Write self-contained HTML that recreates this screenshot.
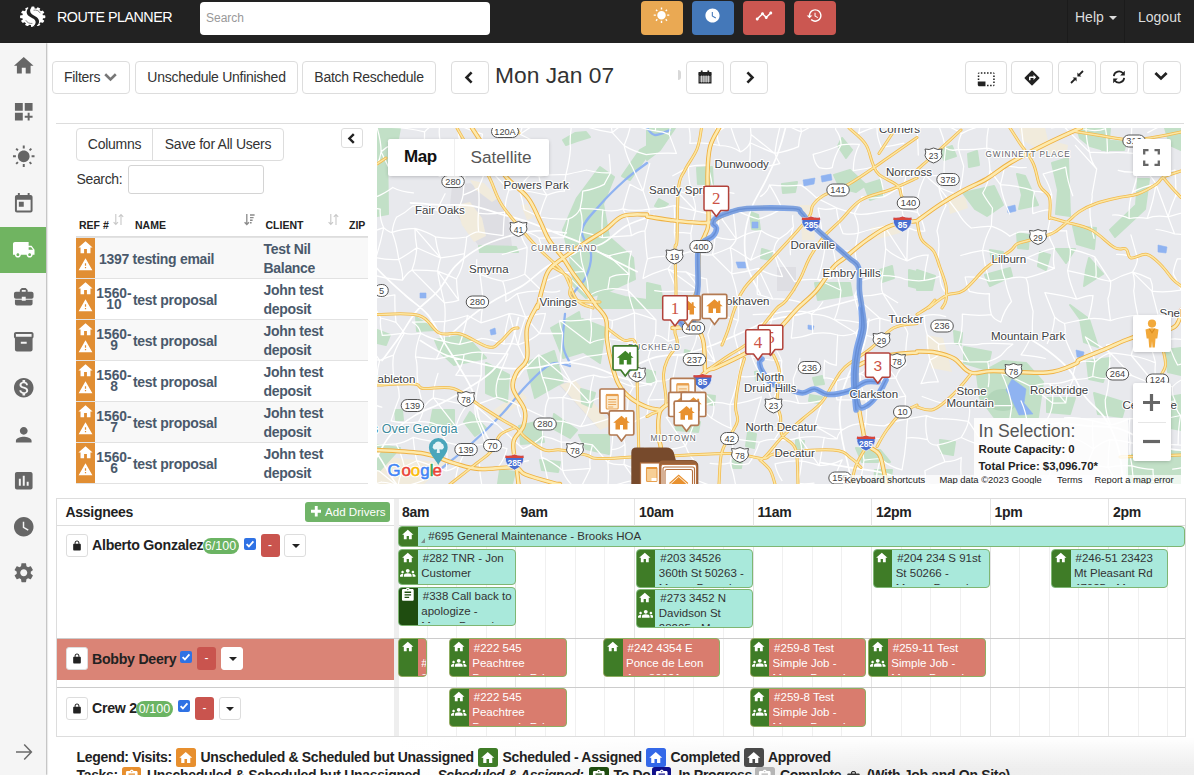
<!DOCTYPE html>
<html>
<head>
<meta charset="utf-8">
<title>Route Planner</title>
<style>
*{box-sizing:border-box;}
html,body{margin:0;padding:0;}
html{width:1194px;height:775px;overflow:hidden;}
body{width:1194px;height:775px;overflow:hidden;position:relative;background:#fff;font-family:"Liberation Sans",sans-serif;font-size:14px;color:#333;}
.abs{position:absolute;}
/* NAVBAR */
#nav{position:absolute;left:0;top:0;width:1194px;height:43px;background:#222;}
#nav .title{position:absolute;left:57px;top:9px;color:#fff;font-size:14.300px;letter-spacing:-.5px;line-height:16px;}
#nav .search{position:absolute;left:200px;top:2px;width:290px;height:33px;background:#fff;border-radius:4px;color:#999;font-size:12px;padding:9px 6px;}
.nbtn{position:absolute;top:1px;height:34px;width:41.500px;border-radius:4px;}
#nav .lnk{position:absolute;top:9px;color:#ddd;font-size:14px;}
/* SIDEBAR */
#side{position:absolute;left:0;top:43px;width:46px;height:732px;background:#f5f5f5;box-shadow:1px 0 1.500px rgba(0,0,0,.3);}
#side .act{position:absolute;left:0;top:184px;width:46px;height:46px;background:#70b461;}
#side svg{position:absolute;}
/* BUTTONS */
.btn{position:absolute;background:#fff;border:1px solid #ddd;border-radius:4px;color:#333;font-size:14px;letter-spacing:-.27px;text-align:center;white-space:nowrap;}
.tb{top:61px;height:33px;line-height:31px;}
hr.l{position:absolute;margin:0;border:0;border-top:1px solid #ddd;}

/* LEFT PANEL */
#left{position:absolute;left:0;top:0;}
.lb{top:128px;height:33px;line-height:31px;}
.th{position:absolute;white-space:nowrap;top:219px;font-size:10.500px;font-weight:bold;color:#222;line-height:12px;}
.row{position:absolute;left:76px;width:292px;height:41px;border-top:1px solid #e2e2e2;}
.row .oc{position:absolute;left:0;top:0;width:19px;height:41px;background:#e18e33;}
.row .ref{position:absolute;left:19px;width:38px;text-align:center;font-weight:bold;font-size:13.800px;color:#4a596b;line-height:11px;top:9px;}
.row .nm{position:absolute;left:57px;top:13px;font-weight:bold;letter-spacing:-.3px;font-size:14px;color:#4a596b;line-height:16px;white-space:nowrap;}
.row .cl{position:absolute;left:187.500px;top:1.500px;font-weight:bold;letter-spacing:-.3px;font-size:14px;color:#4a596b;line-height:19.500px;white-space:nowrap;}
.row svg{position:absolute;}

/* SCHEDULE */
#sched{position:absolute;left:0;top:0;}
.hl{position:absolute;height:1px;background:#ddd;}
.vl{position:absolute;width:1px;background:#e4e4e4;}
.ql{position:absolute;width:1px;background:#f0f0f0;}
.hr{position:absolute;top:503.500px;font-size:14px;letter-spacing:-.27px;font-weight:bold;color:#222;line-height:16px;}
.an{position:absolute;letter-spacing:-.28px;font-size:14.200px;font-weight:bold;color:#222;line-height:16px;white-space:nowrap;}
.lk{position:absolute;width:22px;height:23px;background:#fff;border:1px solid #ddd;border-radius:3px;}
.rd{position:absolute;width:19px;height:23px;background:#c9544e;border-radius:3px;color:#fff;font-size:12px;line-height:22px;text-align:center;}
.dd{position:absolute;width:22px;height:23px;background:#fff;border:1px solid #ddd;border-radius:3px;}
.dd:after{content:"";position:absolute;left:6.500px;top:9px;border-left:4px solid transparent;border-right:4px solid transparent;border-top:4px solid #222;}
.cb{position:absolute;width:12px;height:12px;background:#2f72e4;border-radius:2px;}
.bdg{position:absolute;height:16px;border-radius:8px;background:#6bb463;color:#fff;font-size:12.500px;line-height:16px;text-align:center;}
.ev{position:absolute;border-radius:4px;overflow:hidden;font-size:11.500px;line-height:15px;color:#333;white-space:nowrap;}
.ev .ic{position:absolute;left:0;top:0;bottom:0;width:18.500px;background:#3f7c27;}
.ev .tx{position:absolute;left:22px;top:1px;bottom:1.500px;right:0;overflow:hidden;}
.ev.r .tx{top:1.700px;}
.ev svg{position:absolute;}
.ev.m{background:#a9e9db;border:1px solid #7fb673;}
.ev.r{background:#d97c6e;border:1px solid #8fae62;color:#fff;}
.lg{position:absolute;top:749px;letter-spacing:-.32px;font-size:14px;font-weight:bold;color:#222;line-height:17px;white-space:nowrap;}
.lg2{position:absolute;top:767.400px;letter-spacing:-.32px;font-size:14px;font-weight:bold;color:#222;line-height:17px;white-space:nowrap;}
.li{position:absolute;width:19.500px;height:19px;border-radius:2.500px;}
.li svg{position:absolute;left:2px;top:2px;}
#app{position:absolute;left:0;top:0;width:1194px;height:775px;overflow:hidden;background:#fff;}
</style>
</head>
<body>
<div id="app">
<!-- NAV -->
<div id="nav">
  <svg class="abs" style="left:19px;top:5px;" width="28" height="24" viewBox="0 0 28 24">
    <g fill="#fff" transform="translate(13.700,11.700) scale(1.180,.96)"><circle cx="0" cy="0" r="9"/><rect x="-1.500" y="-10.700" width="3" height="3.200" rx=".7" transform="rotate(0)"/><rect x="-1.500" y="-10.700" width="3" height="3.200" rx=".7" transform="rotate(30)"/><rect x="-1.500" y="-10.700" width="3" height="3.200" rx=".7" transform="rotate(60)"/><rect x="-1.500" y="-10.700" width="3" height="3.200" rx=".7" transform="rotate(90)"/><rect x="-1.500" y="-10.700" width="3" height="3.200" rx=".7" transform="rotate(120)"/><rect x="-1.500" y="-10.700" width="3" height="3.200" rx=".7" transform="rotate(150)"/><rect x="-1.500" y="-10.700" width="3" height="3.200" rx=".7" transform="rotate(180)"/><rect x="-1.500" y="-10.700" width="3" height="3.200" rx=".7" transform="rotate(210)"/><rect x="-1.500" y="-10.700" width="3" height="3.200" rx=".7" transform="rotate(240)"/><rect x="-1.500" y="-10.700" width="3" height="3.200" rx=".7" transform="rotate(270)"/><rect x="-1.500" y="-10.700" width="3" height="3.200" rx=".7" transform="rotate(300)"/><rect x="-1.500" y="-10.700" width="3" height="3.200" rx=".7" transform="rotate(330)"/></g>
    <path d="M12.200 1.600C7.300 3.300 6.200 8.400 9.800 11.100 12.800 13.300 17.200 14.200 16.600 17.800 16.200 20.200 14.400 21.600 12.600 22.200 17.800 22 21.400 18.400 19.600 14.400 18 11 12.600 10.400 11.400 7.200 10.600 5 11.600 2.800 13.400 1.600Z" fill="#222"/>
    <path d="M14.500 5.200c3-.6 5.600.6 6.800 3" fill="none" stroke="#555" stroke-width=".7"/><path d="M6.800 15.200c1.200 2.400 3.800 3.600 6.600 3.200" fill="none" stroke="#555" stroke-width=".7"/>
  </svg>
  <div class="title">ROUTE PLANNER</div>
  <div class="search">Search</div>
  <div class="nbtn" style="left:641px;background:#eaa953;"></div>
  <div class="nbtn" style="left:692px;background:#4478b9;"></div>
  <div class="nbtn" style="left:743px;background:#cb5751;"></div>
  <div class="nbtn" style="left:794px;background:#cb5751;"></div>
  <svg class="abs" style="left:653px;top:7px;" width="17" height="17" viewBox="0 0 24 24"><path fill="#fff" d="M6.76 4.84l-1.8-1.79-1.41 1.41 1.79 1.79 1.42-1.41zM4 10.5H1v2h3v-2zm9-9.950h-2V3.500h2V.55zm7.450 3.910l-1.410-1.410-1.790 1.790 1.410 1.410 1.790-1.790zm-3.210 13.700l1.790 1.800 1.410-1.410-1.800-1.790-1.400 1.400zM20 10.500v2h3v-2h-3zm-8-5c-3.310 0-6 2.690-6 6s2.690 6 6 6 6-2.690 6-6-2.690-6-6-6zm-1 16.950h2V19.500h-2v2.950zm-7.450-3.910l1.410 1.410 1.790-1.800-1.410-1.410-1.790 1.800z"/></svg>
  <svg class="abs" style="left:704px;top:7px;" width="17" height="17" viewBox="0 0 24 24"><path fill="#fff" d="M12 2C6.5 2 2 6.5 2 12s4.500 10 10 10 10-4.500 10-10S17.500 2 12 2zm4.200 14.200L11 13V7h1.500v5.200l4.500 2.700-.8 1.300z"/></svg>
  <svg class="abs" style="left:755px;top:7px;" width="18" height="18" viewBox="0 0 24 24"><path fill="#fff" d="M23 8c0 1.100-.9 2-2 2-.18 0-.35-.02-.51-.07l-3.560 3.550c.05.160.07.340.07.520 0 1.100-.9 2-2 2s-2-.9-2-2c0-.18.02-.36.07-.52l-2.550-2.550c-.16.05-.34.07-.52.07s-.36-.02-.52-.07l-4.550 4.560c.05.160.07.330.07.510 0 1.100-.9 2-2 2s-2-.9-2-2 .9-2 2-2c.18 0 .35.02.51.07l4.560-4.550C8.020 9.360 8 9.180 8 9c0-1.100.9-2 2-2s2 .9 2 2c0 .18-.02.36-.07.52l2.550 2.550c.16-.05.34-.07.52-.07s.36.02.52.07l3.550-3.560C19.020 8.350 19 8.180 19 8c0-1.100.9-2 2-2s2 .9 2 2z"/></svg>
  <svg class="abs" style="left:806px;top:7px;" width="17" height="17" viewBox="0 0 24 24"><path fill="#fff" d="M13 3c-4.970 0-9 4.030-9 9H1l3.890 3.890.07.140L9 12H6c0-3.870 3.130-7 7-7s7 3.130 7 7-3.130 7-7 7c-1.930 0-3.680-.79-4.940-2.060l-1.420 1.420C8.270 19.990 10.510 21 13 21c4.970 0 9-4.030 9-9s-4.030-9-9-9zm-1 5v5l4.280 2.540.72-1.210-3.500-2.080V8H12z"/></svg>
  <div class="abs" style="left:1067px;top:0;width:1px;height:43px;background:#1b1b1b;"></div>
  <div class="abs" style="left:1124px;top:0;width:1px;height:43px;background:#1b1b1b;"></div>
  <div class="lnk" style="left:1075px;">Help</div>
  <div class="abs" style="left:1109px;top:16px;width:0;height:0;border-left:4px solid transparent;border-right:4px solid transparent;border-top:4px solid #ddd;"></div>
  <div class="lnk" style="left:1138px;">Logout</div>
</div>
<!-- SIDEBAR -->
<div id="side">
  <div class="act"></div>
  <svg style="left:11.8px;top:10.8px;" width="23.5" height="23.5" viewBox="0 0 24 24"><path fill="#666" d="M10 20v-6h4v6h5v-8h3L12 3 2 12h3v8z"/></svg>
  <svg style="left:11.8px;top:56.8px;" width="23.5" height="23.5" viewBox="0 0 24 24"><path fill="#666" d="M3 3h8v8H3zm10 0h8v8h-8zM3 13h8v8H3zm15 0h-2v3h-3v2h3v3h2v-3h3v-2h-3z"/></svg>
  <svg style="left:11.8px;top:102.2px;" width="23.5" height="23.5" viewBox="0 0 24 24"><path fill="#666" d="M6.76 4.84l-1.8-1.79-1.41 1.41 1.79 1.79 1.42-1.41zM4 10.5H1v2h3v-2zm9-9.950h-2V3.500h2V.55zm7.450 3.910l-1.410-1.410-1.790 1.790 1.410 1.410 1.790-1.790zm-3.210 13.700l1.790 1.800 1.410-1.410-1.800-1.790-1.400 1.400zM20 10.500v2h3v-2h-3zm-8-5c-3.310 0-6 2.690-6 6s2.690 6 6 6 6-2.690 6-6-2.690-6-6-6zm-1 16.950h2V19.500h-2v2.950zm-7.450-3.910l1.410 1.410 1.790-1.800-1.410-1.410-1.790 1.800z"/></svg>
  <svg style="left:11.9px;top:148.8px;" width="23.5" height="23.5" viewBox="0 0 24 24"><path fill="#666" d="M19 3h-1V1h-2v2H8V1H6v2H5c-1.110 0-1.990.9-1.990 2L3 19c0 1.100.89 2 2 2h14c1.100 0 2-.9 2-2V5c0-1.100-.9-2-2-2zm0 16H5V8h14v11zM7 10h5v5H7z"/></svg>
  <svg style="left:11.9px;top:195.2px;" width="23.5" height="23.5" viewBox="0 0 24 24"><path fill="#fff" d="M20 8h-3V4H3c-1.100 0-2 .9-2 2v11h2c0 1.660 1.340 3 3 3s3-1.340 3-3h6c0 1.660 1.340 3 3 3s3-1.340 3-3h2v-5l-3-4zM6 18.500c-.83 0-1.500-.67-1.500-1.500s.67-1.500 1.500-1.500 1.500.67 1.500 1.500-.67 1.500-1.500 1.500zm13.500-9l1.960 2.500H17V9.500h2.500zm-1.500 9c-.83 0-1.500-.67-1.500-1.500s.67-1.500 1.500-1.500 1.500.67 1.500 1.500-.67 1.500-1.500 1.500z"/></svg>
  <svg style="left:11.8px;top:241.8px;" width="23.5" height="23.5" viewBox="0 0 24 24"><path fill="#666" d="M10 16v-1H3.010L3 19c0 1.110.89 2 2 2h14c1.110 0 2-.89 2-2v-4h-7v1h-4zm10-9h-4.010V5l-2-2h-4l-2 2v2H4c-1.100 0-2 .9-2 2v3c0 1.110.89 2 2 2h6v-2h4v2h6c1.100 0 2-.9 2-2V9c0-1.100-.9-2-2-2zm-6 0h-4V5h4v2z"/></svg>
  <svg style="left:11.8px;top:287.2px;" width="23.5" height="23.5" viewBox="0 0 24 24"><path fill="#666" d="M20 2H4c-1 0-2 .9-2 2v3.010c0 .72.43 1.340 1 1.690V20c0 1.100 1.100 2 2 2h14c.9 0 2-.9 2-2V8.700c.57-.35 1-.97 1-1.690V4c0-1.100-1-2-2-2zm-5 12H9v-2h6v2zm5-7H4V4h16v3z"/></svg>
  <svg style="left:11.8px;top:333.2px;" width="23.5" height="23.5" viewBox="0 0 24 24"><path fill="#666" d="M12 2C6.480 2 2 6.480 2 12s4.480 10 10 10 10-4.480 10-10S17.520 2 12 2zm1.410 16.090V20h-2.670v-1.930c-1.710-.36-3.160-1.460-3.270-3.400h1.960c.1 1.050.82 1.870 2.650 1.870 1.960 0 2.400-.98 2.400-1.590 0-.83-.44-1.610-2.670-2.140-2.480-.6-4.180-1.620-4.180-3.670 0-1.720 1.390-2.840 3.110-3.210V4h2.670v1.950c1.860.45 2.790 1.860 2.850 3.390H14.300c-.05-1.110-.64-1.870-2.220-1.870-1.500 0-2.400.68-2.400 1.640 0 .84.65 1.390 2.670 1.910s4.180 1.390 4.180 3.910c-.01 1.830-1.380 2.830-3.120 3.160z"/></svg>
  <svg style="left:11.9px;top:379.8px;" width="23.5" height="23.5" viewBox="0 0 24 24"><path fill="#666" d="M12 12c2.210 0 4-1.790 4-4s-1.790-4-4-4-4 1.790-4 4 1.790 4 4 4zm0 2c-2.670 0-8 1.340-8 4v2h16v-2c0-2.660-5.330-4-8-4z"/></svg>
  <svg style="left:11.8px;top:426.1px;" width="23.5" height="23.5" viewBox="0 0 24 24"><path fill="#666" d="M19 3H5c-1.100 0-2 .9-2 2v14c0 1.100.9 2 2 2h14c1.100 0 2-.9 2-2V5c0-1.100-.9-2-2-2zM9 17H7v-7h2v7zm4 0h-2V7h2v10zm4 0h-2v-4h2v4z"/></svg>
  <svg style="left:11.8px;top:472.2px;" width="23.5" height="23.5" viewBox="0 0 24 24"><path fill="#666" d="M12 2C6.500 2 2 6.500 2 12s4.500 10 10 10 10-4.500 10-10S17.500 2 12 2zm4.200 14.200L11 13V7h1.500v5.200l4.500 2.700-.8 1.300z"/></svg>
  <svg style="left:11.8px;top:518.2px;" width="23.5" height="23.5" viewBox="0 0 24 24"><path fill="#666" d="M19.140 12.940c.04-.3.06-.61.06-.94 0-.32-.02-.64-.07-.94l2.030-1.580c.18-.14.23-.41.12-.61l-1.920-3.320c-.12-.22-.37-.29-.59-.22l-2.390.96c-.5-.38-1.030-.7-1.620-.94l-.36-2.540c-.04-.24-.24-.41-.48-.41h-3.840c-.24 0-.43.17-.47.41l-.36 2.540c-.59.24-1.130.57-1.620.94l-2.390-.96c-.22-.08-.47 0-.59.22L2.740 8.870c-.12.21-.08.47.12.61l2.030 1.580c-.05.3-.09.63-.09.94s.02.640.07.940l-2.030 1.580c-.18.140-.23.410-.12.610l1.920 3.320c.12.220.37.290.59.220l2.390-.96c.5.380 1.030.7 1.620.94l.36 2.540c.05.240.24.410.48.410h3.840c.24 0 .44-.17.47-.41l.36-2.540c.59-.24 1.130-.56 1.620-.94l2.390.96c.22.08.47 0 .59-.22l1.920-3.320c.12-.22.07-.47-.12-.61l-2.010-1.580zM12 15.600c-1.980 0-3.600-1.620-3.600-3.600s1.620-3.600 3.600-3.600 3.600 1.620 3.600 3.600-1.620 3.600-3.600 3.600z"/></svg>
  <svg style="left:15px;top:700px;" width="18" height="18" viewBox="0 0 18 18"><path d="M1 9h15M9.200 1.600L16.400 9 9.200 16.400" fill="none" stroke="#6a6a6a" stroke-width="1.500"/></svg>
</div>
<!-- TOOLBAR -->
<div class="btn tb" style="left:52px;width:78px;text-align:left;padding-left:11px;">Filters</div>
<svg class="abs" style="left:104px;top:72px;" width="13" height="10" viewBox="0 0 13 10"><path d="M1.200 2.300l5.300 5.200 5.300-5.200" fill="none" stroke="#777" stroke-width="2.600"/></svg>
<div class="btn tb" style="left:135px;width:163px;">Unschedule Unfinished</div>
<div class="btn tb" style="left:302px;width:134px;">Batch Reschedule</div>
<div class="btn tb" style="left:451px;width:38px;"></div>
<svg class="abs" style="left:464px;top:71px;" width="10" height="13" viewBox="0 0 10 13"><path d="M7.600 1.300L2.500 6.500l5.100 5.200" fill="none" stroke="#222" stroke-width="2.600"/></svg>
<div class="abs" style="left:495px;top:61px;font-size:22.800px;line-height:28px;color:#333;white-space:nowrap;">Mon Jan 07</div>
<div class="abs" style="left:677.500px;top:70px;width:3px;height:10px;background:#d8d8d8;border-radius:0 3px 3px 0;"></div>
<div class="btn tb" style="left:686px;width:38px;"></div>
<svg class="abs" style="left:698px;top:70px;" width="14" height="14" viewBox="0 0 14 14"><path fill="#222" d="M0.500 3.500h13v10h-13zM2.800 0.500h1.800v3h-1.800zM9.400 0.500h1.800v3h-1.800z"/><path d="M0.500 2h13v2.600h-13z" fill="#222"/><g stroke="#fff" stroke-width="0.800"><path d="M1.500 7h11M1.500 9h11M1.500 11h11M3.700 5.500v7M5.900 5.500v7M8.100 5.500v7M10.300 5.500v7"/></g></svg>
<div class="btn tb" style="left:730px;width:38px;"></div>
<svg class="abs" style="left:745px;top:71px;" width="10" height="13" viewBox="0 0 10 13"><path d="M2.400 1.300L7.500 6.500l-5.100 5.200" fill="none" stroke="#222" stroke-width="2.600"/></svg>
<div class="btn tb" style="left:965px;width:42px;"></div>
<svg class="abs" style="left:977px;top:69.500px;" width="18.500" height="18.500" viewBox="0 0 24 24"><path fill="#222" d="M23 15h-2v2h2v-2zm0-4h-2v2h2v-2zm0 8h-2v2c1 0 2-1 2-2zM15 3h-2v2h2V3zm8 4h-2v2h2V7zm-2-4v2h2c0-1-1-2-2-2zM3 21h8v-6H1v4c0 1.100.9 2 2 2zM3 7H1v2h2V7zm12 12h-2v2h2v-2zm4-16h-2v2h2V3zm0 16h-2v2h2v-2zM3 3C2 3 1 4 1 5h2V3zm0 8H1v2h2v-2zm8-8H9v2h2V3zM7 3H5v2h2V3z"/></svg>
<div class="btn tb" style="left:1011px;width:42px;"></div>
<svg class="abs" style="left:1023px;top:69px;" width="18" height="18" viewBox="0 0 24 24"><path fill="#222" d="M21.710 11.290l-9-9c-.39-.39-1.020-.39-1.410 0l-9 9c-.39.390-.39 1.020 0 1.410l9 9c.39.390 1.020.390 1.410 0l9-9c.39-.38.39-1.010 0-1.410zM14 14.500V12h-4v3H8v-4c0-.55.45-1 1-1h5V7.500l3.500 3.500-3.500 3.500z"/></svg>
<div class="btn tb" style="left:1058px;width:38px;"></div>
<svg class="abs" style="left:1070px;top:70px;" width="14" height="14" viewBox="0 0 14 14"><g fill="none" stroke="#222" stroke-width="1.800"><path d="M13 1L8.600 5.400M1 13l4.400-4.400"/></g><path fill="#222" d="M7.400 2.600v4h4zM6.600 11.400v-4h-4z"/></svg>
<div class="btn tb" style="left:1100px;width:38px;"></div>
<svg class="abs" style="left:1112px;top:70px;" width="14" height="14" viewBox="0 0 14 14"><g fill="none" stroke="#222" stroke-width="1.700"><path d="M1.800 6.200A5.300 5.300 0 0 1 11.300 3.600"/><path d="M12.200 7.800A5.300 5.300 0 0 1 2.700 10.400"/></g><path fill="#222" d="M12.800 0.800v4.600h-4.600zM1.200 13.200v-4.600h4.600z"/></svg>
<div class="btn tb" style="left:1143px;width:38px;"></div>
<svg class="abs" style="left:1154px;top:71px;" width="14" height="10" viewBox="0 0 14 10"><path d="M1.400 2L7 7.400 12.600 2" fill="none" stroke="#222" stroke-width="2.800"/></svg>
<hr class="l" style="left:56px;top:123px;width:1128px;">
<!-- LEFT PANEL -->
<div id="left">
<div class="btn lb" style="left:76px;width:77px;border-radius:4px 0 0 4px;">Columns</div>
<div class="btn lb" style="left:152px;width:132px;border-radius:0 4px 4px 0;">Save for All Users</div>
<div class="btn" style="left:341px;top:128px;width:22px;height:20px;border-radius:3px;"></div>
<svg class="abs" style="left:347px;top:133px;" width="9" height="11" viewBox="0 0 9 11"><path d="M6.800 1.200L2.400 5.500l4.400 4.300" fill="none" stroke="#222" stroke-width="2.400"/></svg>
<div class="abs" style="left:76.500px;top:170.500px;font-size:14px;letter-spacing:-.36px;line-height:16px;color:#333;">Search:</div>
<div class="abs" style="left:128px;top:165px;width:136px;height:29px;border:1px solid #d4d4d4;border-radius:3px;background:#fff;"></div>
<div class="th" style="left:79px;">REF #</div><svg class="abs" style="left:113px;top:213px;" width="11" height="13" viewBox="0 0 11 13"><g fill="none" stroke="#c8c8c8" stroke-width="1.100"><path d="M2.800 1v10.500M0.600 9.200l2.200 2.300 2.200-2.300"/><path d="M8 12V1.500M5.800 3.800L8 1.500l2.200 2.300"/></g></svg>
<div class="th" style="left:135px;">NAME</div><svg class="abs" style="left:244px;top:213px;" width="11" height="13" viewBox="0 0 11 13"><g fill="none" stroke="#8a8a8a" stroke-width="1.300"><path d="M2.800 1v10.500M0.600 9.200l2.200 2.300 2.200-2.300"/><path d="M6 2h4.600M6 4.600h3.600M6 7.200h2.600M6 9.800h1.600" stroke-width="1.400"/></g></svg>
<div class="th" style="left:265.500px;">CLIENT</div><svg class="abs" style="left:328px;top:213px;" width="11" height="13" viewBox="0 0 11 13"><g fill="none" stroke="#c8c8c8" stroke-width="1.100"><path d="M2.800 1v10.500M0.600 9.200l2.200 2.300 2.200-2.300"/><path d="M8 12V1.500M5.800 3.800L8 1.500l2.200 2.300"/></g></svg>
<div class="th" style="left:349px;">ZIP</div>
<div class="abs" style="left:76px;top:236px;width:292px;height:2px;background:#ddd;"></div>
<div class="row" style="top:237px;background:#f8f8f8;"><div class="oc"></div>
<svg style="left:1px;top:1px;" width="17" height="17" viewBox="0 0 24 24"><path fill="#fff" d="M10 20v-6h4v6h5v-8h3L12 3 2 12h3v8z"/></svg>
<svg style="left:2px;top:19px;" width="15" height="15" viewBox="0 0 24 24"><path fill="#fff" d="M1 21h22L12 2 1 21zm12-3h-2v-2h2v2zm0-4h-2v-4h2v4z"/></svg>
<div class="nm" style="left:23px;">1397 testing email</div><div class="cl">Test Nil<br>Balance</div></div>
<div class="row" style="top:278px;background:#fff;"><div class="oc"></div>
<svg style="left:1px;top:1px;" width="17" height="17" viewBox="0 0 24 24"><path fill="#fff" d="M10 20v-6h4v6h5v-8h3L12 3 2 12h3v8z"/></svg>
<svg style="left:2px;top:19px;" width="15" height="15" viewBox="0 0 24 24"><path fill="#fff" d="M1 21h22L12 2 1 21zm12-3h-2v-2h2v2zm0-4h-2v-4h2v4z"/></svg>
<div class="ref">1560-<br>10</div><div class="nm">test proposal</div><div class="cl">John test<br>deposit</div></div>
<div class="row" style="top:319px;background:#f8f8f8;"><div class="oc"></div>
<svg style="left:1px;top:1px;" width="17" height="17" viewBox="0 0 24 24"><path fill="#fff" d="M10 20v-6h4v6h5v-8h3L12 3 2 12h3v8z"/></svg>
<svg style="left:2px;top:19px;" width="15" height="15" viewBox="0 0 24 24"><path fill="#fff" d="M1 21h22L12 2 1 21zm12-3h-2v-2h2v2zm0-4h-2v-4h2v4z"/></svg>
<div class="ref">1560-<br>9</div><div class="nm">test proposal</div><div class="cl">John test<br>deposit</div></div>
<div class="row" style="top:360px;background:#fff;"><div class="oc"></div>
<svg style="left:1px;top:1px;" width="17" height="17" viewBox="0 0 24 24"><path fill="#fff" d="M10 20v-6h4v6h5v-8h3L12 3 2 12h3v8z"/></svg>
<svg style="left:2px;top:19px;" width="15" height="15" viewBox="0 0 24 24"><path fill="#fff" d="M1 21h22L12 2 1 21zm12-3h-2v-2h2v2zm0-4h-2v-4h2v4z"/></svg>
<div class="ref">1560-<br>8</div><div class="nm">test proposal</div><div class="cl">John test<br>deposit</div></div>
<div class="row" style="top:401px;background:#f8f8f8;"><div class="oc"></div>
<svg style="left:1px;top:1px;" width="17" height="17" viewBox="0 0 24 24"><path fill="#fff" d="M10 20v-6h4v6h5v-8h3L12 3 2 12h3v8z"/></svg>
<svg style="left:2px;top:19px;" width="15" height="15" viewBox="0 0 24 24"><path fill="#fff" d="M1 21h22L12 2 1 21zm12-3h-2v-2h2v2zm0-4h-2v-4h2v4z"/></svg>
<div class="ref">1560-<br>7</div><div class="nm">test proposal</div><div class="cl">John test<br>deposit</div></div>
<div class="row" style="top:442px;background:#fff;"><div class="oc"></div>
<svg style="left:1px;top:1px;" width="17" height="17" viewBox="0 0 24 24"><path fill="#fff" d="M10 20v-6h4v6h5v-8h3L12 3 2 12h3v8z"/></svg>
<svg style="left:2px;top:19px;" width="15" height="15" viewBox="0 0 24 24"><path fill="#fff" d="M1 21h22L12 2 1 21zm12-3h-2v-2h2v2zm0-4h-2v-4h2v4z"/></svg>
<div class="ref">1560-<br>6</div><div class="nm">test proposal</div><div class="cl">John test<br>deposit</div></div>
<div class="abs" style="left:76px;top:483px;width:292px;height:1px;background:#e2e2e2;"></div>
</div>
<!-- MAP -->
<div id="map" class="abs" style="left:377px;top:128px;width:804px;height:356px;background:#e8e9ed;overflow:hidden;"><svg width="804" height="356" viewBox="377 128 804 356" style="position:absolute;left:0;top:0;font-family:'Liberation Sans',sans-serif;">
<rect x="377" y="128" width="804" height="356" fill="#e8e9ed"/>
<polygon points="452.0,186.0 470.0,183.0 498.0,200.0 508.0,215.0 512.0,246.0 480.0,248.0 466.0,228.0 450.0,205.0" fill="#dedee3"/>
<polygon points="777.0,267.0 796.0,267.0 796.0,291.0 777.0,291.0" fill="#dedee3"/>
<polygon points="558.0,384.0 570.0,380.0 610.0,424.0 598.0,428.0" fill="#dedee3"/>
<polygon points="456.0,205.0 470.0,202.0 482.0,218.0 486.0,236.0 474.0,242.0 462.0,225.0" fill="#f1ebdc"/>
<polygon points="470.0,180.0 484.0,183.0 498.0,198.0 492.0,202.0 476.0,190.0" fill="#f1ebdc"/>
<polygon points="521.0,205.0 528.0,204.0 533.0,218.0 527.0,220.0" fill="#f1ebdc"/>
<polygon points="377.0,456.0 447.0,463.0 424.0,484.0 377.0,484.0" fill="#f1ebdc"/>
<polygon points="488.0,414.0 521.0,391.0 527.0,398.0 495.0,422.0" fill="#f1ebdc"/>
<polygon points="560.0,385.0 575.0,380.0 612.0,425.0 600.0,430.0" fill="#f1ebdc"/>
<polygon points="926.0,335.0 943.0,338.0 952.0,372.0 931.0,368.0" fill="#f1ebdc"/>
<polygon points="1019.0,128.0 1045.0,128.0 1048.0,140.0 1068.0,145.0 1066.0,158.0 1040.0,150.0 1022.0,140.0" fill="#f1ebdc"/>
<polygon points="948.0,200.0 965.0,196.0 968.0,208.0 950.0,214.0" fill="#f1ebdc"/>
<polygon points="870.0,228.0 900.0,222.0 904.0,232.0 874.0,240.0" fill="#f1ebdc"/>
<polygon points="800.0,205.0 812.0,205.0 815.0,240.0 802.0,240.0" fill="#f1ebdc"/>
<polygon points="640.0,455.0 660.0,455.0 660.0,484.0 640.0,484.0" fill="#f1ebdc"/>
<polygon points="377.0,142.0 387.0,142.0 388.0,214.0 377.0,216.0" fill="#c2e0c7" stroke="#c2e0c7" stroke-width="2" stroke-linejoin="round"/>
<polygon points="377.0,128.0 400.0,128.0 398.0,139.0 377.0,141.0" fill="#c2e0c7" stroke="#c2e0c7" stroke-width="2" stroke-linejoin="round"/>
<polygon points="600.0,167.0 614.0,177.0 603.0,204.0 609.0,237.0 633.0,258.0 635.0,279.0 609.0,291.0 586.0,298.0 574.0,286.0 570.0,258.0 563.0,230.0 577.0,198.0" fill="#c2e0c7" stroke="#c2e0c7" stroke-width="2" stroke-linejoin="round"/>
<polygon points="647.0,156.0 630.0,180.0 622.0,176.0 640.0,150.0 647.0,146.0" fill="#c2e0c7" stroke="#c2e0c7" stroke-width="2" stroke-linejoin="round"/>
<polygon points="563.0,140.0 575.0,133.0 586.0,132.0 590.0,137.0 577.0,141.0 566.0,145.0" fill="#c2e0c7" stroke="#c2e0c7" stroke-width="2" stroke-linejoin="round"/>
<polygon points="479.0,246.0 516.0,247.0 518.0,252.0 480.0,252.0" fill="#c2e0c7" stroke="#c2e0c7" stroke-width="2" stroke-linejoin="round"/>
<polygon points="600.0,290.0 625.0,297.0 647.0,300.0 647.0,308.0 596.0,308.0" fill="#c2e0c7" stroke="#c2e0c7" stroke-width="2" stroke-linejoin="round"/>
<polygon points="647.0,128.0 675.0,128.0 660.0,150.0 647.0,160.0" fill="#c2e0c7" stroke="#c2e0c7" stroke-width="2" stroke-linejoin="round"/>
<polygon points="697.0,168.0 712.0,167.0 713.0,184.0 698.0,184.0" fill="#c2e0c7" stroke="#c2e0c7" stroke-width="2" stroke-linejoin="round"/>
<polygon points="782.0,184.0 797.0,182.0 795.0,192.0 783.0,193.0" fill="#c2e0c7" stroke="#c2e0c7" stroke-width="2" stroke-linejoin="round"/>
<polygon points="750.0,212.0 758.0,215.0 760.0,230.0 752.0,229.0" fill="#c2e0c7" stroke="#c2e0c7" stroke-width="2" stroke-linejoin="round"/>
<polygon points="659.0,199.0 668.0,204.0 662.0,208.0 655.0,206.0" fill="#c2e0c7" stroke="#c2e0c7" stroke-width="2" stroke-linejoin="round"/>
<polygon points="842.0,138.0 852.0,150.0 846.0,158.0 838.0,146.0" fill="#c2e0c7" stroke="#c2e0c7" stroke-width="2" stroke-linejoin="round"/>
<polygon points="834.0,175.0 850.0,170.0 866.0,185.0 856.0,192.0 840.0,188.0" fill="#c2e0c7" stroke="#c2e0c7" stroke-width="2" stroke-linejoin="round"/>
<polygon points="864.0,185.0 880.0,180.0 884.0,195.0 870.0,200.0" fill="#c2e0c7" stroke="#c2e0c7" stroke-width="2" stroke-linejoin="round"/>
<polygon points="762.0,249.0 772.0,252.0 770.0,260.0 761.0,258.0" fill="#c2e0c7" stroke="#c2e0c7" stroke-width="2" stroke-linejoin="round"/>
<polygon points="815.0,283.0 850.0,283.0 852.0,295.0 818.0,300.0" fill="#c2e0c7" stroke="#c2e0c7" stroke-width="2" stroke-linejoin="round"/>
<polygon points="647.0,283.0 660.0,286.0 664.0,308.0 647.0,308.0" fill="#c2e0c7" stroke="#c2e0c7" stroke-width="2" stroke-linejoin="round"/>
<polygon points="880.0,270.0 892.0,266.0 894.0,278.0 882.0,282.0" fill="#c2e0c7" stroke="#c2e0c7" stroke-width="2" stroke-linejoin="round"/>
<polygon points="909.0,270.0 917.0,272.0 917.0,288.0 909.0,286.0" fill="#c2e0c7" stroke="#c2e0c7" stroke-width="2" stroke-linejoin="round"/>
<polygon points="968.0,154.0 977.0,151.0 979.0,165.0 969.0,167.0" fill="#c2e0c7" stroke="#c2e0c7" stroke-width="2" stroke-linejoin="round"/>
<polygon points="963.0,193.0 994.0,186.0 1003.0,205.0 987.0,216.0 975.0,209.0" fill="#c2e0c7" stroke="#c2e0c7" stroke-width="2" stroke-linejoin="round"/>
<polygon points="1017.0,174.0 1025.0,176.0 1038.0,205.0 1019.0,209.0 1022.0,195.0" fill="#c2e0c7" stroke="#c2e0c7" stroke-width="2" stroke-linejoin="round"/>
<polygon points="1052.0,163.0 1068.0,158.0 1070.0,216.0 1056.0,214.0 1058.0,190.0" fill="#c2e0c7" stroke="#c2e0c7" stroke-width="2" stroke-linejoin="round"/>
<polygon points="1073.0,226.0 1096.0,228.0 1094.0,249.0 1077.0,244.0" fill="#c2e0c7" stroke="#c2e0c7" stroke-width="2" stroke-linejoin="round"/>
<polygon points="1077.0,128.0 1110.0,128.0 1108.0,151.0 1090.0,146.0 1080.0,138.0" fill="#c2e0c7" stroke="#c2e0c7" stroke-width="2" stroke-linejoin="round"/>
<polygon points="1100.0,140.0 1126.0,142.0 1124.0,150.0 1102.0,150.0" fill="#c2e0c7" stroke="#c2e0c7" stroke-width="2" stroke-linejoin="round"/>
<polygon points="1138.0,179.0 1149.0,179.0 1145.0,209.0 1115.0,237.0 1110.0,230.0 1136.0,205.0" fill="#c2e0c7" stroke="#c2e0c7" stroke-width="2" stroke-linejoin="round"/>
<polygon points="1017.0,233.0 1029.0,235.0 1028.0,249.0 1018.0,248.0" fill="#c2e0c7" stroke="#c2e0c7" stroke-width="2" stroke-linejoin="round"/>
<polygon points="1056.0,249.0 1075.0,249.0 1066.0,263.0" fill="#c2e0c7" stroke="#c2e0c7" stroke-width="2" stroke-linejoin="round"/>
<polygon points="1089.0,258.0 1103.0,274.0 1084.0,286.0 1086.0,270.0" fill="#c2e0c7" stroke="#c2e0c7" stroke-width="2" stroke-linejoin="round"/>
<polygon points="990.0,250.0 1003.0,252.0 1000.0,262.0 992.0,260.0" fill="#c2e0c7" stroke="#c2e0c7" stroke-width="2" stroke-linejoin="round"/>
<polygon points="917.0,270.0 935.0,276.0 932.0,290.0 917.0,290.0" fill="#c2e0c7" stroke="#c2e0c7" stroke-width="2" stroke-linejoin="round"/>
<polygon points="985.0,275.0 1010.0,268.0 1012.0,276.0 990.0,286.0" fill="#c2e0c7" stroke="#c2e0c7" stroke-width="2" stroke-linejoin="round"/>
<polygon points="1165.0,128.0 1181.0,128.0 1181.0,150.0 1170.0,145.0" fill="#c2e0c7" stroke="#c2e0c7" stroke-width="2" stroke-linejoin="round"/>
<polygon points="1040.0,252.0 1050.0,255.0 1046.0,270.0 1038.0,266.0" fill="#c2e0c7" stroke="#c2e0c7" stroke-width="2" stroke-linejoin="round"/>
<polygon points="940.0,150.0 952.0,146.0 956.0,156.0 944.0,160.0" fill="#c2e0c7" stroke="#c2e0c7" stroke-width="2" stroke-linejoin="round"/>
<polygon points="416.0,317.0 435.0,330.0 417.0,331.0" fill="#c2e0c7" stroke="#c2e0c7" stroke-width="2" stroke-linejoin="round"/>
<polygon points="435.0,340.0 465.0,335.0 486.0,358.0 454.0,365.0 440.0,352.0" fill="#c2e0c7" stroke="#c2e0c7" stroke-width="2" stroke-linejoin="round"/>
<polygon points="486.0,363.0 509.0,375.0 507.0,402.0 486.0,393.0" fill="#c2e0c7" stroke="#c2e0c7" stroke-width="2" stroke-linejoin="round"/>
<polygon points="526.0,363.0 554.0,351.0 563.0,382.0 535.0,398.0" fill="#c2e0c7" stroke="#c2e0c7" stroke-width="2" stroke-linejoin="round"/>
<polygon points="551.0,328.0 579.0,312.0 586.0,351.0 563.0,358.0" fill="#c2e0c7" stroke="#c2e0c7" stroke-width="2" stroke-linejoin="round"/>
<polygon points="582.0,319.0 605.0,328.0 600.0,363.0 582.0,351.0" fill="#c2e0c7" stroke="#c2e0c7" stroke-width="2" stroke-linejoin="round"/>
<polygon points="433.0,410.0 454.0,410.0 454.0,428.0 430.0,426.0" fill="#c2e0c7" stroke="#c2e0c7" stroke-width="2" stroke-linejoin="round"/>
<polygon points="470.0,412.0 486.0,428.0 475.0,436.0 464.0,422.0" fill="#c2e0c7" stroke="#c2e0c7" stroke-width="2" stroke-linejoin="round"/>
<polygon points="519.0,426.0 540.0,421.0 544.0,442.0 521.0,444.0" fill="#c2e0c7" stroke="#c2e0c7" stroke-width="2" stroke-linejoin="round"/>
<polygon points="554.0,414.0 577.0,430.0 570.0,438.0 552.0,428.0" fill="#c2e0c7" stroke="#c2e0c7" stroke-width="2" stroke-linejoin="round"/>
<polygon points="581.0,389.0 595.0,393.0 591.0,407.0 582.0,403.0" fill="#c2e0c7" stroke="#c2e0c7" stroke-width="2" stroke-linejoin="round"/>
<polygon points="579.0,435.0 609.0,435.0 609.0,454.0 586.0,449.0" fill="#c2e0c7" stroke="#c2e0c7" stroke-width="2" stroke-linejoin="round"/>
<polygon points="377.0,330.0 390.0,335.0 386.0,345.0 377.0,343.0" fill="#c2e0c7" stroke="#c2e0c7" stroke-width="2" stroke-linejoin="round"/>
<polygon points="395.0,410.0 402.0,410.0 403.0,420.0 396.0,420.0" fill="#c2e0c7" stroke="#c2e0c7" stroke-width="2" stroke-linejoin="round"/>
<polygon points="377.0,445.0 400.0,448.0 380.0,470.0 377.0,470.0" fill="#c2e0c7" stroke="#c2e0c7" stroke-width="2" stroke-linejoin="round"/>
<polygon points="500.0,470.0 515.0,472.0 512.0,484.0 498.0,484.0" fill="#c2e0c7" stroke="#c2e0c7" stroke-width="2" stroke-linejoin="round"/>
<polygon points="540.0,460.0 560.0,462.0 558.0,472.0 542.0,470.0" fill="#c2e0c7" stroke="#c2e0c7" stroke-width="2" stroke-linejoin="round"/>
<polygon points="647.0,370.0 655.0,372.0 654.0,382.0 647.0,382.0" fill="#c2e0c7" stroke="#c2e0c7" stroke-width="2" stroke-linejoin="round"/>
<polygon points="707.0,395.0 715.0,396.0 714.0,405.0 707.0,404.0" fill="#c2e0c7" stroke="#c2e0c7" stroke-width="2" stroke-linejoin="round"/>
<polygon points="748.0,432.0 756.0,434.0 754.0,448.0 746.0,446.0" fill="#c2e0c7" stroke="#c2e0c7" stroke-width="2" stroke-linejoin="round"/>
<polygon points="796.0,440.0 804.0,441.0 803.0,450.0 796.0,450.0" fill="#c2e0c7" stroke="#c2e0c7" stroke-width="2" stroke-linejoin="round"/>
<polygon points="810.0,395.0 822.0,397.0 818.0,403.0 809.0,401.0" fill="#c2e0c7" stroke="#c2e0c7" stroke-width="2" stroke-linejoin="round"/>
<polygon points="856.0,448.0 880.0,450.0 890.0,462.0 862.0,462.0" fill="#c2e0c7" stroke="#c2e0c7" stroke-width="2" stroke-linejoin="round"/>
<polygon points="875.0,470.0 892.0,470.0 890.0,484.0 874.0,484.0" fill="#c2e0c7" stroke="#c2e0c7" stroke-width="2" stroke-linejoin="round"/>
<polygon points="733.0,460.0 742.0,461.0 741.0,468.0 733.0,468.0" fill="#c2e0c7" stroke="#c2e0c7" stroke-width="2" stroke-linejoin="round"/>
<polygon points="813.0,378.0 822.0,376.0 824.0,384.0 815.0,385.0" fill="#c2e0c7" stroke="#c2e0c7" stroke-width="2" stroke-linejoin="round"/>
<polygon points="685.0,350.0 692.0,352.0 690.0,360.0 684.0,358.0" fill="#c2e0c7" stroke="#c2e0c7" stroke-width="2" stroke-linejoin="round"/>
<polygon points="675.0,420.0 700.0,422.0 698.0,432.0 676.0,430.0" fill="#c2e0c7" stroke="#c2e0c7" stroke-width="2" stroke-linejoin="round"/>
<polygon points="755.0,372.0 763.0,370.0 764.0,380.0 756.0,381.0" fill="#c2e0c7" stroke="#c2e0c7" stroke-width="2" stroke-linejoin="round"/>
<polygon points="977.0,375.0 1003.0,361.0 1026.0,363.0 1043.0,382.0 1038.0,417.0 994.0,417.0 980.0,398.0" fill="#c2e0c7" stroke="#c2e0c7" stroke-width="2" stroke-linejoin="round"/>
<polygon points="1070.0,305.0 1089.0,319.0 1098.0,347.0 1084.0,342.0 1080.0,319.0" fill="#c2e0c7" stroke="#c2e0c7" stroke-width="2" stroke-linejoin="round"/>
<polygon points="1087.0,361.0 1110.0,358.0 1103.0,382.0 1089.0,379.0" fill="#c2e0c7" stroke="#c2e0c7" stroke-width="2" stroke-linejoin="round"/>
<polygon points="1094.0,393.0 1126.0,403.0 1122.0,417.0 1098.0,414.0" fill="#c2e0c7" stroke="#c2e0c7" stroke-width="2" stroke-linejoin="round"/>
<polygon points="954.0,331.0 962.0,333.0 961.0,345.0 955.0,343.0" fill="#c2e0c7" stroke="#c2e0c7" stroke-width="2" stroke-linejoin="round"/>
<polygon points="964.0,347.0 991.0,352.0 987.0,370.0 964.0,363.0" fill="#c2e0c7" stroke="#c2e0c7" stroke-width="2" stroke-linejoin="round"/>
<polygon points="1047.0,398.0 1075.0,398.0 1070.0,414.0 1047.0,412.0" fill="#c2e0c7" stroke="#c2e0c7" stroke-width="2" stroke-linejoin="round"/>
<polygon points="1150.0,400.0 1181.0,395.0 1181.0,430.0 1155.0,425.0" fill="#c2e0c7" stroke="#c2e0c7" stroke-width="2" stroke-linejoin="round"/>
<polygon points="1165.0,350.0 1181.0,348.0 1181.0,375.0 1168.0,372.0" fill="#c2e0c7" stroke="#c2e0c7" stroke-width="2" stroke-linejoin="round"/>
<polygon points="1130.0,455.0 1181.0,450.0 1181.0,484.0 1125.0,484.0" fill="#c2e0c7" stroke="#c2e0c7" stroke-width="2" stroke-linejoin="round"/>
<polygon points="940.0,440.0 955.0,442.0 953.0,455.0 941.0,453.0" fill="#c2e0c7" stroke="#c2e0c7" stroke-width="2" stroke-linejoin="round"/>
<ellipse cx="1003" cy="400" rx="16" ry="11" fill="#b3d6ba"/>
<polygon points="1012.0,379.0 1026.0,389.0 1024.0,403.0 1033.0,414.0 1019.0,415.0 1012.0,400.0 1006.0,390.0" fill="#8fb3f1" stroke="#8fb3f1" stroke-width=".6" stroke-linejoin="round"/>
<polygon points="1007.0,207.0 1015.0,205.0 1016.0,211.0 1008.0,213.0" fill="#8fb3f1" stroke="#8fb3f1" stroke-width=".6" stroke-linejoin="round"/>
<polygon points="1158.0,245.0 1167.0,247.0 1166.0,253.0 1158.0,252.0" fill="#8fb3f1" stroke="#8fb3f1" stroke-width=".6" stroke-linejoin="round"/>
<polygon points="803.0,180.0 815.0,178.0 814.0,184.0 804.0,186.0" fill="#8fb3f1" stroke="#8fb3f1" stroke-width=".6" stroke-linejoin="round"/>
<polygon points="821.0,176.0 831.0,174.0 832.0,180.0 822.0,182.0" fill="#8fb3f1" stroke="#8fb3f1" stroke-width=".6" stroke-linejoin="round"/>
<polygon points="736.0,262.0 745.0,262.0 746.0,268.0 738.0,268.0" fill="#8fb3f1" stroke="#8fb3f1" stroke-width=".6" stroke-linejoin="round"/>
<polygon points="752.0,222.0 758.0,222.0 758.0,228.0 752.0,228.0" fill="#8fb3f1" stroke="#8fb3f1" stroke-width=".6" stroke-linejoin="round"/>
<polygon points="1076.0,350.0 1084.0,352.0 1083.0,358.0 1077.0,357.0" fill="#8fb3f1" stroke="#8fb3f1" stroke-width=".6" stroke-linejoin="round"/>
<polygon points="420.0,293.0 426.0,293.0 426.0,298.0 420.0,298.0" fill="#8fb3f1" stroke="#8fb3f1" stroke-width=".6" stroke-linejoin="round"/>
<polygon points="490.0,330.0 495.0,328.0 496.0,334.0 491.0,335.0" fill="#8fb3f1" stroke="#8fb3f1" stroke-width=".6" stroke-linejoin="round"/>
<polygon points="808.0,325.0 814.0,326.0 813.0,330.0 808.0,329.0" fill="#8fb3f1" stroke="#8fb3f1" stroke-width=".6" stroke-linejoin="round"/>
<path d="M647.0 163.0C643.0 166.1 633.5 172.4 625.0 180.0C616.5 187.6 607.7 196.0 600.0 205.0C592.3 214.0 583.6 221.2 582.0 230.0C580.4 238.8 590.3 245.5 591.0 254.0C591.7 262.5 588.9 270.3 586.0 277.0C583.1 283.7 578.2 286.0 575.0 291.0C571.8 296.0 569.3 302.5 568.0 305.0" fill="none" stroke="#8fb3f1" stroke-width="2.300" stroke-linecap="round"/>
<path d="M565.0 314.0C564.6 319.6 562.1 336.2 563.0 345.0C563.9 353.8 568.7 359.8 570.0 363.0" fill="none" stroke="#8fb3f1" stroke-width="2.300" stroke-linecap="round"/>
<path d="M442.0 468.0C447.0 463.9 459.2 454.7 470.0 445.0C480.8 435.3 491.9 424.6 502.0 414.0C512.1 403.4 517.2 395.0 526.0 386.0C534.8 377.0 543.1 367.6 551.0 364.0C558.9 360.4 566.6 365.6 570.0 366.0" fill="none" stroke="#8fb3f1" stroke-width="2.300" stroke-linecap="round"/>
<path d="M647.0 128.0C648.4 129.3 650.9 134.6 655.0 135.0C659.1 135.4 667.3 130.9 670.0 130.0" fill="none" stroke="#8fb3f1" stroke-width="2.300" stroke-linecap="round"/>
<path d="M353.5 102.1Q356.9 110.3 358.1 122.0M358.1 122.0Q368.8 121.2 376.3 125.2M358.1 122.0Q354.5 136.2 356.5 147.1M356.5 147.1Q355.1 160.3 349.8 170.1M349.8 170.1Q360.4 170.1 373.4 171.0M349.8 170.1Q349.3 180.9 349.5 190.1M349.5 190.1Q363.8 190.4 377.4 196.3M349.5 190.1Q351.6 198.6 350.0 206.3M350.0 206.3Q362.2 207.0 380.2 209.0M350.0 206.3Q355.1 224.8 354.9 237.6M354.9 237.6Q366.9 233.5 383.7 227.7M354.9 237.6Q350.7 240.9 350.7 250.1M354.9 237.6L375.9 257.6M350.7 250.1Q357.1 263.2 357.8 281.3M357.8 281.3Q362.1 279.4 372.1 274.8M357.8 281.3Q358.8 286.0 357.1 294.6M357.8 281.3L370.5 298.4M362.7 310.7Q362.6 324.1 361.0 335.1M361.0 335.1Q358.8 345.7 351.0 353.6M361.0 335.1L379.7 360.3M351.0 353.6Q366.3 358.9 379.7 360.3M351.0 353.6Q351.0 370.4 353.3 384.4M353.3 384.4Q349.8 392.5 351.5 402.1M351.5 402.1Q367.7 402.6 381.8 407.2M356.7 436.9Q365.5 444.0 370.8 445.8M349.8 459.9Q361.8 468.2 379.1 470.9M358.5 484.0Q370.7 485.9 381.5 482.0M374.4 108.2Q384.3 108.4 396.4 109.4M376.3 125.2Q381.1 140.3 381.1 151.8M381.1 151.8Q385.8 147.2 393.4 143.6M381.1 151.8Q379.2 163.7 373.4 171.0M381.1 151.8L391.8 173.8M377.4 196.3Q383.7 194.0 392.8 187.5M380.2 209.0Q379.5 218.7 383.7 227.7M383.7 227.7Q389.4 232.6 392.1 232.3M383.7 227.7Q380.4 243.7 375.9 257.6M375.9 257.6Q385.8 260.0 398.7 259.4M372.1 274.8Q389.1 279.1 402.5 280.1M372.1 274.8Q371.8 289.0 370.5 298.4M370.5 298.4Q382.6 297.1 394.9 294.8M370.5 298.4Q373.8 306.3 380.7 318.0M380.7 318.0Q388.7 319.6 396.0 322.4M380.7 318.0Q379.4 324.0 382.3 335.4M382.3 335.4Q391.0 335.0 404.4 333.1M379.7 360.3Q385.7 357.9 393.5 355.2M379.7 360.3Q376.1 372.8 378.1 379.4M378.1 379.4Q386.6 378.2 394.3 379.8M376.6 424.3Q371.0 433.3 370.8 445.8M370.8 445.8Q380.8 445.2 396.2 443.9M379.1 470.9L398.2 486.6M381.5 482.0Q389.2 482.0 398.2 486.6M396.4 109.4Q409.3 105.9 421.5 100.8M391.3 127.5Q407.6 127.7 424.6 131.9M393.4 143.6Q406.0 146.9 424.2 153.2M393.4 143.6Q395.0 161.1 391.8 173.8M391.8 173.8Q406.4 172.4 417.5 168.6M392.8 187.5Q401.0 191.7 413.4 192.9M396.5 217.2Q405.2 213.1 412.9 205.9M396.5 217.2Q393.2 223.3 392.1 232.3M392.1 232.3Q401.5 228.7 414.9 228.3M392.1 232.3Q396.5 242.9 398.7 259.4M398.7 259.4Q404.9 256.1 416.8 247.7M398.7 259.4Q403.2 271.9 402.5 280.1M402.5 280.1Q406.9 272.7 412.0 270.1M394.9 294.8Q394.5 310.5 396.0 322.4M396.0 322.4Q398.5 325.1 404.4 333.1M404.4 333.1Q410.4 335.3 420.6 333.1M404.4 333.1Q398.4 342.1 393.5 355.2M393.5 355.2Q391.9 367.5 394.3 379.8M394.3 379.8Q399.6 386.1 399.2 397.7M399.2 397.7Q395.0 408.0 391.1 420.9M391.1 420.9Q404.0 424.3 418.5 421.8M396.2 443.9Q403.4 443.1 413.2 437.4M396.2 443.9Q401.6 454.1 404.3 466.7M404.3 466.7Q412.4 462.7 416.8 460.7M404.3 466.7Q398.3 478.7 398.2 486.6M398.2 486.6Q410.5 485.9 423.6 480.3M421.5 100.8Q425.2 105.1 433.3 113.3M424.6 131.9Q430.0 125.0 440.4 123.1M424.6 131.9Q424.4 141.2 424.2 153.2M424.2 153.2Q433.7 149.6 440.6 142.4M424.2 153.2Q419.1 158.3 417.5 168.6M417.5 168.6Q430.3 170.0 440.4 176.7M412.9 205.9Q427.2 207.9 436.7 210.1M414.9 228.3Q427.1 231.7 435.3 236.8M414.9 228.3Q415.1 238.6 416.8 247.7M414.9 228.3L440.5 257.9M416.8 247.7Q428.3 252.9 440.5 257.9M416.8 247.7Q415.7 260.8 412.0 270.1M412.0 270.1Q426.1 269.9 437.6 271.1M412.0 270.1L444.4 302.8M412.4 322.2Q428.8 322.0 444.9 321.3M412.4 322.2Q419.3 326.0 420.6 333.1M420.6 333.1Q431.0 339.1 444.5 341.4M420.6 333.1Q415.6 346.2 415.5 356.9M415.5 356.9Q426.4 358.5 436.2 359.2M415.5 356.9Q417.5 363.4 417.1 374.7M417.1 374.7Q418.2 391.3 423.9 407.9M423.9 407.9Q426.4 402.3 433.4 397.9M423.9 407.9Q421.8 417.0 418.5 421.8M418.5 421.8Q429.1 421.2 436.6 424.7M413.2 437.4Q429.3 441.9 446.4 442.3M413.2 437.4Q414.4 451.7 416.8 460.7M416.8 460.7Q429.9 464.8 446.1 470.8M416.8 460.7Q423.1 472.3 423.6 480.3M433.3 113.3Q445.3 111.0 457.1 103.2M440.4 123.1Q449.4 122.6 456.8 123.9M440.4 123.1Q437.9 132.3 440.6 142.4M440.6 142.4Q449.5 151.3 462.7 154.6M445.1 193.7Q441.7 200.5 436.7 210.1M436.7 210.1Q446.2 214.7 455.2 214.2M435.3 236.8Q450.6 239.6 466.7 237.0M435.3 236.8Q436.7 248.2 440.5 257.9M440.5 257.9Q455.2 255.9 464.5 253.7M440.5 257.9Q438.8 264.7 437.6 271.1M437.6 271.1Q444.8 273.8 456.5 279.0M437.6 271.1Q439.7 285.4 444.4 302.8M437.6 271.1L458.7 300.2M444.4 302.8Q453.5 302.2 458.7 300.2M444.4 302.8Q445.6 310.2 444.9 321.3M444.9 321.3Q456.6 319.1 467.6 315.5M444.9 321.3Q443.6 329.8 444.5 341.4M444.5 341.4Q451.3 343.3 459.6 344.3M444.5 341.4Q439.4 352.5 436.2 359.2M436.2 359.2Q450.1 355.5 464.1 354.4M438.0 373.4Q433.1 387.9 433.4 397.9M433.4 397.9Q449.4 401.2 466.7 405.3M433.4 397.9L456.0 426.6M436.6 424.7Q449.1 427.1 456.0 426.6M436.6 424.7Q440.5 432.6 446.4 442.3M446.4 442.3Q459.2 445.7 467.7 445.2M446.4 442.3Q447.7 458.0 446.1 470.8M446.1 470.8Q454.2 469.0 458.9 464.7M457.1 103.2Q456.9 116.3 456.8 123.9M456.8 123.9Q471.3 131.2 482.4 134.1M456.8 123.9Q459.0 138.9 462.7 154.6M462.7 154.6Q463.6 162.5 465.8 169.7M465.8 169.7Q477.9 169.9 486.6 166.0M465.8 169.7Q464.1 180.6 463.1 195.2M463.1 195.2Q471.3 192.1 478.5 188.1M463.1 195.2Q461.7 203.7 455.2 214.2M466.7 237.0Q475.1 231.5 478.6 231.9M466.7 237.0Q466.0 245.3 464.5 253.7M464.5 253.7Q463.5 266.5 456.5 279.0M456.5 279.0Q456.7 290.2 458.7 300.2M467.6 315.5Q473.5 318.6 480.9 322.8M467.6 315.5Q464.1 332.2 459.6 344.3M459.6 344.3Q470.5 342.1 482.0 338.4M464.1 354.4Q475.1 351.3 482.3 352.3M464.1 354.4Q462.8 366.7 455.8 375.1M455.8 375.1Q470.8 376.5 481.2 375.6M466.7 405.3Q459.3 414.7 456.0 426.6M456.0 426.6Q464.9 422.2 477.4 421.6M467.7 445.2Q479.4 445.3 485.2 443.8M467.7 445.2Q462.8 456.7 458.9 464.7M458.9 464.7Q456.2 473.5 455.8 478.2M488.6 109.1Q493.4 107.1 497.5 107.8M482.4 134.1Q481.2 141.9 481.1 154.2M481.1 154.2Q481.4 158.1 486.6 166.0M486.6 166.0Q484.4 174.4 478.5 188.1M486.6 166.0L508.8 190.2M478.5 188.1Q479.7 199.8 478.4 213.2M478.4 213.2Q489.1 215.1 504.6 212.1M478.4 213.2Q477.6 222.2 478.6 231.9M478.6 231.9Q493.2 234.3 503.2 235.7M476.8 259.7Q475.7 269.7 480.0 274.4M480.0 274.4Q493.7 279.7 502.7 281.2M480.0 274.4Q482.2 290.8 483.2 301.7M483.2 301.7Q481.4 313.6 480.9 322.8M480.9 322.8Q497.3 318.1 509.2 313.6M482.0 338.4Q492.1 339.4 503.8 344.2M482.3 352.3Q492.7 353.3 507.8 353.9M482.3 352.3Q481.2 361.3 481.2 375.6M481.2 375.6Q476.6 388.5 475.1 405.2M475.1 405.2Q483.2 402.3 497.0 397.4M475.1 405.2Q474.2 414.6 477.4 421.6M475.1 405.2L497.0 424.4M477.4 421.6Q489.2 420.8 497.0 424.4M477.4 421.6Q483.3 434.5 485.2 443.8M485.2 443.8Q497.4 445.4 507.0 448.6M479.6 464.3Q479.5 476.3 482.8 489.0M497.5 107.8Q497.7 114.8 499.5 124.9M499.5 124.9Q512.0 127.3 520.1 134.3M499.5 124.9Q503.4 135.6 506.8 149.1M506.8 149.1Q515.6 149.4 522.6 148.8M506.8 149.1Q504.7 158.9 503.9 173.6M503.9 173.6Q507.3 179.6 508.8 190.2M508.8 190.2Q514.0 188.9 519.3 190.0M508.8 190.2Q505.5 199.5 504.6 212.1M504.6 212.1Q503.3 226.3 503.2 235.7M502.3 254.5Q511.9 251.9 527.1 247.3M502.7 281.2Q514.7 278.9 524.8 274.2M502.7 281.2Q506.3 290.3 505.8 301.3M505.8 301.3Q509.2 299.9 517.3 293.6M509.2 313.6Q514.7 313.4 525.7 317.2M509.2 313.6Q505.3 328.2 503.8 344.2M509.2 313.6L517.9 344.8M503.8 344.2Q511.7 342.6 517.9 344.8M507.8 353.9Q502.3 367.7 497.7 379.2M497.7 379.2Q510.1 379.6 518.5 376.7M497.7 379.2Q494.6 390.4 497.0 397.4M497.0 397.4Q505.8 398.8 517.6 404.9M497.0 424.4L522.9 448.8M507.0 448.6Q504.1 459.8 498.2 467.0M498.2 467.0Q516.0 463.4 528.5 460.6M529.4 113.5Q522.0 125.1 520.1 134.3M520.1 134.3Q532.2 125.8 539.3 121.8M520.1 134.3L547.6 148.0M530.9 174.7Q537.8 176.2 539.0 176.1M530.9 174.7Q523.6 179.7 519.3 190.0M519.3 190.0Q531.3 191.5 546.9 195.2M519.3 190.0Q523.0 200.9 524.2 209.7M524.2 209.7Q531.8 213.0 539.2 217.0M519.7 230.5Q531.6 232.1 538.9 238.1M519.7 230.5Q522.4 240.8 527.1 247.3M527.1 247.3Q526.9 261.3 524.8 274.2M524.8 274.2L541.8 290.8M517.3 293.6Q528.7 290.5 541.8 290.8M517.3 293.6Q520.2 303.6 525.7 317.2M525.7 317.2Q533.2 314.2 545.4 313.3M525.7 317.2Q521.0 329.0 517.9 344.8M525.7 317.2L539.5 333.3M517.9 344.8Q531.7 340.5 539.5 333.3M517.9 344.8Q524.3 358.1 528.0 365.6M528.0 365.6Q533.3 359.8 538.7 354.8M528.0 365.6Q523.5 368.2 518.5 376.7M517.6 404.9Q517.6 408.7 520.8 416.8M517.6 404.9L545.0 417.5M522.9 448.8Q533.7 444.6 542.9 436.3M519.1 490.9Q531.8 490.2 548.3 485.7M546.0 109.8Q554.1 107.4 561.7 106.6M539.3 121.8Q556.1 122.9 572.1 122.5M539.0 176.1Q550.4 174.2 565.9 174.7M539.0 176.1Q540.4 186.8 546.9 195.2M546.9 195.2Q558.5 190.7 564.5 191.1M546.9 195.2Q542.7 204.2 539.2 217.0M539.2 217.0Q555.9 220.0 568.6 218.8M538.9 238.1Q552.3 238.0 563.8 237.7M538.9 238.1Q540.7 244.5 544.4 251.7M545.7 281.0Q554.9 277.3 564.7 272.9M545.7 281.0Q541.9 283.4 541.8 290.8M541.8 290.8Q553.6 293.3 559.8 290.8M545.4 313.3Q544.3 320.7 539.5 333.3M539.5 333.3Q549.8 333.7 562.6 333.3M538.7 354.8Q539.6 368.4 542.4 377.3M538.7 354.8L571.2 382.4M542.4 377.3Q557.8 379.5 571.2 382.4M542.4 377.3Q546.5 386.9 548.6 398.1M548.6 398.1Q556.0 398.1 562.9 397.4M548.6 398.1Q544.5 405.9 545.0 417.5M545.0 417.5Q551.7 421.6 563.1 421.4M545.0 417.5Q541.5 427.1 542.9 436.3M542.9 436.3Q552.4 437.6 561.2 442.2M542.9 436.3Q539.9 446.8 541.5 457.2M541.5 457.2Q551.5 461.3 562.7 470.5M541.5 457.2Q547.1 471.8 548.3 485.7M561.7 106.6L584.3 126.0M572.1 122.5Q569.3 138.0 570.5 148.1M570.5 148.1Q569.9 158.7 565.9 174.7M565.9 174.7Q573.4 172.9 586.6 170.0M565.9 174.7Q564.0 184.1 564.5 191.1M568.6 218.8Q576.9 216.0 580.1 208.7M568.6 218.8Q567.7 227.3 563.8 237.7M568.9 255.9Q576.2 254.3 580.6 247.3M568.9 255.9L584.3 271.3M564.7 272.9Q572.1 272.4 584.3 271.3M564.7 272.9L588.2 296.4M560.0 320.4Q574.9 321.8 590.5 319.2M560.0 320.4Q559.0 324.0 562.6 333.3M560.0 320.4L590.0 343.3M562.6 333.3Q561.7 347.3 560.2 363.8M560.2 363.8Q570.7 362.4 585.5 356.6M560.2 363.8Q566.8 374.9 571.2 382.4M571.2 382.4Q581.5 376.6 593.8 375.1M571.2 382.4Q569.3 391.7 562.9 397.4M571.2 382.4L590.1 403.0M562.9 397.4Q578.5 401.3 590.1 403.0M562.9 397.4Q562.9 407.4 563.1 421.4M563.1 421.4Q574.1 424.7 580.6 426.7M563.1 421.4Q561.1 430.1 561.2 442.2M561.2 442.2Q574.1 441.5 592.5 444.8M561.2 442.2Q561.8 456.8 562.7 470.5M562.7 470.5Q573.5 469.9 590.3 468.4M562.7 470.5Q564.8 477.8 572.6 485.7M572.6 485.7Q575.2 486.5 582.0 485.3M583.4 113.5Q595.7 111.2 608.1 111.7M583.4 113.5Q584.0 122.5 584.3 126.0M584.3 126.0Q598.7 130.9 612.3 132.6M586.6 170.0Q600.4 173.6 610.6 172.7M582.8 191.1Q595.1 189.2 604.2 184.4M582.8 191.1Q582.3 199.0 580.1 208.7M580.1 208.7Q588.8 208.4 602.9 210.0M580.1 208.7Q583.6 220.0 581.3 231.6M581.3 231.6Q590.3 233.7 602.5 237.7M581.3 231.6Q578.0 241.7 580.6 247.3M580.6 247.3Q595.1 250.4 608.8 255.8M580.6 247.3Q579.8 258.1 584.3 271.3M584.3 271.3Q588.9 282.9 588.2 296.4M588.2 296.4Q595.5 290.8 607.9 289.0M588.2 296.4Q592.3 306.9 590.5 319.2M590.5 319.2Q603.5 317.2 612.2 320.5M590.5 319.2Q592.7 329.9 590.0 343.3M590.0 343.3Q597.0 339.5 608.0 338.5M585.5 356.6Q596.0 355.4 610.2 352.9M593.8 375.1Q604.0 378.6 611.3 376.5M593.8 375.1Q589.4 390.9 590.1 403.0M590.1 403.0Q593.9 398.5 602.0 397.7M590.1 403.0Q587.6 415.7 580.6 426.7M580.6 426.7Q594.9 423.8 611.2 417.9M592.5 444.8Q588.7 456.1 590.3 468.4M592.5 444.8L607.9 462.4M590.3 468.4Q586.1 477.4 582.0 485.3M582.0 485.3Q591.9 489.0 607.7 487.6M608.1 111.7Q610.8 123.5 612.3 132.6M612.3 132.6Q619.6 125.2 631.0 122.1M612.3 132.6L624.1 145.6M609.2 154.5Q610.1 164.1 610.6 172.7M610.6 172.7Q606.4 180.0 604.2 184.4M602.9 210.0Q614.5 212.3 622.8 208.8M602.9 210.0Q601.3 224.0 602.5 237.7M602.5 237.7Q614.0 236.6 631.4 235.7M608.8 255.8Q623.1 251.8 631.5 251.1M608.8 255.8L629.2 274.5M609.8 277.5Q617.3 273.4 629.2 274.5M609.8 277.5Q609.1 281.4 607.9 289.0M607.9 289.0Q616.1 287.9 628.5 290.7M612.2 320.5Q620.5 318.3 634.5 312.8M612.2 320.5Q613.0 329.5 608.0 338.5M608.0 338.5Q623.7 341.1 635.7 344.1M608.0 338.5Q611.6 343.4 610.2 352.9M610.2 352.9Q617.1 355.1 622.2 358.4M610.2 352.9L633.5 386.6M611.3 376.5Q621.9 384.1 633.5 386.6M602.0 397.7Q613.7 396.3 628.3 397.8M602.0 397.7Q605.0 406.0 611.2 417.9M611.2 417.9Q614.3 432.1 611.4 449.7M611.4 449.7Q620.3 449.1 624.9 444.1M611.4 449.7Q611.1 457.9 607.9 462.4M607.9 462.4Q615.9 465.7 624.0 464.3M607.9 462.4Q608.9 475.5 607.7 487.6M607.7 487.6Q623.8 482.0 635.3 479.9M632.7 108.6Q645.3 110.1 654.5 107.1M632.7 108.6Q634.1 118.3 631.0 122.1M631.0 122.1Q640.9 129.3 655.4 130.8M631.0 122.1Q630.0 131.7 624.1 145.6M624.1 145.6Q633.2 151.2 646.2 154.6M624.1 145.6Q627.3 158.9 632.4 167.3M632.4 167.3L643.1 190.9M629.9 184.2Q638.3 188.7 643.1 190.9M629.9 184.2Q626.4 194.9 622.8 208.8M622.8 208.8Q633.2 211.9 649.3 209.2M622.8 208.8Q629.4 219.9 631.4 235.7M631.4 235.7Q637.8 231.3 645.0 230.8M631.5 251.1Q628.0 261.9 629.2 274.5M629.2 274.5Q627.2 285.4 628.5 290.7M628.5 290.7Q629.6 300.3 634.5 312.8M628.5 290.7L656.0 320.0M634.5 312.8Q645.3 315.8 656.0 320.0M634.5 312.8Q634.3 325.5 635.7 344.1M635.7 344.1Q629.3 352.4 622.2 358.4M633.5 386.6Q644.7 386.7 657.0 381.2M633.5 386.6Q630.2 391.6 628.3 397.8M628.3 397.8Q627.3 415.6 624.9 428.2M624.9 428.2Q635.2 420.4 646.9 415.7M624.9 428.2Q622.6 438.2 624.9 444.1M624.9 444.1Q625.6 453.2 624.0 464.3M624.0 464.3Q634.4 470.0 647.0 470.1M624.0 464.3Q631.1 474.2 635.3 479.9M635.3 479.9Q643.9 479.2 646.5 481.7M654.5 107.1Q656.2 118.3 655.4 130.8M655.4 130.8Q663.4 131.5 669.2 134.4M646.2 154.6Q662.0 152.6 676.4 153.4M649.8 163.3Q646.3 175.4 643.1 190.9M643.1 190.9Q646.3 200.2 649.3 209.2M649.3 209.2Q659.7 209.4 674.1 205.7M649.3 209.2Q648.0 222.0 645.0 230.8M645.0 230.8Q645.5 246.8 647.4 258.8M647.4 258.8Q658.9 255.9 674.5 256.0M647.4 258.8Q644.4 270.5 643.0 278.5M643.0 278.5Q653.0 273.0 668.0 268.7M654.7 290.7Q665.7 292.5 677.0 290.8M656.0 320.0Q655.9 325.9 655.6 335.1M655.6 335.1Q661.2 335.3 668.2 341.3M655.6 335.1Q652.3 343.6 648.2 357.5M648.2 357.5Q651.5 367.8 657.0 381.2M657.0 381.2Q665.9 381.4 673.2 377.2M657.0 381.2Q652.1 392.4 648.0 400.0M648.0 400.0Q657.2 399.4 671.8 399.5M648.0 400.0Q648.7 406.6 646.9 415.7M644.4 447.7Q656.1 450.7 666.9 448.7M644.4 447.7Q648.5 460.2 647.0 470.1M647.0 470.1Q644.2 477.4 646.5 481.7M646.5 481.7Q661.6 489.2 676.7 492.0M671.2 102.7Q681.8 102.1 691.3 102.0M671.2 102.7Q672.2 118.0 669.2 134.4M669.2 134.4Q672.8 143.9 676.4 153.4M672.8 175.8Q681.7 171.5 688.3 166.6M677.2 191.7Q683.4 191.5 693.0 196.4M677.2 191.7L695.5 210.8M674.1 205.7Q686.3 208.6 695.5 210.8M674.1 205.7Q675.2 220.3 674.3 232.3M674.3 232.3Q683.7 232.3 690.8 233.3M674.3 232.3Q677.4 246.1 674.5 256.0M674.5 256.0Q681.4 254.0 690.3 251.7M674.5 256.0Q674.2 261.0 668.0 268.7M668.0 268.7Q675.5 272.4 685.9 271.9M668.0 268.7Q672.6 279.3 677.0 290.8M668.0 268.7L698.5 290.8M677.0 290.8Q690.0 292.6 698.5 290.8M670.6 314.8Q678.6 317.0 692.0 318.8M670.6 314.8Q669.2 328.0 668.2 341.3M668.2 341.3Q684.4 335.9 697.1 334.0M677.7 355.6Q682.1 355.8 688.8 355.5M677.7 355.6Q675.8 365.4 673.2 377.2M673.2 377.2Q673.8 390.2 671.8 399.5M671.8 399.5Q687.7 402.4 698.4 405.9M671.8 399.5L697.2 415.3M666.3 417.3Q682.6 413.6 697.2 415.3M666.3 417.3L685.5 445.9M666.9 448.7Q674.3 449.8 685.5 445.9M666.9 448.7Q670.7 454.4 671.0 460.1M671.0 460.1Q672.1 478.0 676.7 492.0M691.3 102.0Q699.0 109.2 711.5 113.0M687.7 122.3Q691.2 133.9 689.8 143.3M689.8 143.3Q705.9 141.6 719.6 145.5M688.3 166.6Q698.4 164.8 707.5 165.2M688.3 166.6Q688.6 184.0 693.0 196.4M693.0 196.4Q696.0 206.5 695.5 210.8M695.5 210.8Q706.6 213.8 719.2 215.1M695.5 210.8Q693.4 219.6 690.8 233.3M690.8 233.3Q691.6 240.2 690.3 251.7M690.3 251.7Q703.9 256.2 712.4 254.7M685.9 271.9Q695.3 276.9 706.6 279.0M685.9 271.9Q694.8 278.9 698.5 290.8M698.5 290.8Q695.5 302.3 692.0 318.8M692.0 318.8Q705.9 318.6 715.0 314.3M692.0 318.8Q697.1 323.6 697.1 334.0M697.1 334.0Q695.6 345.7 688.8 355.5M697.1 334.0L714.9 361.8M688.8 355.5Q701.5 357.1 714.9 361.8M690.6 379.2Q691.9 392.9 698.4 405.9M690.6 379.2L713.3 402.2M698.4 405.9Q707.6 404.6 713.3 402.2M698.4 405.9Q695.0 410.7 697.2 415.3M698.4 405.9L711.4 418.1M697.2 415.3Q691.8 429.7 685.5 445.9M685.5 445.9Q689.5 457.4 697.5 463.6M693.2 478.0Q703.9 484.8 719.4 487.0M711.5 113.0Q725.6 107.5 739.4 106.7M711.5 113.0Q712.5 123.2 717.6 133.0M717.6 133.0Q722.1 128.1 730.3 124.5M717.6 133.0Q716.3 137.7 719.6 145.5M719.6 145.5Q732.4 145.8 740.4 151.9M707.5 165.2Q711.6 177.7 713.3 193.5M713.3 193.5Q722.2 190.7 734.0 193.4M713.3 193.5Q716.4 203.1 719.2 215.1M719.2 215.1Q726.5 210.3 732.9 208.6M719.2 215.1Q718.8 227.2 715.1 236.7M719.2 215.1L736.3 239.0M715.1 236.7Q726.3 240.7 736.3 239.0M715.1 236.7Q714.4 246.9 712.4 254.7M712.4 254.7Q723.2 250.9 730.2 247.5M712.4 254.7L731.7 273.9M706.6 279.0Q707.3 287.9 709.3 301.9M715.0 314.3Q724.4 315.5 738.2 320.3M715.0 314.3Q710.4 327.2 707.8 334.5M707.8 334.5Q711.3 349.8 714.9 361.8M713.3 402.2Q723.0 402.5 730.1 404.6M713.3 402.2Q715.2 411.2 711.4 418.1M711.4 418.1Q723.3 425.9 731.1 428.3M710.2 463.4Q722.1 464.9 730.1 462.8M739.4 106.7Q737.6 117.3 730.3 124.5M730.3 124.5Q733.6 137.9 740.4 151.9M740.4 151.9Q747.7 148.4 750.0 142.7M732.9 208.6Q746.5 215.8 758.3 219.0M732.9 208.6Q735.2 225.8 736.3 239.0M736.3 239.0Q748.6 231.9 761.0 230.6M736.3 239.0Q735.1 242.7 730.2 247.5M730.2 247.5Q739.4 252.1 750.6 260.1M730.2 247.5Q733.0 261.4 731.7 273.9M731.7 273.9Q743.7 272.4 758.4 268.4M731.7 273.9Q735.1 284.7 736.6 291.8M736.6 291.8Q739.3 304.2 738.2 320.3M738.2 320.3Q734.5 329.4 734.1 333.9M734.1 333.9Q737.3 347.9 740.6 356.4M740.6 356.4Q741.5 364.3 738.5 376.2M738.5 376.2Q748.0 378.2 761.4 374.7M738.5 376.2Q736.1 388.9 730.1 404.6M730.1 404.6Q746.1 402.9 761.5 396.9M730.1 404.6Q729.9 419.1 731.1 428.3M731.1 428.3Q733.3 433.1 733.9 438.6M733.9 438.6Q747.7 441.1 759.5 442.1M733.9 438.6Q732.2 451.8 730.1 462.8M730.1 462.8Q738.6 466.1 748.7 463.6M730.1 462.8Q735.2 478.2 736.3 491.3M736.3 491.3Q746.3 493.4 753.2 490.9M750.0 105.5Q749.5 117.9 751.0 134.6M751.0 134.6Q751.0 139.1 750.0 142.7M751.0 134.6L774.8 153.4M750.0 142.7Q763.9 148.9 774.8 153.4M750.0 142.7Q751.0 154.4 748.8 168.5M748.8 168.5Q767.2 166.9 779.7 163.6M760.6 196.4Q767.8 191.9 769.5 184.9M758.3 219.0Q770.5 215.7 781.9 208.6M761.0 230.6Q770.3 236.9 779.5 238.6M761.0 230.6Q757.2 243.4 750.6 260.1M750.6 260.1Q761.0 254.8 773.7 250.8M758.4 268.4Q769.3 275.2 782.4 276.6M758.4 268.4Q756.8 281.0 757.3 294.3M758.4 268.4L772.7 299.0M757.3 294.3Q764.4 296.0 772.7 299.0M753.2 314.6Q765.8 314.0 773.4 313.9M750.4 331.0Q749.1 345.5 751.9 356.9M751.9 356.9Q767.9 360.4 781.8 360.9M751.9 356.9Q755.8 368.3 761.4 374.7M761.4 374.7Q772.6 372.6 782.2 373.3M761.4 374.7L772.3 400.7M761.5 396.9Q756.4 414.3 753.0 426.5M753.0 426.5Q765.1 427.7 782.4 428.4M759.5 442.1Q768.8 438.5 774.4 439.5M759.5 442.1Q755.0 455.6 748.7 463.6M771.7 105.1Q785.8 109.6 801.2 110.3M771.7 105.1Q774.7 115.5 781.6 121.4M781.6 121.4Q792.6 129.0 801.5 131.8M781.6 121.4Q777.2 134.8 774.8 153.4M774.8 153.4Q788.7 151.0 798.5 146.6M774.8 153.4Q776.7 158.9 779.7 163.6M769.5 184.9Q786.2 186.5 801.0 185.1M769.5 184.9Q778.1 199.1 781.9 208.6M779.5 238.6Q787.7 234.0 793.5 226.9M779.5 238.6Q775.3 242.1 773.7 250.8M773.7 250.8Q776.4 262.1 782.4 276.6M773.7 250.8L794.6 281.7M772.7 299.0Q788.7 298.4 802.4 302.8M773.4 313.9Q784.3 310.4 793.7 311.2M773.4 313.9Q768.6 327.4 769.1 341.6M769.1 341.6Q777.4 348.9 781.8 360.9M781.8 360.9Q781.0 367.5 782.2 373.3M782.2 373.3Q779.3 388.8 772.3 400.7M772.3 400.7Q787.1 399.2 798.7 403.4M772.3 400.7Q776.9 411.9 782.4 428.4M782.4 428.4Q777.8 434.0 774.4 439.5M774.4 439.5Q789.1 441.6 799.3 437.7M775.0 463.9Q791.3 459.9 801.8 461.1M775.0 463.9Q776.3 472.0 782.0 480.6M801.2 110.3Q809.4 106.0 821.3 102.8M801.2 110.3Q799.5 122.5 801.5 131.8M801.5 131.8Q806.2 129.3 814.5 124.4M801.5 131.8Q798.6 139.6 798.5 146.6M801.0 185.1Q807.0 188.6 816.5 197.9M792.8 215.5Q792.2 219.2 793.5 226.9M793.5 226.9Q789.2 238.9 790.5 254.7M794.6 281.7Q803.7 278.5 817.6 279.5M793.7 311.2Q804.6 310.4 811.6 314.1M793.7 311.2Q792.9 324.6 791.3 338.0M791.3 338.0Q799.1 338.3 812.7 333.7M799.9 358.3Q798.0 367.9 793.3 378.8M793.3 378.8Q793.1 389.4 798.7 403.4M798.7 403.4Q808.0 403.8 823.1 400.3M800.5 426.9Q809.9 426.6 814.6 425.9M800.5 426.9Q798.8 433.0 799.3 437.7M799.3 437.7Q812.6 435.8 824.2 437.5M799.3 437.7Q803.0 448.7 801.8 461.1M799.3 437.7L819.3 465.7M801.8 461.1Q808.3 461.6 819.3 465.7M801.8 461.1Q800.4 473.0 797.9 483.2M797.9 483.2Q803.4 484.5 814.0 483.2M821.3 102.8Q827.1 103.9 834.0 102.9M813.1 154.4Q829.6 150.2 841.1 144.8M813.1 154.4Q814.6 163.9 819.1 167.6M819.1 167.6Q827.4 169.5 832.2 167.6M816.5 197.9Q826.6 195.1 841.5 186.6M816.5 197.9L836.4 207.8M818.1 208.2Q825.7 210.6 836.4 207.8M818.1 208.2Q821.2 224.3 822.3 235.1M822.3 235.1Q821.5 238.9 824.9 248.4M824.9 248.4Q831.7 249.7 832.9 248.4M824.9 248.4Q823.1 261.9 817.6 279.5M817.6 279.5Q829.3 279.9 837.5 275.7M817.6 279.5L840.9 290.3M822.8 301.8Q819.1 308.0 811.6 314.1M811.6 314.1Q824.7 314.4 834.3 319.7M811.6 314.1Q812.4 322.6 812.7 333.7M812.7 333.7Q826.7 331.5 837.7 335.0M824.6 360.2Q828.2 363.7 836.3 365.3M824.6 360.2Q823.9 366.9 824.0 378.2M824.0 378.2Q829.3 377.1 836.4 380.9M823.1 400.3Q818.1 411.9 814.6 425.9M814.6 425.9Q830.0 430.3 844.1 429.0M814.6 425.9L837.1 438.8M824.2 437.5Q828.3 439.3 837.1 438.8M824.2 437.5Q821.9 451.3 819.3 465.7M819.3 465.7Q831.7 465.3 842.2 459.9M834.0 102.9Q835.9 118.2 835.6 129.4M835.6 129.4Q841.0 136.8 841.1 144.8M841.1 144.8Q849.1 143.7 859.5 144.3M841.1 144.8Q834.2 155.9 832.2 167.6M836.4 207.8Q843.8 210.3 854.2 213.7M836.4 207.8Q838.1 223.1 843.1 233.7M843.1 233.7Q852.3 235.0 858.2 233.1M832.9 248.4Q841.6 251.6 855.0 251.0M832.9 248.4Q836.0 261.3 837.5 275.7M837.5 275.7Q839.4 283.9 840.9 290.3M840.9 290.3Q840.1 306.1 834.3 319.7M834.3 319.7Q847.6 320.4 864.3 323.5M834.3 319.7L855.8 332.8M837.7 335.0Q848.0 336.8 855.8 332.8M837.7 335.0Q836.6 351.3 836.3 365.3M836.4 380.9Q845.2 378.5 859.8 373.7M836.4 380.9Q835.2 393.2 837.0 399.8M837.0 399.8Q852.4 400.2 866.0 399.4M844.1 429.0Q852.3 423.4 865.7 423.7M844.1 429.0Q838.4 431.5 837.1 438.8M842.2 459.9Q834.7 474.1 832.1 490.6M858.9 111.5Q861.4 121.5 858.7 133.4M858.7 133.4Q869.8 128.3 877.1 126.6M859.5 144.3Q853.4 155.6 853.2 170.7M853.2 170.7Q865.4 169.1 875.7 166.5M862.0 196.7Q870.6 199.5 884.1 196.6M862.0 196.7Q859.0 205.6 854.2 213.7M854.2 213.7Q861.5 215.4 874.6 212.9M854.2 213.7Q859.0 222.6 858.2 233.1M858.2 233.1Q873.1 228.3 884.6 226.5M858.2 233.1Q856.8 239.7 855.0 251.0M855.0 251.0Q857.0 267.6 860.3 281.0M860.3 281.0Q869.7 277.6 882.4 275.7M860.3 281.0Q858.3 288.2 854.5 295.9M854.5 295.9Q869.6 296.6 882.8 293.3M854.5 295.9Q856.6 309.3 864.3 323.5M854.5 295.9L879.9 318.2M864.3 323.5Q873.3 318.4 879.9 318.2M864.3 323.5Q859.9 326.2 855.8 332.8M855.8 332.8Q865.6 333.9 880.0 340.2M855.8 332.8Q860.8 351.8 866.2 365.7M866.2 365.7Q871.6 363.4 880.3 358.1M866.2 365.7Q865.2 372.5 859.8 373.7M859.8 373.7Q869.7 377.9 874.3 381.7M859.8 373.7Q860.9 388.8 866.0 399.4M866.0 399.4Q872.0 400.9 880.9 397.3M866.0 399.4Q867.2 409.0 865.7 423.7M865.7 423.7Q873.4 425.8 884.7 425.9M865.7 423.7Q862.8 433.9 864.5 438.2M864.5 438.2Q869.5 439.3 880.4 438.5M864.5 438.2Q861.4 449.0 864.0 460.1M864.0 460.1Q870.7 459.3 880.6 458.5M864.0 460.1Q862.2 472.8 858.7 489.8M885.6 102.6Q883.7 112.7 877.1 126.6M877.1 126.6Q892.0 121.6 902.1 121.6M877.1 126.6Q876.4 136.6 881.3 147.4M881.3 147.4Q894.1 145.8 903.9 143.2M875.7 166.5Q882.6 179.9 884.1 196.6M884.1 196.6Q895.8 190.6 902.2 184.8M874.6 212.9Q890.3 209.8 902.1 210.3M884.6 226.5Q899.2 226.2 908.3 227.9M884.6 226.5Q884.2 238.6 885.7 248.6M884.6 226.5L907.0 260.9M885.7 248.6Q894.3 256.8 907.0 260.9M885.7 248.6Q884.7 260.7 882.4 275.7M882.4 275.7Q895.1 275.4 905.2 279.4M882.4 275.7Q880.3 287.3 882.8 293.3M882.8 293.3Q890.4 298.5 897.7 302.7M882.8 293.3L901.9 323.4M879.9 318.2Q888.9 321.3 901.9 323.4M879.9 318.2Q879.4 331.5 880.0 340.2M880.3 358.1Q874.6 372.4 874.3 381.7M880.3 358.1L895.9 377.9M874.3 381.7Q883.9 378.5 895.9 377.9M880.9 397.3Q893.4 398.9 905.6 396.2M884.7 425.9Q893.8 420.8 907.6 418.8M880.6 458.5Q888.8 466.6 902.0 469.9M880.6 458.5Q876.3 472.4 875.8 484.0M875.8 484.0Q886.1 483.0 897.9 481.7M896.3 106.2Q911.1 106.1 923.1 104.5M896.3 106.2Q900.2 115.7 902.1 121.6M896.3 106.2L916.5 123.5M902.1 121.6Q910.4 123.8 916.5 123.5M905.3 173.9Q918.1 173.0 925.5 175.5M905.3 173.9Q906.5 181.7 902.2 184.8M902.2 184.8Q903.1 199.1 902.1 210.3M902.1 210.3Q908.1 210.0 917.6 212.4M902.1 210.3Q903.0 218.5 908.3 227.9M908.3 227.9Q917.1 232.1 924.9 231.0M908.3 227.9Q906.8 245.7 907.0 260.9M907.0 260.9Q917.5 255.0 928.2 254.8M905.2 279.4Q917.5 281.5 924.1 280.4M901.9 323.4Q914.9 318.3 924.8 315.5M901.9 323.4Q906.8 329.0 907.8 333.3M907.8 333.3Q905.1 346.3 906.0 365.0M906.0 365.0Q898.4 368.5 895.9 377.9M895.9 377.9Q899.1 385.7 905.6 396.2M905.6 396.2Q904.3 410.1 907.6 418.8M907.6 418.8Q916.0 417.4 926.4 415.7M907.6 418.8Q906.5 428.3 906.4 438.0M906.4 438.0Q914.5 436.8 927.5 439.6M906.4 438.0Q905.0 455.1 902.0 469.9M897.9 481.7Q909.2 487.1 924.2 487.3M923.1 104.5Q930.2 103.4 941.4 100.0M923.1 104.5Q921.1 112.4 916.5 123.5M916.5 123.5Q917.9 137.5 918.3 155.1M925.5 175.5Q935.8 175.9 944.2 175.5M925.5 175.5Q920.1 185.8 918.4 195.0M925.5 175.5L938.8 187.2M918.4 195.0Q916.5 203.2 917.6 212.4M917.6 212.4Q922.6 220.1 924.9 231.0M928.2 254.8Q925.0 268.5 924.1 280.4M924.1 280.4Q930.5 279.9 940.1 276.2M924.8 315.5Q936.6 313.4 945.7 316.6M924.8 315.5Q923.5 322.4 927.2 334.7M927.2 334.7Q935.6 341.7 938.9 344.1M927.2 334.7Q926.7 345.1 929.9 360.1M929.9 360.1Q934.3 358.4 940.4 354.1M929.9 360.1Q927.1 369.5 921.0 383.7M929.9 360.1L938.3 381.9M921.0 383.7Q929.6 381.3 938.3 381.9M922.2 396.5Q935.6 402.0 949.2 405.0M926.4 415.7Q937.1 419.8 942.6 418.7M926.4 415.7Q924.6 427.3 927.5 439.6M927.5 439.6Q929.5 445.2 937.2 445.0M924.9 470.8Q935.6 465.1 944.9 461.9M924.9 470.8Q926.1 480.7 924.2 487.3M924.2 487.3Q934.5 483.3 946.0 484.2M941.4 100.0Q955.0 106.8 971.1 110.3M941.4 100.0Q937.1 109.0 937.5 123.1M937.5 123.1Q951.5 126.4 961.5 133.6M937.5 123.1Q943.1 135.1 945.6 148.1M945.6 148.1Q950.6 151.6 958.6 149.4M945.6 148.1Q943.5 163.2 944.2 175.5M944.2 175.5Q944.3 182.0 938.8 187.2M938.8 187.2Q950.1 192.4 958.8 194.9M938.8 187.2Q940.7 199.0 946.1 205.3M938.8 187.2L958.2 212.7M946.1 205.3Q940.1 216.7 937.0 231.0M937.0 231.0Q939.9 240.4 938.5 252.0M938.5 252.0Q937.4 263.6 940.1 276.2M940.1 276.2Q939.8 285.6 945.2 291.9M938.9 344.1Q948.0 342.9 958.7 343.5M938.9 344.1Q937.3 347.5 940.4 354.1M940.4 354.1Q955.5 360.4 969.0 362.0M942.6 418.7Q956.4 419.3 968.4 421.3M937.2 445.0Q948.2 443.2 961.2 437.5M937.2 445.0Q943.1 455.6 944.9 461.9M944.9 461.9Q955.7 461.2 961.3 457.5M946.0 484.2Q956.6 486.6 962.7 488.5M971.1 110.3Q981.6 112.7 988.7 111.8M961.5 133.6Q973.7 126.8 989.0 124.7M961.5 133.6Q957.2 143.3 958.6 149.4M958.6 149.4Q970.1 150.2 986.8 148.1M958.6 149.4Q960.9 157.3 963.7 166.3M963.7 166.3Q962.0 183.0 958.8 194.9M958.2 212.7Q962.3 220.9 971.2 228.0M971.2 228.0Q981.2 226.6 991.3 226.2M960.8 255.5Q970.9 252.1 982.6 250.3M965.1 277.0Q979.7 276.3 989.4 281.2M965.1 277.0Q966.8 285.5 969.4 291.4M969.4 291.4Q979.6 294.4 989.4 293.6M962.3 314.2Q978.3 316.2 991.3 314.6M962.3 314.2Q962.8 331.8 958.7 343.5M958.7 343.5Q971.8 346.2 982.3 343.7M958.7 343.5Q962.6 351.7 969.0 362.0M969.0 362.0Q978.7 361.9 987.8 361.7M968.4 400.5Q970.9 411.2 968.4 421.3M968.4 421.3Q967.3 427.6 961.2 437.5M968.4 421.3L985.1 446.1M961.2 437.5Q975.5 444.2 985.1 446.1M961.3 457.5Q959.8 473.8 962.7 488.5M962.7 488.5Q972.9 486.2 982.0 486.7M988.7 111.8Q995.0 112.1 1001.1 112.8M988.7 111.8Q985.9 117.3 989.0 124.7M989.0 124.7Q986.4 136.5 986.8 148.1M986.8 148.1Q996.5 149.8 1001.5 155.0M986.8 148.1Q989.7 160.7 990.0 170.3M990.0 170.3Q988.4 184.2 982.7 193.0M990.0 170.3L1000.4 184.6M982.7 193.0Q985.1 197.9 992.5 208.0M992.5 208.0Q991.7 218.0 991.3 226.2M991.3 226.2Q1002.1 229.7 1009.8 236.3M991.3 226.2Q985.0 237.7 982.6 250.3M982.6 250.3Q989.8 251.1 1000.9 255.3M982.6 250.3Q984.2 264.7 989.4 281.2M989.4 281.2Q997.1 280.0 1005.1 279.4M989.4 293.6Q988.6 304.6 991.3 314.6M991.3 314.6Q993.6 319.6 1000.9 322.1M982.3 343.7Q997.1 343.1 1012.8 344.2M987.8 361.7Q996.9 358.7 1001.5 354.9M987.8 361.7Q990.2 375.6 988.3 386.7M985.6 405.8Q997.5 405.9 1011.9 405.4M988.8 427.0Q986.1 438.7 985.1 446.1M985.1 446.1Q998.0 442.1 1008.8 440.0M987.0 461.3Q992.3 457.5 1001.4 458.4M982.0 486.7Q995.2 483.7 1010.6 480.9M1001.1 112.8Q1015.6 108.4 1025.5 105.9M1001.1 112.8Q1004.1 117.9 1002.0 121.4M1002.0 121.4Q1011.0 123.6 1021.3 124.6M1001.5 155.0Q1012.6 152.7 1025.0 152.0M1004.8 165.0Q1014.5 168.2 1026.2 167.5M1004.8 165.0Q1003.8 171.9 1000.4 184.6M1000.4 184.6Q1019.3 185.7 1034.5 191.1M1000.4 184.6Q1002.4 197.8 1009.7 213.9M1009.8 236.3Q1018.1 231.6 1021.4 231.8M1000.9 255.3Q1015.5 258.7 1027.1 257.8M1000.9 255.3Q1000.6 269.6 1005.1 279.4M1005.1 279.4Q1018.3 275.9 1025.9 277.9M1005.1 279.4Q1006.0 287.6 1011.5 301.5M1011.5 301.5Q1004.2 309.9 1000.9 322.1M1012.8 344.2Q1006.5 348.1 1001.5 354.9M1001.6 373.5Q1014.7 378.0 1031.7 386.7M1001.6 373.5Q1008.1 386.8 1011.9 405.4M1011.9 405.4Q1010.0 417.7 1008.9 426.6M1008.9 426.6Q1020.7 427.0 1027.9 426.2M1008.9 426.6Q1008.2 435.9 1008.8 440.0M1008.8 440.0Q1003.0 447.2 1001.4 458.4M1001.4 458.4Q1007.8 471.3 1010.6 480.9M1010.6 480.9Q1019.4 485.5 1024.6 491.2M1025.5 105.9Q1037.1 103.9 1046.0 103.0M1021.3 124.6Q1022.0 137.6 1025.0 152.0M1034.5 191.1Q1044.7 191.6 1051.8 195.0M1034.5 191.1Q1031.7 204.5 1032.9 213.7M1032.9 213.7Q1044.4 209.3 1050.8 210.0M1021.4 231.8Q1036.1 232.1 1047.6 231.5M1027.1 257.8Q1043.4 250.5 1054.5 248.2M1027.1 257.8L1054.4 268.4M1025.9 277.9Q1037.8 275.3 1054.4 268.4M1025.9 277.9Q1028.6 283.5 1028.5 292.0M1028.5 292.0Q1030.8 303.0 1033.1 311.3M1033.1 311.3Q1032.0 324.8 1032.5 333.4M1032.5 333.4Q1027.2 346.0 1021.0 354.8M1021.0 354.8Q1035.3 356.0 1045.3 358.5M1031.7 386.7Q1042.1 383.0 1049.4 383.6M1031.7 386.7L1052.5 403.0M1021.1 400.9Q1025.9 411.3 1027.9 426.2M1027.9 426.2Q1035.9 424.8 1046.9 419.6M1027.9 426.2Q1025.6 432.1 1023.6 442.9M1023.6 442.9Q1024.5 455.6 1025.9 468.6M1025.9 468.6Q1027.9 478.0 1024.6 491.2M1046.0 103.0Q1059.9 104.6 1073.8 108.1M1046.0 103.0Q1051.5 115.3 1051.8 128.0M1051.8 128.0Q1060.8 126.0 1064.8 127.5M1043.1 174.0Q1056.5 170.3 1065.7 167.2M1043.1 174.0Q1049.9 186.4 1051.8 195.0M1051.8 195.0Q1051.1 204.4 1050.8 210.0M1050.8 210.0Q1050.3 221.1 1047.6 231.5M1047.6 231.5Q1054.9 230.9 1066.5 230.6M1047.6 231.5Q1049.6 239.1 1054.5 248.2M1054.5 248.2Q1052.4 260.6 1054.4 268.4M1044.9 292.7Q1063.6 295.3 1076.7 299.2M1044.9 292.7Q1048.6 302.0 1054.6 317.0M1054.6 317.0Q1058.2 321.0 1064.4 323.5M1054.6 317.0Q1053.7 331.3 1047.3 343.4M1049.4 383.6Q1060.2 384.1 1073.3 379.1M1049.4 383.6Q1053.8 390.7 1052.5 403.0M1049.4 383.6L1065.7 402.9M1052.5 403.0Q1057.4 403.0 1065.7 402.9M1052.5 403.0Q1051.7 412.3 1046.9 419.6M1044.2 447.8Q1045.0 457.2 1051.3 467.4M1051.3 467.4Q1060.3 464.8 1068.6 468.1M1051.3 467.4Q1050.2 476.3 1044.4 484.1M1044.4 484.1Q1056.8 482.7 1072.7 485.0M1073.8 108.1Q1085.9 105.9 1092.9 106.5M1064.8 127.5Q1078.2 127.9 1086.0 129.5M1064.8 127.5L1089.7 152.4M1075.4 145.3L1096.7 169.0M1065.7 167.2Q1067.2 180.7 1072.8 195.8M1066.5 230.6Q1067.5 242.3 1070.3 249.3M1070.3 249.3Q1080.5 250.9 1094.8 256.8M1070.3 249.3Q1070.8 257.9 1067.6 270.6M1067.6 270.6Q1082.1 273.6 1095.9 277.5M1067.6 270.6Q1069.2 282.3 1076.7 299.2M1076.7 299.2Q1086.4 295.7 1093.0 295.4M1064.4 323.5Q1076.3 320.5 1088.4 318.8M1064.4 323.5Q1066.0 328.3 1064.4 336.4M1064.4 336.4Q1070.6 352.3 1076.8 363.1M1076.8 363.1Q1083.3 360.0 1095.0 362.0M1076.8 363.1Q1072.6 372.0 1073.3 379.1M1073.3 379.1Q1083.1 380.4 1092.8 376.5M1073.3 379.1Q1067.4 389.8 1065.7 402.9M1064.5 417.9Q1075.9 417.0 1092.7 420.7M1068.4 436.5Q1081.7 440.1 1093.5 449.0M1068.4 436.5Q1067.5 449.9 1068.6 468.1M1068.6 468.1Q1068.7 477.6 1072.7 485.0M1092.9 106.5Q1087.8 117.4 1086.0 129.5M1086.0 129.5Q1096.9 132.0 1105.5 128.6M1086.0 129.5Q1086.4 141.9 1089.7 152.4M1089.7 152.4Q1099.6 152.2 1107.3 152.9M1089.7 152.4Q1090.6 161.0 1096.7 169.0M1096.7 169.0Q1094.4 181.7 1092.0 194.5M1092.0 194.5Q1092.8 200.1 1089.9 208.2M1089.9 208.2Q1089.9 223.2 1094.1 238.3M1094.8 256.8Q1096.7 269.0 1095.9 277.5M1094.8 256.8L1110.7 281.3M1095.9 277.5Q1100.7 279.9 1110.7 281.3M1093.0 295.4Q1092.0 305.7 1088.4 318.8M1088.4 318.8Q1096.5 317.3 1110.5 320.7M1085.4 336.9Q1092.4 350.7 1095.0 362.0M1085.4 336.9L1110.0 352.8M1095.0 362.0Q1103.5 354.4 1110.0 352.8M1095.0 362.0Q1093.0 371.5 1092.8 376.5M1092.8 376.5Q1103.3 379.3 1108.8 378.6M1092.7 420.7Q1100.0 422.9 1110.9 424.8M1092.7 420.7Q1092.1 434.1 1093.5 449.0M1093.5 449.0Q1100.0 443.0 1109.9 439.7M1093.5 449.0Q1090.0 457.1 1086.6 466.2M1086.6 466.2Q1097.5 465.4 1108.1 467.4M1111.9 113.6Q1123.0 112.5 1129.1 111.2M1111.9 113.6Q1107.4 120.5 1105.5 128.6M1105.5 128.6Q1107.8 139.1 1107.3 152.9M1107.3 152.9Q1116.4 152.1 1127.8 152.9M1118.2 170.3Q1126.2 172.8 1137.3 171.9M1112.6 215.0Q1120.0 214.0 1129.2 218.5M1116.6 254.3Q1126.1 254.0 1137.5 258.4M1110.7 281.3Q1120.9 275.3 1132.6 272.1M1110.7 281.3Q1110.6 292.3 1107.9 298.6M1107.9 298.6Q1108.7 308.5 1110.5 320.7M1110.5 320.7Q1122.0 316.5 1137.7 315.0M1106.7 344.8Q1124.4 342.1 1137.9 334.7M1106.7 344.8Q1106.5 350.4 1110.0 352.8M1110.0 352.8Q1123.0 353.8 1131.3 355.5M1110.0 352.8Q1110.0 364.2 1108.8 378.6M1110.0 352.8L1132.0 375.6M1108.8 378.6Q1119.7 374.2 1132.0 375.6M1108.8 378.6Q1108.6 388.2 1105.2 399.9M1105.2 399.9Q1105.2 413.4 1110.9 424.8M1110.9 424.8Q1118.6 423.7 1129.9 418.4M1109.9 439.7Q1120.5 440.1 1130.2 442.7M1109.9 439.7Q1108.0 454.4 1108.1 467.4M1108.1 467.4Q1117.8 464.9 1132.0 465.9M1108.1 467.4Q1112.6 475.6 1118.2 485.4M1118.2 485.4Q1129.6 482.7 1135.2 483.1M1129.1 111.2Q1145.1 110.9 1160.0 112.0M1129.1 111.2Q1132.1 119.5 1131.5 124.0M1131.5 124.0Q1132.6 135.7 1127.8 152.9M1127.8 152.9Q1144.5 154.6 1159.7 153.0M1137.3 171.9Q1144.9 170.9 1149.0 174.6M1137.3 171.9Q1136.5 181.5 1132.6 191.9M1132.6 191.9Q1144.0 186.3 1155.9 184.2M1132.6 191.9Q1128.4 202.7 1129.2 218.5M1129.2 218.5Q1138.2 217.1 1147.2 218.3M1130.9 234.9Q1134.3 246.6 1137.5 258.4M1137.5 258.4Q1137.3 264.4 1132.6 272.1M1132.6 272.1Q1141.8 274.2 1150.3 278.9M1132.6 272.1Q1135.8 280.7 1133.7 290.8M1132.6 272.1L1151.9 291.1M1133.7 290.8Q1134.6 301.8 1137.7 315.0M1137.7 315.0Q1148.2 320.8 1159.7 321.1M1137.7 315.0Q1137.2 322.8 1137.9 334.7M1137.9 334.7Q1134.0 343.5 1131.3 355.5M1131.3 355.5Q1145.4 358.5 1155.5 362.9M1131.3 355.5L1156.4 385.5M1132.0 375.6Q1146.9 381.7 1156.4 385.5M1126.0 404.1Q1140.2 403.0 1158.0 405.7M1129.9 418.4Q1140.7 419.4 1149.8 424.7M1129.9 418.4Q1128.1 430.6 1130.2 442.7M1130.2 442.7Q1140.1 444.5 1154.4 446.4M1130.2 442.7Q1128.9 453.2 1132.0 465.9M1132.0 465.9Q1143.3 469.3 1153.1 469.4M1132.0 465.9Q1131.9 474.2 1135.2 483.1M1135.2 483.1Q1146.5 481.6 1154.8 481.7M1147.8 132.6Q1162.0 124.4 1174.9 121.8M1159.7 153.0Q1156.4 161.9 1149.0 174.6M1149.0 174.6Q1159.0 174.6 1174.9 170.0M1149.0 174.6Q1154.4 180.6 1155.9 184.2M1155.9 184.2Q1153.9 200.3 1147.2 218.3M1155.9 184.2L1168.1 216.8M1147.2 218.3Q1155.0 215.0 1168.1 216.8M1156.2 229.5Q1164.1 230.4 1174.6 233.9M1150.3 278.9Q1153.6 286.9 1151.9 291.1M1151.9 291.1Q1164.2 293.1 1181.4 290.1M1151.9 291.1Q1156.4 308.3 1159.7 321.1M1159.7 321.1Q1156.2 332.0 1149.4 343.5M1149.4 343.5Q1153.9 355.2 1155.5 362.9M1155.5 362.9Q1154.3 372.5 1156.4 385.5M1156.4 385.5Q1164.6 386.1 1172.6 386.7M1156.4 385.5Q1158.7 397.1 1158.0 405.7M1158.0 405.7Q1164.8 402.3 1175.1 400.8M1149.8 424.7Q1165.3 418.0 1180.6 415.5M1154.4 446.4Q1168.0 443.8 1178.1 444.8M1153.1 469.4Q1152.6 476.3 1154.8 481.7M1154.8 481.7Q1164.4 481.5 1173.1 484.6M1171.3 102.0Q1185.6 104.9 1196.4 110.8M1174.9 121.8Q1184.2 122.2 1192.0 127.1M1174.9 170.0Q1176.3 185.7 1175.6 196.1M1175.6 196.1Q1187.5 192.9 1200.6 189.7M1175.6 196.1Q1170.2 208.6 1168.1 216.8M1168.1 216.8Q1180.2 213.3 1196.1 208.8M1168.1 216.8Q1171.2 225.5 1174.6 233.9M1174.6 233.9Q1187.3 233.9 1196.1 239.6M1177.3 258.8Q1189.3 258.8 1198.2 258.1M1177.3 258.8Q1173.6 268.0 1173.2 273.9M1173.2 273.9Q1177.8 282.8 1181.4 290.1M1181.4 290.1Q1184.7 294.5 1193.2 297.2M1176.9 318.9Q1188.8 317.5 1197.9 321.0M1168.4 339.5Q1177.5 337.8 1189.6 341.1M1168.4 339.5Q1170.5 352.2 1177.6 365.0M1177.6 365.0Q1189.2 361.6 1201.4 359.6M1172.6 386.7Q1179.5 379.0 1189.7 377.2M1172.6 386.7Q1171.5 394.9 1175.1 400.8M1175.1 400.8Q1175.1 409.7 1180.6 415.5M1180.6 415.5Q1178.2 427.6 1178.1 444.8M1178.1 444.8Q1187.8 445.5 1198.2 447.0M1172.7 469.1Q1185.3 466.8 1201.7 465.6M1196.4 110.8Q1194.6 117.4 1192.0 127.1M1194.9 149.8Q1200.0 161.3 1200.6 167.1M1196.1 208.8Q1194.9 225.5 1196.1 239.6M1196.1 239.6Q1198.0 249.8 1198.2 258.1M1198.2 258.1Q1195.5 264.2 1193.6 272.4M1193.6 272.4Q1191.2 285.8 1193.2 297.2M1197.9 321.0Q1195.6 328.7 1189.6 341.1M1189.6 341.1Q1198.1 347.5 1201.4 359.6M1201.4 359.6Q1193.6 367.8 1189.7 377.2M1189.7 377.2Q1187.1 387.1 1189.1 396.7M1201.9 423.5Q1198.4 438.1 1198.2 447.0M1201.7 465.6Q1201.2 474.8 1197.6 486.8" fill="none" stroke="#fff" stroke-width="1.250" stroke-linecap="round"/>
<path d="M857.3 299.0C852.1 300.4 838.8 304.0 828.4 306.8C817.9 309.5 809.9 311.9 799.3 314.4C788.8 316.8 780.1 317.0 769.9 320.2C759.7 323.4 752.4 328.0 742.5 332.3C732.6 336.6 725.0 340.4 714.9 344.2C704.8 348.0 696.9 351.3 686.4 353.6C675.9 355.9 667.0 354.2 656.6 356.9C646.3 359.6 633.9 366.4 628.9 368.5M518.4 317.7C516.9 322.9 514.6 336.9 509.9 346.5C505.2 356.1 499.9 363.3 492.4 370.8C484.8 378.3 477.1 382.5 468.0 388.3C458.9 394.1 451.5 398.1 441.8 403.0C432.2 407.9 423.7 410.0 414.6 415.6C405.5 421.2 398.2 426.3 391.1 434.3C384.0 442.2 381.0 450.6 375.2 459.7C369.4 468.8 361.7 480.3 358.8 484.8M410.5 202.8C415.8 203.2 429.6 204.4 440.4 204.9C451.2 205.4 459.8 204.1 470.4 205.7C481.0 207.3 488.9 210.7 499.3 213.6C509.7 216.6 517.9 218.5 528.1 221.9C538.3 225.4 546.0 229.1 556.0 233.0C566.0 237.0 574.1 239.6 583.9 244.1C593.7 248.7 600.7 253.4 610.3 258.3C619.9 263.3 632.3 269.3 637.2 271.7M1284.3 424.7C1279.3 426.6 1266.0 430.8 1256.2 435.2C1246.4 439.6 1238.7 443.3 1229.7 449.2C1220.7 455.1 1214.1 460.6 1206.2 468.0C1198.4 475.3 1191.9 481.1 1185.8 489.9C1179.8 498.8 1178.4 507.8 1172.9 517.0C1167.3 526.2 1161.2 532.3 1155.1 541.2C1149.0 550.1 1145.9 558.2 1139.1 566.5C1132.3 574.8 1121.3 583.5 1117.4 587.3M1027.3 429.4C1032.6 428.4 1046.0 424.1 1056.7 423.4C1067.3 422.8 1075.8 425.2 1086.5 426.0C1097.3 426.8 1106.1 425.5 1116.5 427.9C1126.8 430.4 1134.0 435.8 1144.1 439.6C1154.2 443.5 1162.0 447.4 1172.5 449.3C1183.0 451.3 1191.7 449.4 1202.5 450.3C1213.2 451.1 1221.8 451.5 1232.3 453.9C1242.8 456.2 1255.6 461.5 1260.8 463.2M566.3 232.9C560.9 232.5 547.0 230.1 536.4 230.9C525.7 231.6 517.3 233.7 507.0 236.8C496.7 239.9 488.4 242.6 479.1 247.9C469.8 253.1 462.7 258.4 455.3 266.2C448.0 273.9 445.2 282.7 438.2 290.8C431.2 299.0 423.3 303.2 416.4 311.4C409.5 319.6 405.9 327.5 399.7 336.4C393.6 345.2 385.2 356.2 382.1 360.6M420.3 340.6C425.0 343.2 436.5 351.3 446.5 355.3C456.4 359.2 465.0 360.2 475.6 362.5C486.1 364.8 494.4 367.2 505.1 368.1C515.8 369.0 524.3 368.7 535.1 367.7C545.8 366.7 554.0 362.6 564.6 362.5C575.3 362.4 583.9 364.4 594.2 367.2C604.6 370.0 611.9 374.8 622.2 378.0C632.5 381.2 646.2 383.6 651.4 384.8M654.1 215.4C649.0 217.3 635.4 220.8 626.0 225.9C616.6 231.0 611.4 239.0 601.9 243.7C592.4 248.5 583.1 248.3 573.2 252.5C563.3 256.6 555.8 260.9 546.8 266.8C537.8 272.7 532.2 279.5 523.2 285.3C514.1 291.1 505.8 293.5 496.5 299.0C487.2 304.5 480.1 309.1 471.7 315.8C463.2 322.4 453.4 332.3 449.4 335.9M362.8 252.5C366.4 256.5 375.3 267.0 382.9 274.7C390.5 282.4 396.9 287.9 405.0 295.0C413.0 302.2 420.8 306.5 427.7 314.6C434.5 322.8 437.5 331.2 443.0 340.4C448.6 349.6 453.3 356.6 458.7 366.0C464.1 375.3 469.1 382.4 473.0 392.4C476.9 402.4 476.4 411.4 480.1 421.5C483.8 431.6 491.1 443.5 493.5 448.4M1022.4 334.4C1026.9 337.3 1039.1 344.0 1047.7 350.5C1056.3 357.0 1063.2 362.3 1070.0 370.6C1076.7 378.9 1078.7 387.9 1085.1 396.5C1091.5 405.2 1099.5 409.8 1105.3 418.7C1111.2 427.6 1114.6 435.8 1117.7 446.0C1120.8 456.3 1121.1 464.9 1122.4 475.6C1123.7 486.3 1123.8 494.8 1125.0 505.5C1126.2 516.2 1128.4 529.9 1129.2 535.2M320.2 389.0C323.6 393.2 331.6 404.6 339.1 412.4C346.5 420.1 354.4 424.2 361.6 432.2C368.8 440.1 373.1 447.6 379.1 456.6C385.0 465.5 388.5 473.3 394.9 482.1C401.2 490.8 406.4 497.7 414.2 505.0C422.0 512.4 430.1 515.9 438.1 523.1C446.2 530.2 450.6 538.1 459.1 544.5C467.6 551.0 480.7 556.3 485.4 558.8M868.9 319.1C867.8 324.4 866.5 338.4 862.8 348.5C859.1 358.5 852.6 364.9 848.5 374.8C844.4 384.8 841.2 393.0 839.9 403.6C838.6 414.2 840.0 422.9 841.3 433.6C842.7 444.2 845.1 452.4 847.6 462.9C850.0 473.4 850.8 482.2 854.9 492.0C859.1 501.8 864.1 509.1 870.8 517.5C877.4 525.9 888.1 534.9 891.9 538.8M786.7 65.9C787.5 71.3 791.5 84.9 791.4 95.5C791.3 106.2 788.6 114.6 786.1 125.1C783.7 135.6 781.4 143.7 777.7 153.8C773.9 164.0 770.1 171.5 765.4 181.2C760.7 191.0 755.3 197.8 751.6 207.8C747.9 217.9 745.5 226.4 744.8 237.1C744.1 247.7 744.9 256.7 747.7 266.9C750.5 277.2 758.1 289.2 760.3 294.1M820.8 462.7C826.2 463.6 839.8 465.9 850.5 467.6C861.1 469.3 869.6 469.6 880.1 472.1C890.6 474.5 898.2 478.6 908.7 481.2C919.1 483.9 928.2 483.0 938.2 486.7C948.1 490.5 954.1 498.0 964.0 502.0C973.9 506.0 982.7 506.3 993.2 509.0C1003.6 511.7 1012.0 513.3 1022.1 517.0C1032.2 520.7 1044.4 527.4 1049.3 529.6" fill="none" stroke="#fff" stroke-width="1.700" stroke-linecap="round"/>
<path d="M457.0 128.0C459.3 132.0 464.4 141.5 470.0 150.0C475.6 158.5 482.2 165.1 488.0 175.0C493.8 184.9 494.8 193.8 502.0 205.0C509.2 216.2 521.2 228.9 528.0 237.0C534.8 245.1 535.5 245.5 540.0 250.0C544.5 254.5 548.5 257.5 553.0 262.0C557.5 266.5 560.7 268.2 565.0 275.0C569.3 281.8 572.0 294.1 577.0 300.0C582.0 305.9 590.1 306.6 593.0 308.0M553.0 267.0C556.1 269.2 566.9 274.0 570.0 279.0C573.1 284.0 568.4 291.0 570.0 295.0C571.6 299.0 573.6 299.7 579.0 301.0C584.4 302.3 596.2 301.8 600.0 302.0M516.0 128.0 L519.0 133.0M377.0 164.0 L386.0 158.0M701.5 128.0C700.7 131.8 700.0 141.4 697.0 149.0C694.0 156.6 688.3 163.0 685.0 170.0C681.7 177.0 679.9 175.4 678.5 188.0C677.1 200.6 677.6 229.0 677.0 240.0C676.4 251.0 675.2 239.8 675.0 249.0C674.8 258.2 676.0 278.2 676.0 291.0C676.0 303.8 675.2 312.4 675.0 320.0C674.8 327.6 675.0 330.7 675.0 333.0M917.0 137.5C911.1 141.6 896.2 152.1 884.0 160.5C871.8 168.9 859.9 177.7 849.0 184.0C838.1 190.3 830.0 191.7 823.5 195.5C817.0 199.3 815.5 201.3 813.0 205.0C810.5 208.7 812.6 211.1 809.5 216.0C806.4 220.9 802.7 224.9 796.0 232.5C789.3 240.1 781.8 248.0 772.5 258.0C763.2 268.0 751.2 279.0 744.5 288.0C737.8 297.0 738.0 300.4 735.0 308.0C732.0 315.6 730.3 323.3 728.0 330.0C725.7 336.7 723.1 342.3 722.0 345.0M917.0 178.0C912.3 180.1 901.1 185.5 891.0 189.5C880.9 193.5 870.2 194.3 861.0 200.0C851.8 205.7 846.8 214.3 840.0 221.0C833.2 227.7 829.0 230.3 823.5 237.0C818.0 243.7 813.7 250.4 809.5 258.0C805.3 265.6 804.1 271.4 800.0 279.0C795.9 286.6 790.6 294.8 786.5 300.0C782.4 305.2 780.3 304.6 777.0 308.0C773.7 311.4 773.0 312.9 768.0 319.0C763.0 325.1 756.2 335.3 749.0 342.0C741.8 348.7 735.5 351.0 728.0 356.0C720.5 361.0 711.2 367.5 707.5 370.0M849.0 128.0C852.0 130.9 861.3 137.7 865.5 144.0C869.7 150.3 870.1 157.5 872.5 163.0C874.9 168.5 874.4 170.4 879.0 174.5C883.6 178.6 893.8 181.9 898.0 186.0C902.2 190.1 899.1 194.1 902.5 197.5C905.9 200.9 914.4 203.7 917.0 205.0M893.0 132.5 L879.0 153.5M917.0 170.0C920.3 167.0 927.6 160.7 935.5 153.5C943.4 146.3 956.4 134.2 961.0 130.0M1075.0 131.5C1080.0 132.3 1093.8 134.6 1103.0 136.0C1112.2 137.4 1117.5 139.1 1126.0 139.5C1134.5 139.9 1140.1 139.3 1150.0 138.0C1159.9 136.7 1175.4 133.1 1181.0 132.0M1010.0 128.0C1011.6 130.5 1014.9 135.7 1019.0 142.0C1023.1 148.3 1029.2 155.1 1033.0 163.0C1036.8 170.9 1037.0 179.8 1040.0 186.0C1043.0 192.2 1047.8 191.7 1049.5 197.5C1051.2 203.3 1049.5 214.7 1049.5 218.5M928.5 308.0C931.8 305.7 940.7 298.1 947.0 295.0C953.3 291.9 956.4 295.4 963.5 290.5C970.6 285.6 978.1 274.6 986.5 267.5C994.9 260.4 1004.5 255.2 1010.0 251.0C1015.5 246.8 1013.7 245.9 1017.0 244.0C1020.3 242.1 1022.2 242.4 1028.5 240.5C1034.8 238.6 1045.3 236.6 1052.0 233.5C1058.7 230.4 1060.5 227.5 1065.5 223.5C1070.5 219.5 1074.0 215.1 1079.5 211.5C1085.0 207.9 1088.9 206.0 1096.0 203.5C1103.1 201.0 1111.5 199.2 1119.0 197.5C1126.5 195.8 1130.8 196.4 1137.5 194.0C1144.2 191.6 1151.8 187.1 1156.5 184.0C1161.2 180.9 1159.1 179.3 1163.5 177.0C1167.9 174.7 1177.8 172.1 1181.0 171.0M1049.5 217.5C1052.4 218.3 1057.9 219.8 1065.5 222.0C1073.1 224.2 1082.7 225.4 1091.5 230.0C1100.3 234.6 1108.3 244.1 1114.5 247.5C1120.7 250.9 1123.0 247.1 1126.0 249.0C1129.0 250.9 1127.2 257.0 1131.0 258.0C1134.8 259.0 1141.6 253.2 1147.0 254.5C1152.4 255.8 1156.4 260.6 1161.0 265.0C1165.6 269.4 1168.9 275.2 1172.5 279.0C1176.1 282.8 1179.5 284.7 1181.0 286.0M917.0 221.0C917.8 224.3 918.5 234.1 921.5 239.5C924.5 244.9 930.2 246.0 933.5 251.0C936.8 256.0 937.8 261.2 940.0 267.5C942.2 273.8 944.9 280.1 946.0 286.0C947.1 291.9 946.7 296.0 946.0 300.0C945.3 304.0 942.7 306.6 942.0 308.0M1181.0 197.5C1179.5 195.9 1175.7 192.0 1172.5 188.5C1169.3 185.0 1165.1 179.9 1163.5 178.0M377.0 314.5C384.6 314.7 407.8 312.2 419.0 315.5C430.2 318.8 432.0 329.7 439.5 333.0C447.0 336.3 451.7 331.5 460.5 334.0C469.3 336.5 481.4 345.6 488.5 347.0C495.6 348.4 495.8 345.1 500.0 342.0C504.2 338.9 508.8 332.0 512.0 329.5C515.2 327.0 516.9 328.3 518.0 328.0M377.0 385.0C383.7 384.8 405.6 383.4 414.0 384.0C422.4 384.6 416.4 387.7 423.5 388.5C430.6 389.3 443.5 385.5 453.5 388.5C463.5 391.5 470.2 399.3 479.0 405.0C487.8 410.7 495.8 415.9 502.5 420.0C509.2 424.1 512.4 424.9 516.5 428.0C520.6 431.1 520.5 433.5 525.5 437.5C530.5 441.5 538.2 447.8 544.5 450.0C550.8 452.2 553.0 449.1 560.5 450.0C568.0 450.9 579.3 453.5 586.0 455.0C592.7 456.5 589.1 458.1 597.5 458.5C605.9 458.9 623.6 457.3 632.5 457.0C641.4 456.7 644.4 457.0 647.0 457.0M514.0 428.0C511.5 429.3 504.1 430.8 500.0 435.0C495.9 439.2 495.1 446.5 491.0 451.5C486.9 456.5 483.8 457.6 477.0 463.0C470.2 468.4 458.4 477.7 453.5 481.5C448.6 485.3 450.6 483.6 450.0 484.0M607.0 328.0C610.0 330.2 618.5 337.5 623.5 340.0C628.5 342.5 632.6 335.7 635.0 342.0C637.4 348.3 636.4 357.4 637.0 375.0C637.6 392.6 638.0 420.4 638.5 440.0C639.0 459.6 639.7 476.1 640.0 484.0M675.0 333.0C675.4 335.1 678.3 339.9 677.0 344.5C675.7 349.1 670.4 353.1 668.0 358.5C665.6 363.9 664.0 366.1 663.5 374.5C663.0 382.9 667.7 397.9 665.5 405.0C663.3 412.1 654.8 411.9 651.5 414.0C648.2 416.1 647.8 416.1 647.0 416.5M773.5 355.0C774.6 358.1 778.9 363.9 779.5 372.5C780.1 381.1 776.8 394.6 777.0 402.5C777.2 410.4 779.6 410.6 780.5 416.5C781.4 422.4 779.3 429.1 782.0 435.0C784.7 440.9 792.6 440.2 795.5 449.0C798.4 457.8 797.5 477.7 798.0 484.0M744.5 358.5C743.7 361.4 741.6 366.1 740.0 374.5C738.4 382.9 736.0 396.6 735.5 405.0C735.0 413.4 738.4 415.6 737.5 421.0C736.6 426.4 733.4 429.1 730.5 435.0C727.6 440.9 723.6 444.7 721.5 453.5C719.4 462.3 719.5 478.5 719.0 484.0M917.0 323.5C912.8 324.3 902.0 323.4 893.5 328.0C885.0 332.6 878.8 341.9 870.0 349.0C861.2 356.1 851.2 361.2 844.5 367.5C837.8 373.8 837.1 377.7 833.0 384.0C828.9 390.3 827.0 396.2 821.5 402.5C816.0 408.8 809.2 413.1 802.5 419.0C795.8 424.9 790.2 428.8 784.0 435.0C777.8 441.2 772.1 448.9 768.0 453.5C763.9 458.1 762.3 459.2 761.0 460.5M670.0 456.0C680.9 455.6 713.8 453.1 730.5 453.5C747.2 453.9 754.6 458.5 763.0 458.5C771.4 458.5 764.4 455.0 777.0 453.5C789.6 452.0 819.6 449.1 833.0 450.0C846.4 450.9 846.5 455.4 851.5 458.5C856.5 461.6 859.3 465.9 861.0 467.5M866.5 446.5C864.6 449.9 858.7 458.8 856.0 465.5C853.3 472.2 852.3 480.7 851.5 484.0M917.0 405.0C914.0 406.6 906.0 409.4 900.5 414.0C895.0 418.6 890.7 424.6 886.5 430.5C882.3 436.4 878.7 443.6 877.0 446.5M760.0 460.0C761.8 461.8 767.3 465.7 770.0 470.0C772.7 474.3 774.1 481.5 775.0 484.0M970.5 374.5C967.5 377.9 960.7 387.2 954.0 393.5C947.3 399.8 940.2 407.1 933.5 409.5C926.8 411.9 920.0 407.4 917.0 407.0M917.0 314.5C919.1 313.1 925.3 309.6 928.5 307.0C931.7 304.4 933.8 301.3 935.0 300.0M1163.5 351.5C1163.9 354.0 1166.0 361.3 1165.5 365.5C1165.0 369.7 1161.8 373.3 1161.0 375.0M1120.0 457.0 L1181.0 455.0" fill="none" stroke="#f1ba4e" stroke-width="3" stroke-linecap="round" stroke-linejoin="round"/>
<path d="M472.0 128.0C475.2 132.9 483.7 146.0 490.0 155.0C496.3 164.0 500.2 170.3 507.0 178.0C513.8 185.7 522.1 190.3 528.0 198.0C533.9 205.7 536.2 213.4 540.0 221.0C543.8 228.6 544.9 233.3 549.0 240.0C553.1 246.7 558.9 252.2 563.0 258.0C567.1 263.8 567.9 266.1 572.0 272.0C576.1 277.9 581.3 284.5 586.0 291.0C590.7 297.5 595.8 304.9 598.0 308.0M647.0 214.5C642.7 214.8 630.6 213.2 623.0 216.0C615.4 218.8 611.7 225.3 605.0 230.0C598.3 234.7 593.6 237.0 586.0 242.0C578.4 247.0 569.7 253.0 563.0 258.0C556.3 263.0 552.6 265.0 549.0 270.0C545.4 275.0 545.1 279.2 543.0 286.0C540.9 292.8 538.5 304.0 537.5 308.0M719.0 128.0C717.4 131.4 712.1 138.5 710.0 147.0C707.9 155.5 707.8 161.7 707.5 175.0C707.2 188.3 709.0 210.2 708.5 221.0C708.0 231.8 706.7 229.8 705.0 235.0C703.3 240.2 700.3 240.8 699.0 250.0C697.7 259.2 699.1 277.0 698.0 286.0C696.9 295.0 696.2 293.9 693.0 300.0C689.8 306.1 682.3 316.4 680.0 320.0M647.0 216.5C651.1 217.1 659.6 218.8 670.0 220.0C680.4 221.2 696.7 223.2 705.0 223.0C713.3 222.8 714.0 219.7 716.0 219.0M716.0 219.0C718.2 217.9 722.4 214.9 728.0 213.0C733.6 211.1 735.3 209.3 747.0 208.5C758.7 207.7 783.2 207.7 793.0 208.5C802.8 209.3 798.4 210.4 801.5 213.0C804.6 215.6 805.2 218.2 810.0 223.0C814.8 227.8 821.0 233.2 828.0 239.5C835.0 245.8 843.5 253.0 849.0 258.0C854.5 263.0 856.6 261.6 858.5 267.5C860.4 273.4 858.9 283.7 859.5 291.0C860.1 298.3 861.2 301.3 862.0 308.0C862.8 314.7 864.6 320.2 864.0 328.0C863.4 335.8 859.9 343.0 858.5 351.5C857.1 360.0 856.0 365.4 856.0 375.0C856.0 384.6 857.2 395.0 858.5 405.0C859.8 415.0 861.6 423.4 863.0 430.5C864.4 437.6 863.6 440.3 866.5 444.5C869.4 448.7 875.9 449.1 879.0 454.0C882.1 458.9 882.7 466.6 884.0 472.0C885.3 477.4 885.6 481.8 886.0 484.0M917.0 221.0C912.3 221.8 899.9 222.2 891.0 225.5C882.1 228.8 875.9 233.7 867.5 239.5C859.1 245.3 850.7 253.0 844.5 258.0C838.3 263.0 838.0 261.6 833.0 267.5C828.0 273.4 822.8 283.2 816.5 290.5C810.2 297.8 803.9 302.1 798.0 308.0C792.1 313.9 789.4 317.7 784.0 323.5C778.6 329.3 775.1 334.5 768.0 340.0C760.9 345.5 753.8 349.1 744.5 354.0C735.2 358.9 723.6 364.2 716.5 367.5C709.4 370.8 711.2 367.0 705.0 372.5C698.8 378.0 689.9 391.3 682.0 398.0C674.1 404.7 665.2 402.8 661.0 409.5C656.8 416.2 658.5 427.9 658.5 435.0C658.5 442.1 660.2 440.2 661.0 449.0C661.8 457.8 662.6 477.7 663.0 484.0M917.0 221.0C921.1 218.0 931.6 210.0 940.0 204.5C948.4 199.0 955.1 195.1 963.5 190.5C971.9 185.9 978.1 183.9 986.5 179.0C994.9 174.1 999.5 169.2 1010.0 163.0C1020.5 156.8 1033.3 150.3 1045.0 144.5C1056.7 138.7 1068.5 133.5 1075.0 130.5C1081.5 127.5 1079.9 128.4 1081.0 128.0M537.5 305.0C535.6 309.1 528.9 318.4 527.0 328.0C525.1 337.6 528.9 350.5 527.0 358.5C525.1 366.5 519.0 367.1 516.5 372.5C514.0 377.9 511.6 381.8 513.0 388.5C514.4 395.2 522.6 402.8 524.5 409.5C526.4 416.2 525.4 420.5 523.5 426.0C521.6 431.5 515.7 435.0 514.0 440.0C512.3 445.0 513.5 449.1 514.0 454.0C514.5 458.9 515.7 462.1 516.5 467.5C517.3 472.9 518.1 481.0 518.5 484.0M377.0 450.0C385.4 450.6 409.7 451.2 423.5 453.5C437.3 455.8 443.5 460.2 453.5 463.0C463.5 465.8 468.1 468.2 479.0 469.0C489.9 469.8 505.6 466.5 514.0 467.5C522.4 468.5 518.4 471.7 525.5 474.5C532.6 477.3 547.3 481.3 553.5 483.0C559.7 484.7 558.8 483.8 560.0 484.0M595.5 305.0C597.4 307.5 603.9 312.7 606.0 319.0C608.1 325.3 606.0 332.1 607.0 340.0C608.0 347.9 609.4 355.1 611.5 363.0C613.6 370.9 615.1 377.7 618.5 384.0C621.9 390.3 625.4 393.9 630.5 398.0C635.6 402.1 641.5 404.8 647.0 407.0C652.5 409.2 658.5 409.5 661.0 410.0M672.5 328.0C676.3 328.0 688.0 325.8 693.5 328.0C699.0 330.2 700.9 332.4 703.0 340.0C705.1 347.6 704.6 364.6 705.0 370.0M917.0 352.5C912.3 352.9 899.8 353.5 891.0 355.0C882.2 356.5 873.8 359.2 868.0 361.0C862.2 362.8 860.6 364.3 859.0 365.0M917.0 351.5C920.3 351.7 928.8 351.2 935.5 352.5C942.2 353.8 947.7 354.9 954.0 358.5C960.3 362.1 963.4 370.2 970.5 372.5C977.6 374.8 979.7 371.0 993.5 371.0C1007.3 371.0 1032.3 373.8 1047.0 372.5C1061.7 371.2 1069.2 366.3 1075.0 364.0C1080.8 361.7 1074.5 362.0 1079.5 359.5C1084.5 357.0 1094.6 353.5 1103.0 350.0C1111.4 346.5 1117.5 343.2 1126.0 340.0C1134.5 336.8 1141.6 334.2 1150.0 332.0C1158.4 329.8 1167.2 330.3 1172.5 328.0C1177.8 325.7 1178.0 322.2 1179.5 319.0C1181.0 315.8 1180.7 311.6 1181.0 310.0" fill="none" stroke="#efb142" stroke-width="4.400" stroke-linecap="round" stroke-linejoin="round"/>
<path d="M457.0 128.0C459.3 132.0 464.4 141.5 470.0 150.0C475.6 158.5 482.2 165.1 488.0 175.0C493.8 184.9 494.8 193.8 502.0 205.0C509.2 216.2 521.2 228.9 528.0 237.0C534.8 245.1 535.5 245.5 540.0 250.0C544.5 254.5 548.5 257.5 553.0 262.0C557.5 266.5 560.7 268.2 565.0 275.0C569.3 281.8 572.0 294.1 577.0 300.0C582.0 305.9 590.1 306.6 593.0 308.0M553.0 267.0C556.1 269.2 566.9 274.0 570.0 279.0C573.1 284.0 568.4 291.0 570.0 295.0C571.6 299.0 573.6 299.7 579.0 301.0C584.4 302.3 596.2 301.8 600.0 302.0M516.0 128.0 L519.0 133.0M377.0 164.0 L386.0 158.0M701.5 128.0C700.7 131.8 700.0 141.4 697.0 149.0C694.0 156.6 688.3 163.0 685.0 170.0C681.7 177.0 679.9 175.4 678.5 188.0C677.1 200.6 677.6 229.0 677.0 240.0C676.4 251.0 675.2 239.8 675.0 249.0C674.8 258.2 676.0 278.2 676.0 291.0C676.0 303.8 675.2 312.4 675.0 320.0C674.8 327.6 675.0 330.7 675.0 333.0M917.0 137.5C911.1 141.6 896.2 152.1 884.0 160.5C871.8 168.9 859.9 177.7 849.0 184.0C838.1 190.3 830.0 191.7 823.5 195.5C817.0 199.3 815.5 201.3 813.0 205.0C810.5 208.7 812.6 211.1 809.5 216.0C806.4 220.9 802.7 224.9 796.0 232.5C789.3 240.1 781.8 248.0 772.5 258.0C763.2 268.0 751.2 279.0 744.5 288.0C737.8 297.0 738.0 300.4 735.0 308.0C732.0 315.6 730.3 323.3 728.0 330.0C725.7 336.7 723.1 342.3 722.0 345.0M917.0 178.0C912.3 180.1 901.1 185.5 891.0 189.5C880.9 193.5 870.2 194.3 861.0 200.0C851.8 205.7 846.8 214.3 840.0 221.0C833.2 227.7 829.0 230.3 823.5 237.0C818.0 243.7 813.7 250.4 809.5 258.0C805.3 265.6 804.1 271.4 800.0 279.0C795.9 286.6 790.6 294.8 786.5 300.0C782.4 305.2 780.3 304.6 777.0 308.0C773.7 311.4 773.0 312.9 768.0 319.0C763.0 325.1 756.2 335.3 749.0 342.0C741.8 348.7 735.5 351.0 728.0 356.0C720.5 361.0 711.2 367.5 707.5 370.0M849.0 128.0C852.0 130.9 861.3 137.7 865.5 144.0C869.7 150.3 870.1 157.5 872.5 163.0C874.9 168.5 874.4 170.4 879.0 174.5C883.6 178.6 893.8 181.9 898.0 186.0C902.2 190.1 899.1 194.1 902.5 197.5C905.9 200.9 914.4 203.7 917.0 205.0M893.0 132.5 L879.0 153.5M917.0 170.0C920.3 167.0 927.6 160.7 935.5 153.5C943.4 146.3 956.4 134.2 961.0 130.0M1075.0 131.5C1080.0 132.3 1093.8 134.6 1103.0 136.0C1112.2 137.4 1117.5 139.1 1126.0 139.5C1134.5 139.9 1140.1 139.3 1150.0 138.0C1159.9 136.7 1175.4 133.1 1181.0 132.0M1010.0 128.0C1011.6 130.5 1014.9 135.7 1019.0 142.0C1023.1 148.3 1029.2 155.1 1033.0 163.0C1036.8 170.9 1037.0 179.8 1040.0 186.0C1043.0 192.2 1047.8 191.7 1049.5 197.5C1051.2 203.3 1049.5 214.7 1049.5 218.5M928.5 308.0C931.8 305.7 940.7 298.1 947.0 295.0C953.3 291.9 956.4 295.4 963.5 290.5C970.6 285.6 978.1 274.6 986.5 267.5C994.9 260.4 1004.5 255.2 1010.0 251.0C1015.5 246.8 1013.7 245.9 1017.0 244.0C1020.3 242.1 1022.2 242.4 1028.5 240.5C1034.8 238.6 1045.3 236.6 1052.0 233.5C1058.7 230.4 1060.5 227.5 1065.5 223.5C1070.5 219.5 1074.0 215.1 1079.5 211.5C1085.0 207.9 1088.9 206.0 1096.0 203.5C1103.1 201.0 1111.5 199.2 1119.0 197.5C1126.5 195.8 1130.8 196.4 1137.5 194.0C1144.2 191.6 1151.8 187.1 1156.5 184.0C1161.2 180.9 1159.1 179.3 1163.5 177.0C1167.9 174.7 1177.8 172.1 1181.0 171.0M1049.5 217.5C1052.4 218.3 1057.9 219.8 1065.5 222.0C1073.1 224.2 1082.7 225.4 1091.5 230.0C1100.3 234.6 1108.3 244.1 1114.5 247.5C1120.7 250.9 1123.0 247.1 1126.0 249.0C1129.0 250.9 1127.2 257.0 1131.0 258.0C1134.8 259.0 1141.6 253.2 1147.0 254.5C1152.4 255.8 1156.4 260.6 1161.0 265.0C1165.6 269.4 1168.9 275.2 1172.5 279.0C1176.1 282.8 1179.5 284.7 1181.0 286.0M917.0 221.0C917.8 224.3 918.5 234.1 921.5 239.5C924.5 244.9 930.2 246.0 933.5 251.0C936.8 256.0 937.8 261.2 940.0 267.5C942.2 273.8 944.9 280.1 946.0 286.0C947.1 291.9 946.7 296.0 946.0 300.0C945.3 304.0 942.7 306.6 942.0 308.0M1181.0 197.5C1179.5 195.9 1175.7 192.0 1172.5 188.5C1169.3 185.0 1165.1 179.9 1163.5 178.0M377.0 314.5C384.6 314.7 407.8 312.2 419.0 315.5C430.2 318.8 432.0 329.7 439.5 333.0C447.0 336.3 451.7 331.5 460.5 334.0C469.3 336.5 481.4 345.6 488.5 347.0C495.6 348.4 495.8 345.1 500.0 342.0C504.2 338.9 508.8 332.0 512.0 329.5C515.2 327.0 516.9 328.3 518.0 328.0M377.0 385.0C383.7 384.8 405.6 383.4 414.0 384.0C422.4 384.6 416.4 387.7 423.5 388.5C430.6 389.3 443.5 385.5 453.5 388.5C463.5 391.5 470.2 399.3 479.0 405.0C487.8 410.7 495.8 415.9 502.5 420.0C509.2 424.1 512.4 424.9 516.5 428.0C520.6 431.1 520.5 433.5 525.5 437.5C530.5 441.5 538.2 447.8 544.5 450.0C550.8 452.2 553.0 449.1 560.5 450.0C568.0 450.9 579.3 453.5 586.0 455.0C592.7 456.5 589.1 458.1 597.5 458.5C605.9 458.9 623.6 457.3 632.5 457.0C641.4 456.7 644.4 457.0 647.0 457.0M514.0 428.0C511.5 429.3 504.1 430.8 500.0 435.0C495.9 439.2 495.1 446.5 491.0 451.5C486.9 456.5 483.8 457.6 477.0 463.0C470.2 468.4 458.4 477.7 453.5 481.5C448.6 485.3 450.6 483.6 450.0 484.0M607.0 328.0C610.0 330.2 618.5 337.5 623.5 340.0C628.5 342.5 632.6 335.7 635.0 342.0C637.4 348.3 636.4 357.4 637.0 375.0C637.6 392.6 638.0 420.4 638.5 440.0C639.0 459.6 639.7 476.1 640.0 484.0M675.0 333.0C675.4 335.1 678.3 339.9 677.0 344.5C675.7 349.1 670.4 353.1 668.0 358.5C665.6 363.9 664.0 366.1 663.5 374.5C663.0 382.9 667.7 397.9 665.5 405.0C663.3 412.1 654.8 411.9 651.5 414.0C648.2 416.1 647.8 416.1 647.0 416.5M773.5 355.0C774.6 358.1 778.9 363.9 779.5 372.5C780.1 381.1 776.8 394.6 777.0 402.5C777.2 410.4 779.6 410.6 780.5 416.5C781.4 422.4 779.3 429.1 782.0 435.0C784.7 440.9 792.6 440.2 795.5 449.0C798.4 457.8 797.5 477.7 798.0 484.0M744.5 358.5C743.7 361.4 741.6 366.1 740.0 374.5C738.4 382.9 736.0 396.6 735.5 405.0C735.0 413.4 738.4 415.6 737.5 421.0C736.6 426.4 733.4 429.1 730.5 435.0C727.6 440.9 723.6 444.7 721.5 453.5C719.4 462.3 719.5 478.5 719.0 484.0M917.0 323.5C912.8 324.3 902.0 323.4 893.5 328.0C885.0 332.6 878.8 341.9 870.0 349.0C861.2 356.1 851.2 361.2 844.5 367.5C837.8 373.8 837.1 377.7 833.0 384.0C828.9 390.3 827.0 396.2 821.5 402.5C816.0 408.8 809.2 413.1 802.5 419.0C795.8 424.9 790.2 428.8 784.0 435.0C777.8 441.2 772.1 448.9 768.0 453.5C763.9 458.1 762.3 459.2 761.0 460.5M670.0 456.0C680.9 455.6 713.8 453.1 730.5 453.5C747.2 453.9 754.6 458.5 763.0 458.5C771.4 458.5 764.4 455.0 777.0 453.5C789.6 452.0 819.6 449.1 833.0 450.0C846.4 450.9 846.5 455.4 851.5 458.5C856.5 461.6 859.3 465.9 861.0 467.5M866.5 446.5C864.6 449.9 858.7 458.8 856.0 465.5C853.3 472.2 852.3 480.7 851.5 484.0M917.0 405.0C914.0 406.6 906.0 409.4 900.5 414.0C895.0 418.6 890.7 424.6 886.5 430.5C882.3 436.4 878.7 443.6 877.0 446.5M760.0 460.0C761.8 461.8 767.3 465.7 770.0 470.0C772.7 474.3 774.1 481.5 775.0 484.0M970.5 374.5C967.5 377.9 960.7 387.2 954.0 393.5C947.3 399.8 940.2 407.1 933.5 409.5C926.8 411.9 920.0 407.4 917.0 407.0M917.0 314.5C919.1 313.1 925.3 309.6 928.5 307.0C931.7 304.4 933.8 301.3 935.0 300.0M1163.5 351.5C1163.9 354.0 1166.0 361.3 1165.5 365.5C1165.0 369.7 1161.8 373.3 1161.0 375.0M1120.0 457.0 L1181.0 455.0" fill="none" stroke="#fce6a2" stroke-width="1.500" stroke-linecap="round" stroke-linejoin="round"/>
<path d="M472.0 128.0C475.2 132.9 483.7 146.0 490.0 155.0C496.3 164.0 500.2 170.3 507.0 178.0C513.8 185.7 522.1 190.3 528.0 198.0C533.9 205.7 536.2 213.4 540.0 221.0C543.8 228.6 544.9 233.3 549.0 240.0C553.1 246.7 558.9 252.2 563.0 258.0C567.1 263.8 567.9 266.1 572.0 272.0C576.1 277.9 581.3 284.5 586.0 291.0C590.7 297.5 595.8 304.9 598.0 308.0M647.0 214.5C642.7 214.8 630.6 213.2 623.0 216.0C615.4 218.8 611.7 225.3 605.0 230.0C598.3 234.7 593.6 237.0 586.0 242.0C578.4 247.0 569.7 253.0 563.0 258.0C556.3 263.0 552.6 265.0 549.0 270.0C545.4 275.0 545.1 279.2 543.0 286.0C540.9 292.8 538.5 304.0 537.5 308.0M719.0 128.0C717.4 131.4 712.1 138.5 710.0 147.0C707.9 155.5 707.8 161.7 707.5 175.0C707.2 188.3 709.0 210.2 708.5 221.0C708.0 231.8 706.7 229.8 705.0 235.0C703.3 240.2 700.3 240.8 699.0 250.0C697.7 259.2 699.1 277.0 698.0 286.0C696.9 295.0 696.2 293.9 693.0 300.0C689.8 306.1 682.3 316.4 680.0 320.0M647.0 216.5C651.1 217.1 659.6 218.8 670.0 220.0C680.4 221.2 696.7 223.2 705.0 223.0C713.3 222.8 714.0 219.7 716.0 219.0M716.0 219.0C718.2 217.9 722.4 214.9 728.0 213.0C733.6 211.1 735.3 209.3 747.0 208.5C758.7 207.7 783.2 207.7 793.0 208.5C802.8 209.3 798.4 210.4 801.5 213.0C804.6 215.6 805.2 218.2 810.0 223.0C814.8 227.8 821.0 233.2 828.0 239.5C835.0 245.8 843.5 253.0 849.0 258.0C854.5 263.0 856.6 261.6 858.5 267.5C860.4 273.4 858.9 283.7 859.5 291.0C860.1 298.3 861.2 301.3 862.0 308.0C862.8 314.7 864.6 320.2 864.0 328.0C863.4 335.8 859.9 343.0 858.5 351.5C857.1 360.0 856.0 365.4 856.0 375.0C856.0 384.6 857.2 395.0 858.5 405.0C859.8 415.0 861.6 423.4 863.0 430.5C864.4 437.6 863.6 440.3 866.5 444.5C869.4 448.7 875.9 449.1 879.0 454.0C882.1 458.9 882.7 466.6 884.0 472.0C885.3 477.4 885.6 481.8 886.0 484.0M917.0 221.0C912.3 221.8 899.9 222.2 891.0 225.5C882.1 228.8 875.9 233.7 867.5 239.5C859.1 245.3 850.7 253.0 844.5 258.0C838.3 263.0 838.0 261.6 833.0 267.5C828.0 273.4 822.8 283.2 816.5 290.5C810.2 297.8 803.9 302.1 798.0 308.0C792.1 313.9 789.4 317.7 784.0 323.5C778.6 329.3 775.1 334.5 768.0 340.0C760.9 345.5 753.8 349.1 744.5 354.0C735.2 358.9 723.6 364.2 716.5 367.5C709.4 370.8 711.2 367.0 705.0 372.5C698.8 378.0 689.9 391.3 682.0 398.0C674.1 404.7 665.2 402.8 661.0 409.5C656.8 416.2 658.5 427.9 658.5 435.0C658.5 442.1 660.2 440.2 661.0 449.0C661.8 457.8 662.6 477.7 663.0 484.0M917.0 221.0C921.1 218.0 931.6 210.0 940.0 204.5C948.4 199.0 955.1 195.1 963.5 190.5C971.9 185.9 978.1 183.9 986.5 179.0C994.9 174.1 999.5 169.2 1010.0 163.0C1020.5 156.8 1033.3 150.3 1045.0 144.5C1056.7 138.7 1068.5 133.5 1075.0 130.5C1081.5 127.5 1079.9 128.4 1081.0 128.0M537.5 305.0C535.6 309.1 528.9 318.4 527.0 328.0C525.1 337.6 528.9 350.5 527.0 358.5C525.1 366.5 519.0 367.1 516.5 372.5C514.0 377.9 511.6 381.8 513.0 388.5C514.4 395.2 522.6 402.8 524.5 409.5C526.4 416.2 525.4 420.5 523.5 426.0C521.6 431.5 515.7 435.0 514.0 440.0C512.3 445.0 513.5 449.1 514.0 454.0C514.5 458.9 515.7 462.1 516.5 467.5C517.3 472.9 518.1 481.0 518.5 484.0M377.0 450.0C385.4 450.6 409.7 451.2 423.5 453.5C437.3 455.8 443.5 460.2 453.5 463.0C463.5 465.8 468.1 468.2 479.0 469.0C489.9 469.8 505.6 466.5 514.0 467.5C522.4 468.5 518.4 471.7 525.5 474.5C532.6 477.3 547.3 481.3 553.5 483.0C559.7 484.7 558.8 483.8 560.0 484.0M595.5 305.0C597.4 307.5 603.9 312.7 606.0 319.0C608.1 325.3 606.0 332.1 607.0 340.0C608.0 347.9 609.4 355.1 611.5 363.0C613.6 370.9 615.1 377.7 618.5 384.0C621.9 390.3 625.4 393.9 630.5 398.0C635.6 402.1 641.5 404.8 647.0 407.0C652.5 409.2 658.5 409.5 661.0 410.0M672.5 328.0C676.3 328.0 688.0 325.8 693.5 328.0C699.0 330.2 700.9 332.4 703.0 340.0C705.1 347.6 704.6 364.6 705.0 370.0M917.0 352.5C912.3 352.9 899.8 353.5 891.0 355.0C882.2 356.5 873.8 359.2 868.0 361.0C862.2 362.8 860.6 364.3 859.0 365.0M917.0 351.5C920.3 351.7 928.8 351.2 935.5 352.5C942.2 353.8 947.7 354.9 954.0 358.5C960.3 362.1 963.4 370.2 970.5 372.5C977.6 374.8 979.7 371.0 993.5 371.0C1007.3 371.0 1032.3 373.8 1047.0 372.5C1061.7 371.2 1069.2 366.3 1075.0 364.0C1080.8 361.7 1074.5 362.0 1079.5 359.5C1084.5 357.0 1094.6 353.5 1103.0 350.0C1111.4 346.5 1117.5 343.2 1126.0 340.0C1134.5 336.8 1141.6 334.2 1150.0 332.0C1158.4 329.8 1167.2 330.3 1172.5 328.0C1177.8 325.7 1178.0 322.2 1179.5 319.0C1181.0 315.8 1180.7 311.6 1181.0 310.0" fill="none" stroke="#fdeaae" stroke-width="2.600" stroke-linecap="round" stroke-linejoin="round"/>
<path d="M680.0 322.0C681.1 322.9 683.7 327.0 686.0 327.0C688.3 327.0 691.2 326.9 693.0 322.0C694.8 317.1 695.1 306.5 696.0 300.0C696.9 293.5 697.6 294.8 698.0 286.0C698.4 277.2 697.1 258.9 698.0 251.0C698.9 243.1 700.3 244.7 703.0 242.0C705.7 239.3 710.6 238.5 713.0 236.0C715.4 233.5 716.5 230.2 716.5 228.0C716.5 225.8 713.2 225.7 713.0 224.0C712.8 222.3 712.8 220.5 715.5 218.5C718.2 216.5 722.3 214.8 728.0 213.0C733.7 211.2 735.3 209.3 747.0 208.5C758.7 207.7 783.2 207.7 793.0 208.5C802.8 209.3 798.4 210.4 801.5 213.0C804.6 215.6 805.2 218.2 810.0 223.0C814.8 227.8 821.0 233.2 828.0 239.5C835.0 245.8 843.5 253.0 849.0 258.0C854.5 263.0 856.6 261.6 858.5 267.5C860.4 273.4 858.9 283.7 859.5 291.0C860.1 298.3 861.2 301.3 862.0 308.0C862.8 314.7 864.6 320.2 864.0 328.0C863.4 335.8 859.9 343.0 858.5 351.5C857.1 360.0 856.0 365.4 856.0 375.0C856.0 384.6 856.3 399.6 858.5 405.0C860.7 410.4 864.3 407.2 868.0 405.0C871.7 402.8 875.8 397.5 879.0 393.0C882.2 388.5 884.7 382.3 886.0 380.0" fill="none" stroke="#739fea" stroke-width="5.600" stroke-linecap="round" stroke-linejoin="round" opacity=".9"/>
<path d="M861.0 308.0C861.1 311.6 862.4 320.2 861.5 328.0C860.6 335.8 857.4 343.0 856.0 351.5C854.6 360.0 853.7 366.3 853.5 375.0C853.3 383.7 854.5 393.7 855.0 400.0C855.5 406.3 855.8 408.2 856.0 410.0" fill="none" stroke="#739fea" stroke-width="5.600" stroke-linecap="round" stroke-linejoin="round" opacity=".9"/>
<path d="M878.0 382.0C875.8 382.0 870.7 380.4 865.5 382.0C860.3 383.6 855.8 388.8 849.0 391.0C842.2 393.2 834.2 394.9 828.0 394.5C821.8 394.1 819.1 389.3 814.5 389.0C809.9 388.7 807.5 393.1 802.5 393.0C797.5 392.9 791.9 390.1 786.5 388.5C781.1 386.9 776.7 386.9 772.5 384.0C768.3 381.1 765.3 376.3 763.0 372.5C760.7 368.7 759.7 365.4 759.5 363.0C759.3 360.6 761.5 359.7 762.0 359.0" fill="none" stroke="#739fea" stroke-width="5.600" stroke-linecap="round" stroke-linejoin="round" opacity=".9"/>
<path d="M680.0 322.0C681.1 322.9 683.7 327.0 686.0 327.0C688.3 327.0 691.2 326.9 693.0 322.0C694.8 317.1 695.1 306.5 696.0 300.0C696.9 293.5 697.6 294.8 698.0 286.0C698.4 277.2 697.1 258.9 698.0 251.0C698.9 243.1 700.3 244.7 703.0 242.0C705.7 239.3 710.6 238.5 713.0 236.0C715.4 233.5 716.5 230.2 716.5 228.0C716.5 225.8 713.2 225.7 713.0 224.0C712.8 222.3 712.8 220.5 715.5 218.5C718.2 216.5 722.3 214.8 728.0 213.0C733.7 211.2 735.3 209.3 747.0 208.5C758.7 207.7 783.2 207.7 793.0 208.5C802.8 209.3 798.4 210.4 801.5 213.0C804.6 215.6 805.2 218.2 810.0 223.0C814.8 227.8 821.0 233.2 828.0 239.5C835.0 245.8 843.5 253.0 849.0 258.0C854.5 263.0 856.6 261.6 858.5 267.5C860.4 273.4 858.9 283.7 859.5 291.0C860.1 298.3 861.2 301.3 862.0 308.0C862.8 314.7 864.6 320.2 864.0 328.0C863.4 335.8 859.9 343.0 858.5 351.5C857.1 360.0 856.0 365.4 856.0 375.0C856.0 384.6 856.3 399.6 858.5 405.0C860.7 410.4 864.3 407.2 868.0 405.0C871.7 402.8 875.8 397.5 879.0 393.0C882.2 388.5 884.7 382.3 886.0 380.0" fill="none" stroke="#6389cf" stroke-width="1.500" stroke-linecap="round" stroke-linejoin="round" opacity=".8"/>
<path d="M861.0 308.0C861.1 311.6 862.4 320.2 861.5 328.0C860.6 335.8 857.4 343.0 856.0 351.5C854.6 360.0 853.7 366.3 853.5 375.0C853.3 383.7 854.5 393.7 855.0 400.0C855.5 406.3 855.8 408.2 856.0 410.0" fill="none" stroke="#6389cf" stroke-width="1.500" stroke-linecap="round" stroke-linejoin="round" opacity=".8"/>
<path d="M878.0 382.0C875.8 382.0 870.7 380.4 865.5 382.0C860.3 383.6 855.8 388.8 849.0 391.0C842.2 393.2 834.2 394.9 828.0 394.5C821.8 394.1 819.1 389.3 814.5 389.0C809.9 388.7 807.5 393.1 802.5 393.0C797.5 392.9 791.9 390.1 786.5 388.5C781.1 386.9 776.7 386.9 772.5 384.0C768.3 381.1 765.3 376.3 763.0 372.5C760.7 368.7 759.7 365.4 759.5 363.0C759.3 360.6 761.5 359.7 762.0 359.0" fill="none" stroke="#6389cf" stroke-width="1.500" stroke-linecap="round" stroke-linejoin="round" opacity=".8"/>
<g><rect x="441.8" y="175.5" width="22.5" height="12" rx="6" fill="#fff" stroke="#555" stroke-width="1"/><text x="453.0" y="184.8" text-anchor="middle" font-size="9.200" fill="#444">280</text></g>
<g><rect x="466.2" y="296.0" width="22.5" height="12" rx="6" fill="#fff" stroke="#555" stroke-width="1"/><text x="477.5" y="305.3" text-anchor="middle" font-size="9.200" fill="#444">280</text></g>
<g><rect x="374.8" y="284.5" width="13.5" height="12" rx="6" fill="#fff" stroke="#555" stroke-width="1"/><text x="381.5" y="293.8" text-anchor="middle" font-size="9.200" fill="#444">5</text></g>
<g><rect x="491.5" y="125.5" width="27.0" height="12" rx="6" fill="#fff" stroke="#555" stroke-width="1"/><text x="505.0" y="134.8" text-anchor="middle" font-size="9.200" fill="#444">120A</text></g>
<g><rect x="826.8" y="184.0" width="22.5" height="12" rx="6" fill="#fff" stroke="#555" stroke-width="1"/><text x="838.0" y="193.3" text-anchor="middle" font-size="9.200" fill="#444">141</text></g>
<g><rect x="897.2" y="197.0" width="22.5" height="12" rx="6" fill="#fff" stroke="#555" stroke-width="1"/><text x="908.5" y="206.3" text-anchor="middle" font-size="9.200" fill="#444">140</text></g>
<g><rect x="689.8" y="240.5" width="22.5" height="12" rx="6" fill="#fff" stroke="#555" stroke-width="1"/><text x="701.0" y="249.8" text-anchor="middle" font-size="9.200" fill="#444">400</text></g>
<g><rect x="936.8" y="173.5" width="22.5" height="12" rx="6" fill="#fff" stroke="#555" stroke-width="1"/><text x="948.0" y="182.8" text-anchor="middle" font-size="9.200" fill="#444">378</text></g>
<g><rect x="401.2" y="399.5" width="22.5" height="12" rx="6" fill="#fff" stroke="#555" stroke-width="1"/><text x="412.5" y="408.8" text-anchor="middle" font-size="9.200" fill="#444">139</text></g>
<g><rect x="533.8" y="418.0" width="22.5" height="12" rx="6" fill="#fff" stroke="#555" stroke-width="1"/><text x="545.0" y="427.3" text-anchor="middle" font-size="9.200" fill="#444">280</text></g>
<g><rect x="483.5" y="439.5" width="18.0" height="12" rx="6" fill="#fff" stroke="#555" stroke-width="1"/><text x="492.5" y="448.8" text-anchor="middle" font-size="9.200" fill="#444">70</text></g>
<g><rect x="454.8" y="443.5" width="22.5" height="12" rx="6" fill="#fff" stroke="#555" stroke-width="1"/><text x="466.0" y="452.8" text-anchor="middle" font-size="9.200" fill="#444">139</text></g>
<g><rect x="682.2" y="322.0" width="22.5" height="12" rx="6" fill="#fff" stroke="#555" stroke-width="1"/><text x="693.5" y="331.3" text-anchor="middle" font-size="9.200" fill="#444">400</text></g>
<g><rect x="683.2" y="353.5" width="22.5" height="12" rx="6" fill="#fff" stroke="#555" stroke-width="1"/><text x="694.5" y="362.8" text-anchor="middle" font-size="9.200" fill="#444">237</text></g>
<g><rect x="798.2" y="361.5" width="22.5" height="12" rx="6" fill="#fff" stroke="#555" stroke-width="1"/><text x="809.5" y="370.8" text-anchor="middle" font-size="9.200" fill="#444">236</text></g>
<g><rect x="720.5" y="432.5" width="18.0" height="12" rx="6" fill="#fff" stroke="#555" stroke-width="1"/><text x="729.5" y="441.8" text-anchor="middle" font-size="9.200" fill="#444">42</text></g>
<g><rect x="893.5" y="406.0" width="18.0" height="12" rx="6" fill="#fff" stroke="#555" stroke-width="1"/><text x="902.5" y="415.3" text-anchor="middle" font-size="9.200" fill="#444">10</text></g>
<g><rect x="930.8" y="320.0" width="22.5" height="12" rx="6" fill="#fff" stroke="#555" stroke-width="1"/><text x="942.0" y="329.3" text-anchor="middle" font-size="9.200" fill="#444">236</text></g>
<g><rect x="1106.2" y="368.0" width="22.5" height="12" rx="6" fill="#fff" stroke="#555" stroke-width="1"/><text x="1117.5" y="377.3" text-anchor="middle" font-size="9.200" fill="#444">264</text></g>
<g><rect x="1146.2" y="374.0" width="22.5" height="12" rx="6" fill="#fff" stroke="#555" stroke-width="1"/><text x="1157.5" y="383.3" text-anchor="middle" font-size="9.200" fill="#444">124</text></g>
<g><rect x="828.8" y="472.0" width="22.5" height="12" rx="6" fill="#fff" stroke="#555" stroke-width="1"/><text x="840.0" y="481.3" text-anchor="middle" font-size="9.200" fill="#444">155</text></g>
<g><rect x="1122.8" y="135.0" width="22.5" height="12" rx="6" fill="#fff" stroke="#555" stroke-width="1"/><text x="1134.0" y="144.3" text-anchor="middle" font-size="9.200" fill="#444">316</text></g>
<g><path d="M510.0 222.5q4 1.500 8.500 -1q4.500 2.500 8.500 1q-1.500 3 0 6.500q-1 5 -8.500 7.500q-7.500 -2.500 -8.500 -7.500q1.500 -3.500 0 -6.500z" fill="#fff" stroke="#555" stroke-width="1"/><text x="518.5" y="232.5" text-anchor="middle" font-size="8.500" fill="#444">41</text></g>
<g><path d="M666.0 250.0q4 1.500 8.500 -1q4.500 2.500 8.500 1q-1.500 3 0 6.500q-1 5 -8.500 7.500q-7.500 -2.500 -8.500 -7.500q1.500 -3.500 0 -6.500z" fill="#fff" stroke="#555" stroke-width="1"/><text x="674.5" y="260.0" text-anchor="middle" font-size="8.500" fill="#444">19</text></g>
<g><path d="M925.0 149.0q4 1.500 8.500 -1q4.500 2.500 8.500 1q-1.500 3 0 6.500q-1 5 -8.500 7.500q-7.500 -2.500 -8.500 -7.500q1.500 -3.500 0 -6.500z" fill="#fff" stroke="#555" stroke-width="1"/><text x="933.5" y="159.0" text-anchor="middle" font-size="8.500" fill="#444">23</text></g>
<g><path d="M1029.5 230.5q4 1.500 8.500 -1q4.500 2.500 8.500 1q-1.500 3 0 6.500q-1 5 -8.500 7.500q-7.500 -2.500 -8.500 -7.500q1.500 -3.500 0 -6.500z" fill="#fff" stroke="#555" stroke-width="1"/><text x="1038.0" y="240.5" text-anchor="middle" font-size="8.500" fill="#444">29</text></g>
<g><path d="M457.5 392.5q4 1.500 8.500 -1q4.500 2.500 8.500 1q-1.500 3 0 6.500q-1 5 -8.500 7.500q-7.500 -2.500 -8.500 -7.500q1.500 -3.500 0 -6.500z" fill="#fff" stroke="#555" stroke-width="1"/><text x="466.0" y="402.5" text-anchor="middle" font-size="8.500" fill="#444">78</text></g>
<g><path d="M566.5 443.5q4 1.500 8.500 -1q4.500 2.500 8.500 1q-1.500 3 0 6.500q-1 5 -8.500 7.500q-7.500 -2.500 -8.500 -7.500q1.500 -3.500 0 -6.500z" fill="#fff" stroke="#555" stroke-width="1"/><text x="575.0" y="453.5" text-anchor="middle" font-size="8.500" fill="#444">78</text></g>
<g><path d="M628.5 368.0q4 1.500 8.500 -1q4.500 2.500 8.500 1q-1.500 3 0 6.500q-1 5 -8.500 7.500q-7.500 -2.500 -8.500 -7.500q1.500 -3.500 0 -6.500z" fill="#fff" stroke="#555" stroke-width="1"/><text x="637.0" y="378.0" text-anchor="middle" font-size="8.500" fill="#444">41</text></g>
<g><path d="M873.0 333.5q4 1.500 8.500 -1q4.500 2.500 8.500 1q-1.500 3 0 6.500q-1 5 -8.500 7.500q-7.500 -2.500 -8.500 -7.500q1.500 -3.500 0 -6.500z" fill="#fff" stroke="#555" stroke-width="1"/><text x="881.5" y="343.5" text-anchor="middle" font-size="8.500" fill="#444">29</text></g>
<g><path d="M888.5 354.5q4 1.500 8.500 -1q4.500 2.500 8.500 1q-1.500 3 0 6.500q-1 5 -8.500 7.500q-7.500 -2.500 -8.500 -7.500q1.500 -3.500 0 -6.500z" fill="#fff" stroke="#555" stroke-width="1"/><text x="897.0" y="364.5" text-anchor="middle" font-size="8.500" fill="#444">78</text></g>
<g><path d="M765.0 399.0q4 1.500 8.500 -1q4.500 2.500 8.500 1q-1.500 3 0 6.500q-1 5 -8.500 7.500q-7.500 -2.500 -8.500 -7.500q1.500 -3.500 0 -6.500z" fill="#fff" stroke="#555" stroke-width="1"/><text x="773.5" y="409.0" text-anchor="middle" font-size="8.500" fill="#444">23</text></g>
<g><path d="M731.5 448.5q4 1.500 8.500 -1q4.500 2.500 8.500 1q-1.500 3 0 6.500q-1 5 -8.500 7.500q-7.500 -2.500 -8.500 -7.500q1.500 -3.500 0 -6.500z" fill="#fff" stroke="#555" stroke-width="1"/><text x="740.0" y="458.5" text-anchor="middle" font-size="8.500" fill="#444">78</text></g>
<g><path d="M1005.0 364.5q4 1.500 8.500 -1q4.500 2.500 8.500 1q-1.500 3 0 6.500q-1 5 -8.500 7.500q-7.500 -2.500 -8.500 -7.500q1.500 -3.500 0 -6.500z" fill="#fff" stroke="#555" stroke-width="1"/><text x="1013.5" y="374.5" text-anchor="middle" font-size="8.500" fill="#444">78</text></g>
<g><path d="M802.0 217.5q4.500 1 9 -1q4.500 2 9 1q1 6 -2 9.500q-3 3.500 -7 5q-4 -1.500 -7 -5q-3 -3.500 -2 -9.500z" fill="#4a6fd0" stroke="#fff" stroke-width=".6"/><path d="M802.0 217.5q4.500 1 9 -1q4.500 2 9 1l.2 2.600h-18.400z" fill="#d8463c"/><text x="811.0" y="227.5" text-anchor="middle" font-size="8.500" font-weight="bold" fill="#fff">285</text></g>
<g><path d="M893.5 217.5q4.500 1 9 -1q4.500 2 9 1q1 6 -2 9.500q-3 3.500 -7 5q-4 -1.500 -7 -5q-3 -3.500 -2 -9.500z" fill="#4a6fd0" stroke="#fff" stroke-width=".6"/><path d="M893.5 217.5q4.500 1 9 -1q4.500 2 9 1l.2 2.600h-18.400z" fill="#d8463c"/><text x="902.5" y="227.5" text-anchor="middle" font-size="8.500" font-weight="bold" fill="#fff">85</text></g>
<g><path d="M505.5 455.5q4.500 1 9 -1q4.500 2 9 1q1 6 -2 9.500q-3 3.500 -7 5q-4 -1.500 -7 -5q-3 -3.500 -2 -9.500z" fill="#4a6fd0" stroke="#fff" stroke-width=".6"/><path d="M505.5 455.5q4.500 1 9 -1q4.500 2 9 1l.2 2.600h-18.400z" fill="#d8463c"/><text x="514.5" y="465.5" text-anchor="middle" font-size="8.500" font-weight="bold" fill="#fff">285</text></g>
<g><path d="M693.5 375.0q4.500 1 9 -1q4.500 2 9 1q1 6 -2 9.500q-3 3.500 -7 5q-4 -1.500 -7 -5q-3 -3.500 -2 -9.500z" fill="#4a6fd0" stroke="#fff" stroke-width=".6"/><path d="M693.5 375.0q4.500 1 9 -1q4.500 2 9 1l.2 2.600h-18.400z" fill="#d8463c"/><text x="702.5" y="385.0" text-anchor="middle" font-size="8.500" font-weight="bold" fill="#fff">85</text></g>
<g><path d="M857.0 436.5q4.500 1 9 -1q4.500 2 9 1q1 6 -2 9.500q-3 3.500 -7 5q-4 -1.500 -7 -5q-3 -3.500 -2 -9.500z" fill="#4a6fd0" stroke="#fff" stroke-width=".6"/><path d="M857.0 436.5q4.500 1 9 -1q4.500 2 9 1l.2 2.600h-18.400z" fill="#d8463c"/><text x="866.0" y="446.5" text-anchor="middle" font-size="8.500" font-weight="bold" fill="#fff">285</text></g>
<g><path d="M619.0 358.5q4.500 1 9 -1q4.500 2 9 1q1 6 -2 9.500q-3 3.500 -7 5q-4 -1.500 -7 -5q-3 -3.500 -2 -9.500z" fill="#4a6fd0" stroke="#fff" stroke-width=".6"/><path d="M619.0 358.5q4.500 1 9 -1q4.500 2 9 1l.2 2.600h-18.400z" fill="#d8463c"/><text x="628.0" y="368.5" text-anchor="middle" font-size="8.500" font-weight="bold" fill="#fff">75</text></g>
<text x="503.5" y="188.5" font-size="11.5" fill="#3c4043" text-anchor="start" font-weight="normal" stroke="#fff" stroke-width="2.200" stroke-linejoin="round" paint-order="stroke">Powers Park</text>
<text x="415.0" y="214.0" font-size="11.5" fill="#3c4043" text-anchor="start" font-weight="normal" stroke="#fff" stroke-width="2.200" stroke-linejoin="round" paint-order="stroke">Fair Oaks</text>
<text x="469.0" y="273.0" font-size="11.5" fill="#3c4043" text-anchor="start" font-weight="normal" stroke="#fff" stroke-width="2.200" stroke-linejoin="round" paint-order="stroke">Smyrna</text>
<text x="539.5" y="305.5" font-size="11.5" fill="#3c4043" text-anchor="start" font-weight="normal" stroke="#fff" stroke-width="2.200" stroke-linejoin="round" paint-order="stroke">Vinings</text>
<text x="714.5" y="168.0" font-size="11.5" fill="#3c4043" text-anchor="start" font-weight="normal" stroke="#fff" stroke-width="2.200" stroke-linejoin="round" paint-order="stroke">Dunwoody</text>
<text x="649.0" y="194.0" font-size="11.5" fill="#3c4043" text-anchor="start" font-weight="normal" stroke="#fff" stroke-width="2.200" stroke-linejoin="round" paint-order="stroke">Sandy Spri</text>
<text x="790.5" y="249.0" font-size="11.5" fill="#3c4043" text-anchor="start" font-weight="normal" stroke="#fff" stroke-width="2.200" stroke-linejoin="round" paint-order="stroke">Doraville</text>
<text x="822.5" y="276.5" font-size="11.5" fill="#3c4043" text-anchor="start" font-weight="normal" stroke="#fff" stroke-width="2.200" stroke-linejoin="round" paint-order="stroke">Embry Hills</text>
<text x="886.0" y="175.5" font-size="11.5" fill="#3c4043" text-anchor="start" font-weight="normal" stroke="#fff" stroke-width="2.200" stroke-linejoin="round" paint-order="stroke">Norcross</text>
<text x="879.0" y="132.5" font-size="11.5" fill="#3c4043" text-anchor="start" font-weight="normal" stroke="#fff" stroke-width="2.200" stroke-linejoin="round" paint-order="stroke">Corners</text>
<text x="726.0" y="304.5" font-size="11.5" fill="#3c4043" text-anchor="start" font-weight="normal" stroke="#fff" stroke-width="2.200" stroke-linejoin="round" paint-order="stroke">okhaven</text>
<text x="991.5" y="263.0" font-size="11.5" fill="#3c4043" text-anchor="start" font-weight="normal" stroke="#fff" stroke-width="2.200" stroke-linejoin="round" paint-order="stroke">Lilburn</text>
<text x="368.0" y="382.5" font-size="11.5" fill="#3c4043" text-anchor="start" font-weight="normal" stroke="#fff" stroke-width="2.200" stroke-linejoin="round" paint-order="stroke">Mableton</text>
<text x="756.0" y="380.5" font-size="11.5" fill="#3c4043" text-anchor="start" font-weight="normal" stroke="#fff" stroke-width="2.200" stroke-linejoin="round" paint-order="stroke">North</text>
<text x="744.0" y="392.0" font-size="11.5" fill="#3c4043" text-anchor="start" font-weight="normal" stroke="#fff" stroke-width="2.200" stroke-linejoin="round" paint-order="stroke">Druid Hills</text>
<text x="745.5" y="431.0" font-size="11.5" fill="#3c4043" text-anchor="start" font-weight="normal" stroke="#fff" stroke-width="2.200" stroke-linejoin="round" paint-order="stroke">North Decatur</text>
<text x="774.5" y="457.0" font-size="11.5" fill="#3c4043" text-anchor="start" font-weight="normal" stroke="#fff" stroke-width="2.200" stroke-linejoin="round" paint-order="stroke">Decatur</text>
<text x="849.5" y="398.0" font-size="11.5" fill="#3c4043" text-anchor="start" font-weight="normal" stroke="#fff" stroke-width="2.200" stroke-linejoin="round" paint-order="stroke">Clarkston</text>
<text x="888.5" y="322.5" font-size="11.5" fill="#3c4043" text-anchor="start" font-weight="normal" stroke="#fff" stroke-width="2.200" stroke-linejoin="round" paint-order="stroke">Tucker</text>
<text x="991.0" y="340.0" font-size="11.5" fill="#3c4043" text-anchor="start" font-weight="normal" stroke="#fff" stroke-width="2.200" stroke-linejoin="round" paint-order="stroke">Mountain Park</text>
<text x="956.5" y="395.0" font-size="11.5" fill="#3c4043" text-anchor="start" font-weight="normal" stroke="#fff" stroke-width="2.200" stroke-linejoin="round" paint-order="stroke">Stone</text>
<text x="946.5" y="406.5" font-size="11.5" fill="#3c4043" text-anchor="start" font-weight="normal" stroke="#fff" stroke-width="2.200" stroke-linejoin="round" paint-order="stroke">Mountain</text>
<text x="1030.0" y="394.0" font-size="11.5" fill="#3c4043" text-anchor="start" font-weight="normal" stroke="#fff" stroke-width="2.200" stroke-linejoin="round" paint-order="stroke">Rockbridge</text>
<text x="1159.5" y="316.5" font-size="11.5" fill="#3c4043" text-anchor="start" font-weight="normal" stroke="#fff" stroke-width="2.200" stroke-linejoin="round" paint-order="stroke">Snellville</text>
<text x="1122.5" y="408.5" font-size="11.5" fill="#3c4043" text-anchor="start" font-weight="normal" stroke="#fff" stroke-width="2.200" stroke-linejoin="round" paint-order="stroke">Centerville</text>
<text x="347.5" y="432.8" font-size="12.6" fill="#3d8b9d" text-anchor="start" font-weight="normal" stroke="#fff" stroke-width="2.200" stroke-linejoin="round" paint-order="stroke">Flags Over Georgia</text>
<text x="531.0" y="250.5" font-size="8.2" fill="#5f6368" text-anchor="start" font-weight="normal" stroke="#fff" stroke-width="2.200" stroke-linejoin="round" paint-order="stroke" letter-spacing="0.9">CUMBERLAND</text>
<text x="985.5" y="156.5" font-size="8.2" fill="#5f6368" text-anchor="start" font-weight="normal" stroke="#fff" stroke-width="2.200" stroke-linejoin="round" paint-order="stroke" letter-spacing="0.9">GWINNETT PLACE</text>
<text x="650.5" y="441.0" font-size="8.2" fill="#5f6368" text-anchor="start" font-weight="normal" stroke="#fff" stroke-width="2.200" stroke-linejoin="round" paint-order="stroke" letter-spacing="0.9">MIDTOWN</text>
<text x="628.0" y="350.0" font-size="8.2" fill="#5f6368" text-anchor="start" font-weight="normal" stroke="#fff" stroke-width="2.200" stroke-linejoin="round" paint-order="stroke" letter-spacing="0.9">BUCKHEAD</text>
<g><path d="M438.300 465c-3.200-6.500-9.400-11-9.400-17.700a9.400 9.400 0 0 1 18.800 0c0 6.700-6.200 11.200-9.400 17.700z" fill="#4aa6bb"/><path d="M438.300 441.500c2 0 3 1 3.400 2.200 1.400.2 2 1.200 1.800 2.300.8.800.6 2-.3 2.500-.3 1-1.300 1.300-2.200 1l-1.500-.3.400 3.800h-3.200l.4-3.800-1.500.3c-1 .3-2-.1-2.200-1-.9-.5-1.100-1.700-.3-2.500-.2-1.100.4-2.100 1.800-2.300.4-1.200 1.400-2.200 3.400-2.200z" fill="#e6f4f7"/></g>
<text x="387.6" y="475.8" font-size="16.800" fill="#fff" stroke="#fff" stroke-width="2.600" stroke-linejoin="round">G</text>
<text x="401.4" y="475.8" font-size="16.800" fill="#fff" stroke="#fff" stroke-width="2.600" stroke-linejoin="round">o</text>
<text x="410.8" y="475.8" font-size="16.800" fill="#fff" stroke="#fff" stroke-width="2.600" stroke-linejoin="round">o</text>
<text x="420.2" y="475.8" font-size="16.800" fill="#fff" stroke="#fff" stroke-width="2.600" stroke-linejoin="round">g</text>
<text x="429.7" y="475.8" font-size="16.800" fill="#fff" stroke="#fff" stroke-width="2.600" stroke-linejoin="round">l</text>
<text x="432.6" y="475.8" font-size="16.800" fill="#fff" stroke="#fff" stroke-width="2.600" stroke-linejoin="round">e</text>
<text x="387.6" y="475.8" font-size="16.800" fill="#4285f4" stroke="#4285f4" stroke-width=".55">G</text>
<text x="401.4" y="475.8" font-size="16.800" fill="#ea4335" stroke="#ea4335" stroke-width=".55">o</text>
<text x="410.8" y="475.8" font-size="16.800" fill="#fbbc05" stroke="#fbbc05" stroke-width=".55">o</text>
<text x="420.2" y="475.8" font-size="16.800" fill="#4285f4" stroke="#4285f4" stroke-width=".55">g</text>
<text x="429.7" y="475.8" font-size="16.800" fill="#34a853" stroke="#34a853" stroke-width=".55">l</text>
<text x="432.6" y="475.8" font-size="16.800" fill="#ea4335" stroke="#ea4335" stroke-width=".55">e</text>
<g><path d="M677.2 295.8h21.6q1.5 0 1.5 1.5v21.2q0 1.5 -1.5 1.5h-6.3l-4.5 6l-4.5 -6h-6.3q-1.5 0 -1.5 -1.5v-21.2q0 -1.5 1.5 -1.5z" fill="#fff" stroke="#b37a52" stroke-width="1.700" stroke-linejoin="round"/><g transform="translate(679.0,298.8) scale(.75)"><path d="M12 2.500L1 12h3v9h6v-6h4v6h6v-9h3l-3.500-3V4.500h-2.500v2.300z" fill="#e8912f"/></g></g>
<g><path d="M703.7 294.3h21.6q1.5 0 1.5 1.5v21.2q0 1.5 -1.5 1.5h-6.3l-4.5 6l-4.5 -6h-6.3q-1.5 0 -1.5 -1.5v-21.2q0 -1.5 1.5 -1.5z" fill="#fff" stroke="#b37a52" stroke-width="1.700" stroke-linejoin="round"/><g transform="translate(705.5,297.3) scale(.75)"><path d="M12 2.500L1 12h3v9h6v-6h4v6h6v-9h3l-3.500-3V4.500h-2.500v2.300z" fill="#e8912f"/></g></g>
<g><path d="M664.2 295.8h21.6q1.5 0 1.5 1.5v21.2q0 1.5 -1.5 1.5h-6.3l-4.5 6l-4.5 -6h-6.3q-1.5 0 -1.5 -1.5v-21.2q0 -1.5 1.5 -1.5z" fill="#fff" stroke="#b2423a" stroke-width="1.500" stroke-linejoin="round"/><text x="675.0" y="313.7" text-anchor="middle" font-family="Liberation Serif,serif" font-size="17" fill="#cc5346">1</text></g>
<g><path d="M705.5 186.3h21.6q1.5 0 1.5 1.5v21.2q0 1.5 -1.5 1.5h-6.3l-4.5 6l-4.5 -6h-6.3q-1.5 0 -1.5 -1.5v-21.2q0 -1.5 1.5 -1.5z" fill="#fff" stroke="#b2423a" stroke-width="1.500" stroke-linejoin="round"/><text x="716.3" y="204.2" text-anchor="middle" font-family="Liberation Serif,serif" font-size="17" fill="#cc5346">2</text></g>
<g><path d="M759.7 325.3h21.6q1.5 0 1.5 1.5v21.2q0 1.5 -1.5 1.5h-6.3l-4.5 6l-4.5 -6h-6.3q-1.5 0 -1.5 -1.5v-21.2q0 -1.5 1.5 -1.5z" fill="#fff" stroke="#b2423a" stroke-width="1.500" stroke-linejoin="round"/><text x="770.5" y="343.2" text-anchor="middle" font-family="Liberation Serif,serif" font-size="17" fill="#cc5346">5</text></g>
<g><path d="M747.2 329.8h21.6q1.5 0 1.5 1.5v21.2q0 1.5 -1.5 1.5h-6.3l-4.5 6l-4.5 -6h-6.3q-1.5 0 -1.5 -1.5v-21.2q0 -1.5 1.5 -1.5z" fill="#fff" stroke="#b2423a" stroke-width="1.500" stroke-linejoin="round"/><text x="758.0" y="347.7" text-anchor="middle" font-family="Liberation Serif,serif" font-size="17" fill="#cc5346">4</text></g>
<g><path d="M867.0 353.1h21.6q1.5 0 1.5 1.5v21.2q0 1.5 -1.5 1.5h-6.3l-4.5 6l-4.5 -6h-6.3q-1.5 0 -1.5 -1.5v-21.2q0 -1.5 1.5 -1.5z" fill="#fff" stroke="#b2423a" stroke-width="1.500" stroke-linejoin="round"/><text x="877.8" y="371.0" text-anchor="middle" font-family="Liberation Sans,sans-serif" font-size="15.5" fill="#cc5346">3</text></g>
<g><path d="M614.5 345.8h21.6q1.5 0 1.5 1.5v21.2q0 1.5 -1.5 1.5h-6.3l-4.5 6l-4.5 -6h-6.3q-1.5 0 -1.5 -1.5v-21.2q0 -1.5 1.5 -1.5z" fill="#fff" stroke="#3e7a2a" stroke-width="1.700" stroke-linejoin="round"/><g transform="translate(616.3,348.8) scale(.75)"><path d="M12 2.500L1 12h3v9h6v-6h4v6h6v-9h3l-3.500-3V4.500h-2.500v2.300z" fill="#3f8528"/></g></g>
<g><path d="M601.4 389.0h21.6q1.5 0 1.5 1.5v21.2q0 1.5 -1.5 1.5h-6.3l-4.5 6l-4.5 -6h-6.3q-1.5 0 -1.5 -1.5v-21.2q0 -1.5 1.5 -1.5z" fill="#fff" stroke="#b37a52" stroke-width="1.700" stroke-linejoin="round"/><rect x="606.2" y="394.5" width="12" height="14.500" rx="1" fill="#fbe9cb" stroke="#e8a04f" stroke-width="1.100"/><path d="M606.2 395.0h12" stroke="#e8a04f" stroke-width="2.200"/><path d="M608.2 399.5h8M608.2 402.0h8M608.2 404.5h8M608.2 407.0h5" stroke="#e8a04f" stroke-width=".9"/></g>
<g><path d="M610.7 410.8h21.6q1.5 0 1.5 1.5v21.2q0 1.5 -1.5 1.5h-6.3l-4.5 6l-4.5 -6h-6.3q-1.5 0 -1.5 -1.5v-21.2q0 -1.5 1.5 -1.5z" fill="#fff" stroke="#b37a52" stroke-width="1.700" stroke-linejoin="round"/><g transform="translate(612.5,413.8) scale(.75)"><path d="M12 2.500L1 12h3v9h6v-6h4v6h6v-9h3l-3.500-3V4.500h-2.500v2.300z" fill="#e8912f"/></g></g>
<g><path d="M672.0 378.4h21.6q1.5 0 1.5 1.5v21.2q0 1.5 -1.5 1.5h-21.6q-1.5 0 -1.5 -1.5v-21.2q0 -1.5 1.5 -1.5z" fill="#fff" stroke="#b37a52" stroke-width="1.700" stroke-linejoin="round"/><rect x="676.8" y="383.9" width="12" height="14.500" rx="1" fill="#fbe9cb" stroke="#e8a04f" stroke-width="1.100"/><path d="M676.8 384.4h12" stroke="#e8a04f" stroke-width="2.200"/><path d="M678.8 388.9h8M678.8 391.4h8M678.8 393.9h8M678.8 396.4h5" stroke="#e8a04f" stroke-width=".9"/></g>
<g><path d="M670.2 392.3h21.6q1.5 0 1.5 1.5v21.2q0 1.5 -1.5 1.5h-21.6q-1.5 0 -1.5 -1.5v-21.2q0 -1.5 1.5 -1.5z" fill="#fff" stroke="#b37a52" stroke-width="1.700" stroke-linejoin="round"/><g transform="translate(672.0,395.3) scale(.75)"><path d="M12 2.500L1 12h3v9h6v-6h4v6h6v-9h3l-3.500-3V4.500h-2.500v2.300z" fill="#e8912f"/></g></g>
<g><path d="M682.7 392.3h21.6q1.5 0 1.5 1.5v21.2q0 1.5 -1.5 1.5h-21.6q-1.5 0 -1.5 -1.5v-21.2q0 -1.5 1.5 -1.5z" fill="#fff" stroke="#b37a52" stroke-width="1.700" stroke-linejoin="round"/><g transform="translate(684.5,395.3) scale(.75)"><path d="M12 2.500L1 12h3v9h6v-6h4v6h6v-9h3l-3.500-3V4.500h-2.500v2.300z" fill="#e8912f"/></g></g>
<g><path d="M675.7 401.1h21.6q1.5 0 1.5 1.5v21.2q0 1.5 -1.5 1.5h-6.3l-4.5 6l-4.5 -6h-6.3q-1.5 0 -1.5 -1.5v-21.2q0 -1.5 1.5 -1.5z" fill="#fff" stroke="#b37a52" stroke-width="1.700" stroke-linejoin="round"/><g transform="translate(677.5,404.1) scale(.75)"><path d="M12 2.500L1 12h3v9h6v-6h4v6h6v-9h3l-3.500-3V4.500h-2.500v2.300z" fill="#e8912f"/></g></g>
<g><path d="M631.300 486v-33.500q0-5 5-5h30q5.500 0 7.500 5l2 7.500h16q6.500 0 6.500 6.500v20z" fill="#774a2c"/><path d="M659 486v-22q0-3.500 3.500-3.500h29q6.500 0 6.500 6.500v19z" fill="#9a6139"/><rect x="640.500" y="463" width="19" height="24" fill="#fff" stroke="#b5703f" stroke-width="1.200"/><rect x="646.500" y="467.500" width="10.500" height="14" rx="1" fill="#f7cf96" stroke="#e8a04f" stroke-width="1.100"/><path d="M646.500 468h10.500" stroke="#e8963a" stroke-width="2"/><rect x="651.500" y="478" width="5" height="3" fill="#fff"/><rect x="661" y="464.500" width="35.500" height="22" rx="2" fill="#fff" stroke="#b5703f" stroke-width="1.100"/><rect x="663" y="467" width="31.500" height="20" rx="2" fill="#fff" stroke="#b5703f" stroke-width="1.100"/><rect x="665" y="469.500" width="27.500" height="18" rx="2" fill="#fff" stroke="#b5703f" stroke-width="1.100"/><rect x="667" y="472" width="23.500" height="14" fill="#fff"/><path d="M670.500 484.500l8.200-7.500 8.200 7.500z" fill="#e8912f"/><path d="M669.500 483.500l9.200-8.300 9.200 8.300" fill="none" stroke="#e8912f" stroke-width="1.200"/></g>
</svg>
<div class="abs" style="left:10.500px;top:10.500px;width:161.500px;height:37.500px;background:#fff;border-radius:2px;box-shadow:0 1px 4px -1px rgba(0,0,0,.3);"></div>
<div class="abs" style="left:77px;top:11px;width:1px;height:36.500px;background:#efefef;"></div>
<div class="abs" style="left:27px;top:18px;font-size:17px;font-weight:bold;color:#111;line-height:22px;letter-spacing:-.4px;">Map</div>
<div class="abs" style="left:93.500px;top:18px;font-size:17.200px;color:#565656;line-height:22px;">Satellite</div>
<div class="abs" style="left:755.500px;top:10.500px;width:38px;height:37.500px;background:#fff;border-radius:2px;box-shadow:0 1px 4px -1px rgba(0,0,0,.3);">
 <svg class="abs" style="left:10.500px;top:10.500px;" width="17" height="17" viewBox="0 0 17 17"><path d="M1.200 5.500V1.200h4.300M11.500 1.200h4.300v4.300M15.800 11.500v4.300h-4.300M5.500 15.800H1.200v-4.300" fill="none" stroke="#666" stroke-width="2.300"/></svg></div>
<div class="abs" style="left:755.500px;top:186.500px;width:38px;height:37.500px;background:#fff;border-radius:2px;box-shadow:0 1px 4px -1px rgba(0,0,0,.3);">
 <svg class="abs" style="left:10px;top:4.500px;" width="18" height="30" viewBox="0 0 18 30"><circle cx="9" cy="4.600" r="4.100" fill="#f2a93b"/><path d="M2.500 10.500q6.500-2.500 13 0l-1.200 9h-1.800l-.7 9h-2.300l-.5-6.500-.5 6.500H6.200l-.7-9H3.700z" fill="#f2a93b"/><path d="M6.300 9.800l2.700 4 2.700-4" fill="none" stroke="#d98c1e" stroke-width="1.100"/></svg></div>
<div class="abs" style="left:755.500px;top:255px;width:38px;height:78px;background:#fff;border-radius:2px;box-shadow:0 1px 4px -1px rgba(0,0,0,.3);">
 <div class="abs" style="left:5px;top:38.500px;width:28px;height:1px;background:#e6e6e6;"></div>
 <svg class="abs" style="left:10.500px;top:10.500px;" width="17" height="17" viewBox="0 0 17 17"><path d="M8.500 0v17M0 8.500h17" stroke="#666" stroke-width="3.200"/></svg>
 <svg class="abs" style="left:10.500px;top:49.500px;" width="17" height="17" viewBox="0 0 17 17"><path d="M0 8.500h17" stroke="#666" stroke-width="3.200"/></svg></div>
<div class="abs" style="left:466px;top:346.500px;width:338px;height:10px;background:rgba(255,255,255,.72);"></div>
<div class="abs" style="left:597px;top:290px;width:154px;height:66px;background:rgba(255,255,255,.84);"></div>
<div class="abs" style="left:601.500px;top:293px;font-size:17.600px;color:#555;line-height:20px;white-space:nowrap;">In Selection:</div>
<div class="abs" style="left:601.500px;top:315px;font-size:11.400px;font-weight:bold;color:#222;line-height:13px;white-space:nowrap;">Route Capacity: 0</div>
<div class="abs" style="left:601.500px;top:331.500px;font-size:11.400px;font-weight:bold;color:#222;line-height:13px;white-space:nowrap;">Total Price: $3,096.70*</div>
<div class="abs" style="left:467.500px;top:345.500px;font-size:9.400px;color:#222;line-height:11px;white-space:nowrap;">Keyboard shortcuts</div>
<div class="abs" style="left:562.500px;top:345.500px;font-size:9.400px;color:#222;line-height:11px;white-space:nowrap;">Map data &copy;2023 Google</div>
<div class="abs" style="left:680px;top:345.500px;font-size:9.400px;color:#222;line-height:11px;white-space:nowrap;">Terms</div>
<div class="abs" style="left:717.500px;top:345.500px;font-size:9.400px;color:#222;line-height:11px;white-space:nowrap;">Report a map error</div>
</div>
<!-- SCHEDULE -->
<div id="sched">
<div class="hl" style="left:56px;top:498px;width:1129px;"></div>
<div class="hl" style="left:56px;top:525px;width:1129px;"></div>
<div class="hl" style="left:56px;top:736px;width:1129px;"></div>
<div class="vl" style="left:56px;top:498px;height:239px;background:#ddd;"></div>
<div class="vl" style="left:1184.500px;top:498px;height:239px;background:#ddd;"></div>
<div class="abs" style="left:57px;top:638px;width:338px;height:42px;background:#da8476;"></div>
<div class="abs" style="left:394px;top:499px;width:4.500px;height:237px;background:#eeeeee;"></div>
<div class="ql" style="left:426.5px;top:526px;height:210px;"></div>
<div class="ql" style="left:456.2px;top:526px;height:210px;"></div>
<div class="ql" style="left:485.8px;top:526px;height:210px;"></div>
<div class="vl" style="left:515.4px;top:499px;height:237px;"></div>
<div class="ql" style="left:545.0px;top:526px;height:210px;"></div>
<div class="ql" style="left:574.7px;top:526px;height:210px;"></div>
<div class="ql" style="left:604.3px;top:526px;height:210px;"></div>
<div class="vl" style="left:633.9px;top:499px;height:237px;"></div>
<div class="ql" style="left:663.6px;top:526px;height:210px;"></div>
<div class="ql" style="left:693.2px;top:526px;height:210px;"></div>
<div class="ql" style="left:722.8px;top:526px;height:210px;"></div>
<div class="vl" style="left:752.5px;top:499px;height:237px;"></div>
<div class="ql" style="left:782.1px;top:526px;height:210px;"></div>
<div class="ql" style="left:811.7px;top:526px;height:210px;"></div>
<div class="ql" style="left:841.4px;top:526px;height:210px;"></div>
<div class="vl" style="left:871.0px;top:499px;height:237px;"></div>
<div class="ql" style="left:900.6px;top:526px;height:210px;"></div>
<div class="ql" style="left:930.2px;top:526px;height:210px;"></div>
<div class="ql" style="left:959.9px;top:526px;height:210px;"></div>
<div class="vl" style="left:989.5px;top:499px;height:237px;"></div>
<div class="ql" style="left:1019.1px;top:526px;height:210px;"></div>
<div class="ql" style="left:1048.8px;top:526px;height:210px;"></div>
<div class="ql" style="left:1078.4px;top:526px;height:210px;"></div>
<div class="vl" style="left:1108.0px;top:499px;height:237px;"></div>
<div class="ql" style="left:1137.7px;top:526px;height:210px;"></div>
<div class="ql" style="left:1167.3px;top:526px;height:210px;"></div>
<div class="hl" style="left:57px;top:637.500px;width:1128px;background:#ccc;"></div>
<div class="hl" style="left:57px;top:687px;width:1128px;background:#ccc;"></div>
<div class="hr" style="left:401.9px;">8am</div>
<div class="hr" style="left:520.4px;">9am</div>
<div class="hr" style="left:638.9px;">10am</div>
<div class="hr" style="left:757.5px;">11am</div>
<div class="hr" style="left:876.0px;">12pm</div>
<div class="hr" style="left:994.5px;">1pm</div>
<div class="hr" style="left:1113.0px;">2pm</div>
<div class="an" style="left:65.500px;top:503.500px;font-size:14px;">Assignees</div>
<div class="abs" style="left:305.300px;top:502px;width:85px;height:20.200px;border-radius:3px;background:#70b468;color:#fff;font-size:11.600px;line-height:20.200px;padding-left:19.700px;white-space:nowrap;">Add Drivers</div>
<svg class="abs" style="left:310.500px;top:506px;" width="10.500" height="10.500" viewBox="0 0 11 11"><path d="M5.500 0v11M0 5.500h11" stroke="#fff" stroke-width="3" fill="none"/></svg>
<div class="lk" style="left:65.5px;top:533.5px;"><svg class="abs" style="left:5px;top:5px;" width="10" height="11" viewBox="3 0 18 23"><path fill="#222" d="M18 8h-1V6c0-2.760-2.240-5-5-5S7 3.240 7 6v2H6c-1.100 0-2 .9-2 2v10c0 1.100.9 2 2 2h12c1.100 0 2-.9 2-2V10c0-1.100-.9-2-2-2zm-9-2c0-1.660 1.340-3 3-3s3 1.340 3 3v2H9V6z"/></svg></div>
<div class="an" style="left:92px;top:537px;">Alberto Gonzalez</div>
<div class="bdg" style="left:202.500px;top:538px;width:36px;">6/100</div>
<div class="cb" style="left:243.5px;top:537.5px;"><svg class="abs" style="left:1px;top:1px;" width="10" height="10" viewBox="0 0 10 10"><path d="M1.600 5.200l2.300 2.300 4.500-5.200" fill="none" stroke="#fff" stroke-width="1.800"/></svg></div>
<div class="rd" style="left:260.500px;top:533.500px;">-</div>
<div class="dd" style="left:284px;top:533.500px;"></div>
<div class="lk" style="left:65.5px;top:647px;"><svg class="abs" style="left:5px;top:5px;" width="10" height="11" viewBox="3 0 18 23"><path fill="#222" d="M18 8h-1V6c0-2.760-2.240-5-5-5S7 3.240 7 6v2H6c-1.100 0-2 .9-2 2v10c0 1.100.9 2 2 2h12c1.100 0 2-.9 2-2V10c0-1.100-.9-2-2-2zm-9-2c0-1.660 1.340-3 3-3s3 1.340 3 3v2H9V6z"/></svg></div>
<div class="an" style="left:92px;top:650.500px;">Bobby Deery</div>
<div class="cb" style="left:180px;top:650.5px;"><svg class="abs" style="left:1px;top:1px;" width="10" height="10" viewBox="0 0 10 10"><path d="M1.600 5.200l2.300 2.300 4.500-5.200" fill="none" stroke="#fff" stroke-width="1.800"/></svg></div>
<div class="rd" style="left:197px;top:647px;">-</div>
<div class="dd" style="left:221px;top:647px;border-color:#fff;"></div>
<div class="lk" style="left:65.5px;top:696.5px;"><svg class="abs" style="left:5px;top:5px;" width="10" height="11" viewBox="3 0 18 23"><path fill="#222" d="M18 8h-1V6c0-2.760-2.240-5-5-5S7 3.240 7 6v2H6c-1.100 0-2 .9-2 2v10c0 1.100.9 2 2 2h12c1.100 0 2-.9 2-2V10c0-1.100-.9-2-2-2zm-9-2c0-1.660 1.340-3 3-3s3 1.340 3 3v2H9V6z"/></svg></div>
<div class="an" style="left:92px;top:700px;">Crew 2</div>
<div class="bdg" style="left:136px;top:701px;width:37px;">0/100</div>
<div class="cb" style="left:177.5px;top:700.3px;"><svg class="abs" style="left:1px;top:1px;" width="10" height="10" viewBox="0 0 10 10"><path d="M1.600 5.200l2.300 2.300 4.500-5.200" fill="none" stroke="#fff" stroke-width="1.800"/></svg></div>
<div class="rd" style="left:195px;top:696.500px;">-</div>
<div class="dd" style="left:218.500px;top:696.500px;"></div>
<div class="ev m" style="left:398.3px;top:525.7px;width:786.7px;height:21.3px;"><div class="ic" style=""></div><svg style="left:1.700px;top:1px;" width="13.600" height="13.600" viewBox="0 0 24 24"><path fill="#fff" d="M10 20v-6h4v6h5v-8h3L12 3 2 12h3v8z"/></svg><div class="tx" style="top:2.500px;font-size:11.500px;"><div style=""><span style="display:inline-block;width:0;height:0;border-left:4px solid transparent;border-bottom:5px solid #7d8f8b;margin:0 3px 0 0;vertical-align:-3px;"></span>#695 General Maintenance - Brooks HOA</div></div></div>
<div class="ev m" style="left:398.3px;top:549.0px;width:117.4px;height:36.0px;"><div class="ic" style=""></div><svg style="left:1.700px;top:1px;" width="13.600" height="13.600" viewBox="0 0 24 24"><path fill="#fff" d="M10 20v-6h4v6h5v-8h3L12 3 2 12h3v8z"/></svg><svg style="left:1px;top:15.400px;" width="15.500" height="15.500" viewBox="0 0 24 24"><path fill="#fff" d="M12 12.750c1.630 0 3.070.390 4.240.9 1.080.480 1.760 1.560 1.760 2.730V18H6v-1.610c0-1.180.68-2.260 1.760-2.730 1.170-.52 2.610-.91 4.240-.91zM4 13c1.100 0 2-.9 2-2s-.9-2-2-2-2 .9-2 2 .9 2 2 2zm1.130 1.100c-.37-.06-.74-.1-1.130-.1-.99 0-1.930.21-2.780.58C.48 14.900 0 15.620 0 16.430V18h4.500v-1.610c0-.83.23-1.610.63-2.290zM20 13c1.100 0 2-.9 2-2s-.9-2-2-2-2 .9-2 2 .9 2 2 2zm4 3.430c0-.81-.48-1.530-1.220-1.850-.85-.37-1.790-.58-2.780-.58-.39 0-.76.040-1.130.1.400.68.630 1.460.630 2.290V18H24v-1.570zM12 6c1.660 0 3 1.340 3 3s-1.340 3-3 3-3-1.340-3-3 1.340-3 3-3z"/></svg><div class="tx"><div style="padding-left:1.500px;">#282 TNR - Jon</div><div style="">Customer</div></div></div>
<div class="ev m" style="left:398.3px;top:586.7px;width:117.4px;height:39.0px;"><div class="ic" style="background:#1f4d10;"></div><svg style="left:.6px;top:-.5px;" width="15.700" height="15.700" viewBox="0 0 24 24"><path fill="#fff" d="M19 3h-4.180C14.400 1.840 13.300 1 12 1c-1.300 0-2.400.84-2.820 2H5c-1.100 0-2 .9-2 2v14c0 1.100.9 2 2 2h14c1.100 0 2-.9 2-2V5c0-1.100-.9-2-2-2zm-7 0c.55 0 1 .45 1 1s-.45 1-1 1-1-.45-1-1 .45-1 1-1zm2 14H7v-2h7v2zm3-4H7v-2h10v2zm0-4H7V7h10v2z"/></svg><div class="tx"><div style="padding-left:1.500px;">#338 Call back to</div><div style="">apologize -</div><div style="">Manny Pacquiao</div></div></div>
<div class="ev m" style="left:635.8px;top:549.0px;width:117.4px;height:38.5px;"><div class="ic" style=""></div><svg style="left:1.700px;top:1px;" width="13.600" height="13.600" viewBox="0 0 24 24"><path fill="#fff" d="M10 20v-6h4v6h5v-8h3L12 3 2 12h3v8z"/></svg><div class="tx"><div style="padding-left:1.500px;">#203 34526</div><div style="">360th St 50263 -</div><div style="">Manny Pacquiao</div></div></div>
<div class="ev m" style="left:635.8px;top:589.2px;width:117.4px;height:39.0px;"><div class="ic" style=""></div><svg style="left:1.700px;top:1px;" width="13.600" height="13.600" viewBox="0 0 24 24"><path fill="#fff" d="M10 20v-6h4v6h5v-8h3L12 3 2 12h3v8z"/></svg><svg style="left:1px;top:15.400px;" width="15.500" height="15.500" viewBox="0 0 24 24"><path fill="#fff" d="M12 12.750c1.630 0 3.070.390 4.240.9 1.080.480 1.760 1.560 1.760 2.730V18H6v-1.610c0-1.180.68-2.260 1.760-2.730 1.170-.52 2.610-.91 4.240-.91zM4 13c1.100 0 2-.9 2-2s-.9-2-2-2-2 .9-2 2 .9 2 2 2zm1.130 1.100c-.37-.06-.74-.1-1.130-.1-.99 0-1.930.21-2.780.58C.48 14.900 0 15.620 0 16.430V18h4.500v-1.610c0-.83.23-1.610.63-2.290zM20 13c1.100 0 2-.9 2-2s-.9-2-2-2-2 .9-2 2 .9 2 2 2zm4 3.430c0-.81-.48-1.530-1.220-1.850-.85-.37-1.790-.58-2.780-.58-.39 0-.76.040-1.130.1.400.68.630 1.460.630 2.290V18H24v-1.570zM12 6c1.660 0 3 1.340 3 3s-1.340 3-3 3-3-1.340-3-3 1.340-3 3-3z"/></svg><div class="tx"><div style="padding-left:1.500px;">#273 3452 N</div><div style="">Davidson St</div><div style="">28205 - Manny</div></div></div>
<div class="ev m" style="left:872.7px;top:549.0px;width:116.9px;height:38.5px;"><div class="ic" style=""></div><svg style="left:1.700px;top:1px;" width="13.600" height="13.600" viewBox="0 0 24 24"><path fill="#fff" d="M10 20v-6h4v6h5v-8h3L12 3 2 12h3v8z"/></svg><div class="tx"><div style="padding-left:1.500px;">#204 234 S 91st</div><div style="">St 50266 -</div><div style="">Manny Pacquiao</div></div></div>
<div class="ev m" style="left:1051.0px;top:549.0px;width:116.6px;height:38.5px;"><div class="ic" style=""></div><svg style="left:1.700px;top:1px;" width="13.600" height="13.600" viewBox="0 0 24 24"><path fill="#fff" d="M10 20v-6h4v6h5v-8h3L12 3 2 12h3v8z"/></svg><div class="tx"><div style="padding-left:1.500px;">#246-51 23423</div><div style="">Mt Pleasant Rd</div><div style="">47025 - Manny</div></div></div>
<div class="ev r" style="left:398.3px;top:638.3px;width:28.7px;height:39.0px;"><div class="ic" style=""></div><svg style="left:1.700px;top:1px;" width="13.600" height="13.600" viewBox="0 0 24 24"><path fill="#fff" d="M10 20v-6h4v6h5v-8h3L12 3 2 12h3v8z"/></svg><div class="tx" style="left:22px;"><div style="padding-left:1.500px;">&nbsp;</div><div style="">#</div><div style="">3</div></div></div>
<div class="ev r" style="left:449.3px;top:638.3px;width:117.4px;height:39.0px;"><div class="ic" style=""></div><svg style="left:1.700px;top:1px;" width="13.600" height="13.600" viewBox="0 0 24 24"><path fill="#fff" d="M10 20v-6h4v6h5v-8h3L12 3 2 12h3v8z"/></svg><svg style="left:1px;top:15.400px;" width="15.500" height="15.500" viewBox="0 0 24 24"><path fill="#fff" d="M12 12.750c1.630 0 3.070.390 4.240.9 1.080.480 1.760 1.560 1.760 2.730V18H6v-1.610c0-1.180.68-2.260 1.760-2.730 1.170-.52 2.610-.91 4.240-.91zM4 13c1.100 0 2-.9 2-2s-.9-2-2-2-2 .9-2 2 .9 2 2 2zm1.130 1.100c-.37-.06-.74-.1-1.130-.1-.99 0-1.930.21-2.780.58C.48 14.900 0 15.620 0 16.430V18h4.500v-1.610c0-.83.23-1.610.63-2.290zM20 13c1.100 0 2-.9 2-2s-.9-2-2-2-2 .9-2 2 .9 2 2 2zm4 3.430c0-.81-.48-1.530-1.220-1.850-.85-.37-1.790-.58-2.780-.58-.39 0-.76.040-1.130.1.400.68.630 1.460.630 2.290V18H24v-1.570zM12 6c1.660 0 3 1.340 3 3s-1.340 3-3 3-3-1.340-3-3 1.340-3 3-3z"/></svg><div class="tx"><div style="padding-left:1.500px;">#222 545</div><div style="">Peachtree</div><div style="">Dunwoody Rd -</div></div></div>
<div class="ev r" style="left:603.0px;top:638.3px;width:117.1px;height:39.0px;"><div class="ic" style=""></div><svg style="left:1.700px;top:1px;" width="13.600" height="13.600" viewBox="0 0 24 24"><path fill="#fff" d="M10 20v-6h4v6h5v-8h3L12 3 2 12h3v8z"/></svg><div class="tx"><div style="padding-left:1.500px;">#242 4354 E</div><div style="">Ponce de Leon</div><div style="">Ave 30021 -</div></div></div>
<div class="ev r" style="left:749.6px;top:638.3px;width:116.9px;height:39.0px;"><div class="ic" style=""></div><svg style="left:1.700px;top:1px;" width="13.600" height="13.600" viewBox="0 0 24 24"><path fill="#fff" d="M10 20v-6h4v6h5v-8h3L12 3 2 12h3v8z"/></svg><svg style="left:1px;top:15.400px;" width="15.500" height="15.500" viewBox="0 0 24 24"><path fill="#fff" d="M12 12.750c1.630 0 3.070.390 4.240.9 1.080.480 1.760 1.560 1.760 2.730V18H6v-1.610c0-1.180.68-2.260 1.760-2.730 1.170-.52 2.610-.91 4.240-.91zM4 13c1.100 0 2-.9 2-2s-.9-2-2-2-2 .9-2 2 .9 2 2 2zm1.130 1.100c-.37-.06-.74-.1-1.130-.1-.99 0-1.930.21-2.780.58C.48 14.900 0 15.620 0 16.430V18h4.500v-1.610c0-.83.23-1.610.63-2.290zM20 13c1.100 0 2-.9 2-2s-.9-2-2-2-2 .9-2 2 .9 2 2 2zm4 3.430c0-.81-.48-1.530-1.220-1.850-.85-.37-1.790-.58-2.780-.58-.39 0-.76.040-1.130.1.400.68.630 1.460.630 2.290V18H24v-1.570zM12 6c1.660 0 3 1.340 3 3s-1.340 3-3 3-3-1.340-3-3 1.340-3 3-3z"/></svg><div class="tx"><div style="padding-left:1.500px;">#259-8 Test</div><div style="">Simple Job -</div><div style="">Manny Pacquiao</div></div></div>
<div class="ev r" style="left:868.3px;top:638.3px;width:117.3px;height:39.0px;"><div class="ic" style=""></div><svg style="left:1.700px;top:1px;" width="13.600" height="13.600" viewBox="0 0 24 24"><path fill="#fff" d="M10 20v-6h4v6h5v-8h3L12 3 2 12h3v8z"/></svg><svg style="left:1px;top:15.400px;" width="15.500" height="15.500" viewBox="0 0 24 24"><path fill="#fff" d="M12 12.750c1.630 0 3.070.390 4.240.9 1.080.480 1.760 1.560 1.760 2.730V18H6v-1.610c0-1.180.68-2.260 1.760-2.730 1.170-.52 2.610-.91 4.240-.91zM4 13c1.100 0 2-.9 2-2s-.9-2-2-2-2 .9-2 2 .9 2 2 2zm1.130 1.100c-.37-.06-.74-.1-1.130-.1-.99 0-1.930.21-2.780.58C.48 14.900 0 15.620 0 16.430V18h4.500v-1.610c0-.83.23-1.610.63-2.290zM20 13c1.100 0 2-.9 2-2s-.9-2-2-2-2 .9-2 2 .9 2 2 2zm4 3.430c0-.81-.48-1.530-1.220-1.850-.85-.37-1.790-.58-2.780-.58-.39 0-.76.040-1.130.1.400.68.630 1.460.630 2.290V18H24v-1.570zM12 6c1.660 0 3 1.340 3 3s-1.340 3-3 3-3-1.340-3-3 1.340-3 3-3z"/></svg><div class="tx"><div style="padding-left:1.500px;">#259-11 Test</div><div style="">Simple Job -</div><div style="">Manny Pacquiao</div></div></div>
<div class="ev r" style="left:449.3px;top:687.8px;width:117.4px;height:39.0px;"><div class="ic" style=""></div><svg style="left:1.700px;top:1px;" width="13.600" height="13.600" viewBox="0 0 24 24"><path fill="#fff" d="M10 20v-6h4v6h5v-8h3L12 3 2 12h3v8z"/></svg><svg style="left:1px;top:15.400px;" width="15.500" height="15.500" viewBox="0 0 24 24"><path fill="#fff" d="M12 12.750c1.630 0 3.070.390 4.240.9 1.080.480 1.760 1.560 1.760 2.730V18H6v-1.610c0-1.180.68-2.260 1.760-2.730 1.170-.52 2.610-.91 4.240-.91zM4 13c1.100 0 2-.9 2-2s-.9-2-2-2-2 .9-2 2 .9 2 2 2zm1.130 1.100c-.37-.06-.74-.1-1.130-.1-.99 0-1.930.21-2.780.58C.48 14.900 0 15.620 0 16.430V18h4.500v-1.610c0-.83.23-1.610.63-2.290zM20 13c1.100 0 2-.9 2-2s-.9-2-2-2-2 .9-2 2 .9 2 2 2zm4 3.430c0-.81-.48-1.530-1.220-1.850-.85-.37-1.790-.58-2.780-.58-.39 0-.76.040-1.130.1.400.68.630 1.460.630 2.290V18H24v-1.570zM12 6c1.660 0 3 1.340 3 3s-1.340 3-3 3-3-1.340-3-3 1.340-3 3-3z"/></svg><div class="tx"><div style="padding-left:1.500px;">#222 545</div><div style="">Peachtree</div><div style="">Dunwoody Rd -</div></div></div>
<div class="ev r" style="left:749.6px;top:687.8px;width:116.9px;height:39.0px;"><div class="ic" style=""></div><svg style="left:1.700px;top:1px;" width="13.600" height="13.600" viewBox="0 0 24 24"><path fill="#fff" d="M10 20v-6h4v6h5v-8h3L12 3 2 12h3v8z"/></svg><svg style="left:1px;top:15.400px;" width="15.500" height="15.500" viewBox="0 0 24 24"><path fill="#fff" d="M12 12.750c1.630 0 3.070.390 4.240.9 1.080.480 1.760 1.560 1.760 2.730V18H6v-1.610c0-1.180.68-2.260 1.760-2.730 1.170-.52 2.610-.91 4.240-.91zM4 13c1.100 0 2-.9 2-2s-.9-2-2-2-2 .9-2 2 .9 2 2 2zm1.130 1.100c-.37-.06-.74-.1-1.130-.1-.99 0-1.930.21-2.780.58C.48 14.900 0 15.620 0 16.430V18h4.500v-1.610c0-.83.23-1.610.63-2.290zM20 13c1.100 0 2-.9 2-2s-.9-2-2-2-2 .9-2 2 .9 2 2 2zm4 3.430c0-.81-.48-1.530-1.220-1.850-.85-.37-1.790-.58-2.780-.58-.39 0-.76.040-1.130.1.400.68.630 1.460.630 2.290V18H24v-1.570zM12 6c1.660 0 3 1.340 3 3s-1.340 3-3 3-3-1.340-3-3 1.340-3 3-3z"/></svg><div class="tx"><div style="padding-left:1.500px;">#259-8 Test</div><div style="">Simple Job -</div><div style="">Manny Pacquiao</div></div></div>
</div>
<!-- LEGEND -->
<div id="legend">
<div class="abs" style="left:400px;top:737px;width:794px;height:38px;background:linear-gradient(100deg,rgba(240,240,240,0) 0%,rgba(236,236,236,.9) 60%,rgba(236,236,236,.9) 100%);"></div>
<div class="abs" style="left:57px;top:737px;width:1137px;height:32px;background:linear-gradient(180deg,rgba(255,255,255,1),rgba(255,255,255,.55) 45%,rgba(255,255,255,0));"></div>
<div class="lg" style="left:76.500px;">Legend: Visits:</div><div class="li" style="left:176.3px;top:747.5px;background:#e78f2e;"><svg width="15.500" height="15.500" viewBox="0 0 24 24"><path fill="#fff" d="M10 20v-6h4v6h5v-8h3L12 3 2 12h3v8z"/></svg></div><div class="lg" style="left:200.500px;">Unscheduled &amp; Scheduled but Unassigned</div><div class="li" style="left:478.3px;top:747.5px;background:#3f7c27;"><svg width="15.500" height="15.500" viewBox="0 0 24 24"><path fill="#fff" d="M10 20v-6h4v6h5v-8h3L12 3 2 12h3v8z"/></svg></div><div class="lg" style="left:502.500px;">Scheduled - Assigned</div><div class="li" style="left:646.3px;top:747.5px;background:#3468e8;"><svg width="15.500" height="15.500" viewBox="0 0 24 24"><path fill="#fff" d="M10 20v-6h4v6h5v-8h3L12 3 2 12h3v8z"/></svg></div><div class="lg" style="left:670.500px;">Completed</div><div class="li" style="left:744px;top:747.5px;background:#4a4a4a;"><svg width="15.500" height="15.500" viewBox="0 0 24 24"><path fill="#fff" d="M10 20v-6h4v6h5v-8h3L12 3 2 12h3v8z"/></svg></div><div class="lg" style="left:768px;">Approved</div>
<div class="lg2" style="left:76.500px;">Tasks:</div><div class="li" style="left:121.5px;top:766.8px;background:#e78f2e;"><svg width="15.500" height="15.500" viewBox="0 0 24 24"><path fill="#fff" d="M19 3h-4.180C14.400 1.840 13.300 1 12 1c-1.300 0-2.400.84-2.820 2H5c-1.100 0-2 .9-2 2v14c0 1.100.9 2 2 2h14c1.100 0 2-.9 2-2V5c0-1.100-.9-2-2-2zm-7 0c.55 0 1 .45 1 1s-.45 1-1 1-1-.45-1-1 .45-1 1-1zm2 14H7v-2h7v2zm3-4H7v-2h10v2zm0-4H7V7h10v2z"/></svg></div><div class="lg2" style="left:147px;">Unscheduled &amp; Scheduled but Unassigned</div><div class="lg2" style="left:437.500px;font-style:italic;letter-spacing:-.47px;">Scheduled &amp; Assigned:</div><div class="li" style="left:589px;top:766.8px;background:#1f4d10;"><svg width="15.500" height="15.500" viewBox="0 0 24 24"><path fill="#fff" d="M19 3h-4.180C14.400 1.840 13.300 1 12 1c-1.300 0-2.400.84-2.820 2H5c-1.100 0-2 .9-2 2v14c0 1.100.9 2 2 2h14c1.100 0 2-.9 2-2V5c0-1.100-.9-2-2-2zm-7 0c.55 0 1 .45 1 1s-.45 1-1 1-1-.45-1-1 .45-1 1-1zm2 14H7v-2h7v2zm3-4H7v-2h10v2zm0-4H7V7h10v2z"/></svg></div><div class="lg2" style="left:613.500px;">To Do</div><div class="li" style="left:651.5px;top:766.8px;background:#10108a;"><svg width="15.500" height="15.500" viewBox="0 0 24 24"><path fill="#fff" d="M19 3h-4.180C14.400 1.840 13.300 1 12 1c-1.300 0-2.400.84-2.820 2H5c-1.100 0-2 .9-2 2v14c0 1.100.9 2 2 2h14c1.100 0 2-.9 2-2V5c0-1.100-.9-2-2-2zm-7 0c.55 0 1 .45 1 1s-.45 1-1 1-1-.45-1-1 .45-1 1-1zm2 14H7v-2h7v2zm3-4H7v-2h10v2zm0-4H7V7h10v2z"/></svg></div><div class="lg2" style="left:678.500px;">In Progress</div><div class="li" style="left:755px;top:766.8px;background:#b5b5b5;"><svg width="15.500" height="15.500" viewBox="0 0 24 24"><path fill="#fff" d="M19 3h-4.180C14.400 1.840 13.300 1 12 1c-1.300 0-2.400.84-2.820 2H5c-1.100 0-2 .9-2 2v14c0 1.100.9 2 2 2h14c1.100 0 2-.9 2-2V5c0-1.100-.9-2-2-2zm-7 0c.55 0 1 .45 1 1s-.45 1-1 1-1-.45-1-1 .45-1 1-1zm2 14H7v-2h7v2zm3-4H7v-2h10v2zm0-4H7V7h10v2z"/></svg></div><div class="lg2" style="left:780px;">Complete</div><svg class="abs" style="left:845.500px;top:768.500px;" width="15" height="15" viewBox="0 0 24 24"><path fill="#333" d="M10 16v-1H3.010L3 19c0 1.110.89 2 2 2h14c1.110 0 2-.89 2-2v-4h-7v1h-4zm10-9h-4.010V5l-2-2h-4l-2 2v2H4c-1.100 0-2 .9-2 2v3c0 1.110.89 2 2 2h6v-2h4v2h6c1.100 0 2-.9 2-2V9c0-1.100-.9-2-2-2zm-6 0h-4V5h4v2z"/></svg><div class="lg2" style="left:867px;">(With Job and On Site)</div>
</div>
</div>
</body>
</html>
